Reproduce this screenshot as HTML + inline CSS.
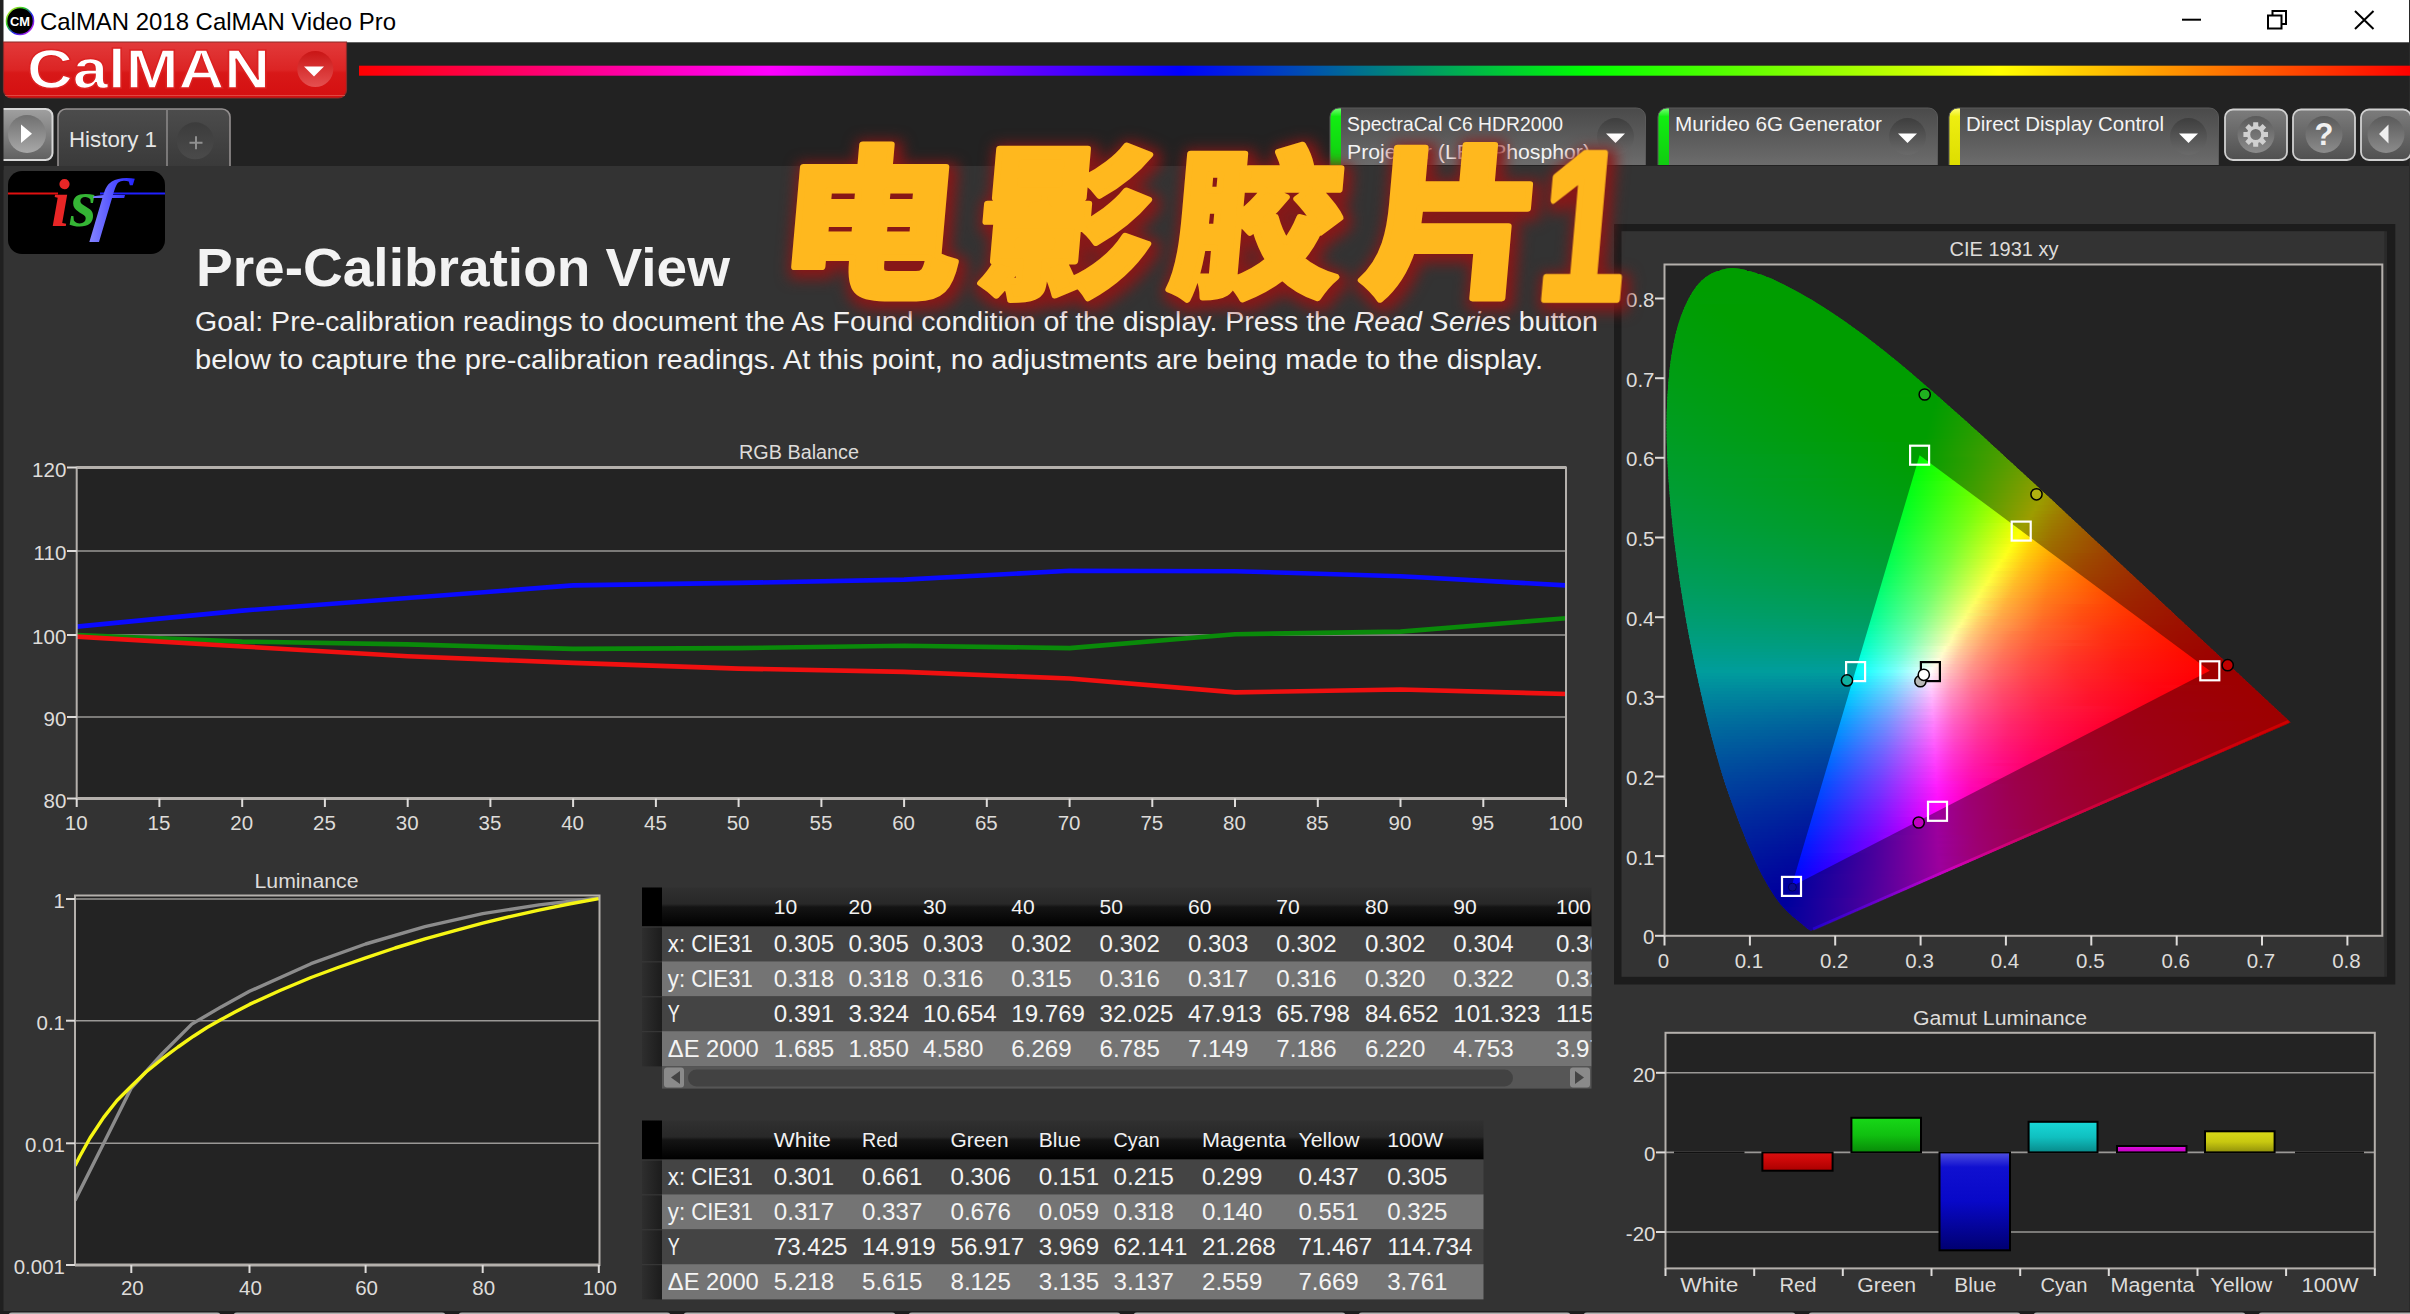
<!DOCTYPE html>
<html><head><meta charset="utf-8"><title>CalMAN 2018 CalMAN Video Pro</title>
<style>html,body{margin:0;padding:0;background:#333;overflow:hidden}svg{display:block}text{font-family:"Liberation Sans","Noto Sans CJK SC",sans-serif}</style></head>
<body>
<svg width="2410" height="1314" viewBox="0 0 2410 1314">
<defs>
<linearGradient id="cmring" x1="0" y1="0" x2="1" y2="1"><stop offset="0" stop-color="#ee3"/><stop offset=".35" stop-color="#2c2"/><stop offset=".6" stop-color="#22e"/><stop offset="1" stop-color="#e2e"/></linearGradient>
<linearGradient id="redb" x1="0" y1="0" x2="0" y2="1"><stop offset="0" stop-color="#e23a3a"/><stop offset="0.5" stop-color="#dc2424"/><stop offset="0.55" stop-color="#d81818"/><stop offset="1" stop-color="#d40f10"/></linearGradient>
<linearGradient id="redc" x1="0" y1="0" x2="0" y2="1"><stop offset="0" stop-color="#c91515"/><stop offset="1" stop-color="#e55050"/></linearGradient>
<linearGradient id="rain" x1="0" y1="0" x2="1" y2="0"><stop offset="0" stop-color="#f00"/><stop offset="0.2" stop-color="#f0f"/><stop offset="0.4" stop-color="#00f"/><stop offset="0.6" stop-color="#0f0"/><stop offset="0.8" stop-color="#ff0"/><stop offset="1" stop-color="#f00"/></linearGradient>
<linearGradient id="btn" x1="0" y1="0" x2="0" y2="1"><stop offset="0" stop-color="#a0a0a0"/><stop offset="0.5" stop-color="#808080"/><stop offset="1" stop-color="#606060"/></linearGradient>
<linearGradient id="btnc" x1="0" y1="0" x2="0" y2="1"><stop offset="0" stop-color="#707070"/><stop offset="1" stop-color="#a8a8a8"/></linearGradient>
<linearGradient id="tab" x1="0" y1="0" x2="0" y2="1"><stop offset="0" stop-color="#4c4c4c"/><stop offset="1" stop-color="#3a3a3a"/></linearGradient>
<linearGradient id="plusc" x1="0" y1="0" x2="0" y2="1"><stop offset="0" stop-color="#3c3c3c"/><stop offset="1" stop-color="#4a4a4a"/></linearGradient>
<linearGradient id="dtab" x1="0" y1="0" x2="0" y2="1"><stop offset="0" stop-color="#4a4a4a"/><stop offset="1" stop-color="#6c6c6c"/></linearGradient>
<linearGradient id="gstripe" x1="0" y1="0" x2="0" y2="1"><stop offset="0" stop-color="#7f7"/><stop offset="0.15" stop-color="#1e1"/><stop offset="1" stop-color="#1c1"/></linearGradient>
<linearGradient id="ystripe" x1="0" y1="0" x2="0" y2="1"><stop offset="0" stop-color="#ff7"/><stop offset="0.15" stop-color="#ee1"/><stop offset="1" stop-color="#dd0"/></linearGradient>
<linearGradient id="ddc" x1="0" y1="0" x2="0" y2="1"><stop offset="0" stop-color="#3e3e3e"/><stop offset="1" stop-color="#6a6a6a"/></linearGradient>
<clipPath id="cpa"><path d="M1330.0,165V117a9,9 0 0 1 9,-9H1636.5a9,9 0 0 1 9,9V165Z"/></clipPath>
<clipPath id="cpb"><path d="M1658.0,165V117a9,9 0 0 1 9,-9H1928.5a9,9 0 0 1 9,9V165Z"/></clipPath>
<clipPath id="cpc"><path d="M1949.0,165V117a9,9 0 0 1 9,-9H2209.5a9,9 0 0 1 9,9V165Z"/></clipPath>
<linearGradient id="rbtn" x1="0" y1="0" x2="0" y2="1"><stop offset="0" stop-color="#7c7c7c"/><stop offset="0.5" stop-color="#666"/><stop offset="1" stop-color="#505050"/></linearGradient>
<linearGradient id="rbtnc" x1="0" y1="0" x2="0" y2="1"><stop offset="0" stop-color="#5a5a5a"/><stop offset="1" stop-color="#8c8c8c"/></linearGradient>
<linearGradient id="isfr" x1="0" y1="0" x2="1" y2="0"><stop offset="0" stop-color="#f55"/><stop offset="1" stop-color="#d00"/></linearGradient>
<linearGradient id="isfb" x1="0" y1="0" x2="1" y2="0"><stop offset="0" stop-color="#88f"/><stop offset="1" stop-color="#22f"/></linearGradient>
<clipPath id="rgbclip"><rect x="76.7" y="467.5" width="1489.3" height="331.0"/></clipPath>
<clipPath id="lumclip"><rect x="75.0" y="895" width="524.5" height="370.0"/></clipPath>
<linearGradient id="thead" x1="0" y1="0" x2="0" y2="1"><stop offset="0" stop-color="#303030"/><stop offset="0.42" stop-color="#282828"/><stop offset="0.5" stop-color="#141414"/><stop offset="1" stop-color="#000"/></linearGradient>
<linearGradient id="tleft" x1="0" y1="0" x2="1" y2="0"><stop offset="0" stop-color="#2e2e2e"/><stop offset="1" stop-color="#1c1c1c"/></linearGradient>
<clipPath id="t1"><rect x="662" y="887.5" width="929.5" height="400"/></clipPath>
<clipPath id="t2"><rect x="662" y="1120.5" width="821.5" height="400"/></clipPath>
<linearGradient id="bR" x1="0" y1="0" x2="0" y2="1"><stop offset="0" stop-color="#d81010"/><stop offset="0.4" stop-color="#cc0808"/><stop offset="1" stop-color="#a00"/></linearGradient>
<linearGradient id="bG" x1="0" y1="0" x2="0" y2="1"><stop offset="0" stop-color="#18d818"/><stop offset="0.5" stop-color="#10c010"/><stop offset="1" stop-color="#088a08"/></linearGradient>
<linearGradient id="bB" x1="0" y1="0" x2="0" y2="1"><stop offset="0" stop-color="#5050e0"/><stop offset="0.15" stop-color="#1010d0"/><stop offset="0.5" stop-color="#0808c8"/><stop offset="1" stop-color="#000070"/></linearGradient>
<linearGradient id="bC" x1="0" y1="0" x2="0" y2="1"><stop offset="0" stop-color="#18d8d8"/><stop offset="0.5" stop-color="#10c0c0"/><stop offset="1" stop-color="#088a8a"/></linearGradient>
<linearGradient id="bM" x1="0" y1="0" x2="0" y2="1"><stop offset="0" stop-color="#e010e0"/><stop offset="1" stop-color="#c000c0"/></linearGradient>
<linearGradient id="bY" x1="0" y1="0" x2="0" y2="1"><stop offset="0" stop-color="#d8d818"/><stop offset="0.5" stop-color="#c8c810"/><stop offset="1" stop-color="#90900a"/></linearGradient>
<filter id="glow" x="-10%" y="-25%" width="120%" height="150%" color-interpolation-filters="sRGB"><feMorphology in="SourceAlpha" operator="dilate" radius="4.5" result="d"/><feGaussianBlur in="d" stdDeviation="7" result="b"/><feOffset in="b" dx="3" dy="4" result="o"/><feFlood flood-color="#8c1616" flood-opacity="0.95"/><feComposite in2="o" operator="in" result="s"/><feMerge><feMergeNode in="s"/><feMergeNode in="SourceGraphic"/></feMerge></filter>
</defs>
<rect x="0.0" y="0.0" width="2410.0" height="1314.0" fill="#333" />
<rect x="0.0" y="42.0" width="2410.0" height="124.0" fill="#222" />
<rect x="0.0" y="0.0" width="2410.0" height="42.3" fill="#fff" />
<rect x="0.0" y="0.0" width="3.5" height="1314.0" fill="#202020" />
<rect x="2409.0" y="0.0" width="1.0" height="1314.0" fill="#2a2a2a" />
<circle cx="20" cy="21" r="13.5" fill="#000" stroke="url(#cmring)" stroke-width="1.6"/>
<text x="20.0" y="26.0" font-size="13.5" fill="#fff" textLength="20.0" lengthAdjust="spacingAndGlyphs" text-anchor="middle" font-weight="bold" >CM</text>
<text x="40.0" y="30.2" font-size="24.2" fill="#000" textLength="356.0" lengthAdjust="spacingAndGlyphs" >CalMAN 2018 CalMAN Video Pro</text>
<path d="M2182,19.7H2201" stroke="#000" stroke-width="2" fill="none"/>
<path d="M2268,15.5h13.5v13h-13.5z M2272.5,15.5v-4.5h13.5v13h-4.5" stroke="#000" stroke-width="2" fill="none"/>
<path d="M2355,11l18.5,18M2373.5,11l-18.5,18" stroke="#000" stroke-width="2" fill="none"/>
<path d="M3.5,42H346.5V90a8,8 0 0 1 -8,8H11.5a8,8 0 0 1 -8,-8Z" fill="url(#redb)" stroke="#8a2a28" stroke-width="1.2"/>
<path d="M5,95.5H345" stroke="#e86a60" stroke-width="1" opacity=".6"/>
<text x="27.0" y="88.0" font-size="56.0" fill="#fff" textLength="243.0" lengthAdjust="spacingAndGlyphs" font-weight="bold" stroke="#dc2222" stroke-width="1.4" style="paint-order:fill stroke">CalMAN</text>
<circle cx="315.3" cy="69" r="18" fill="url(#redc)"/>
<path d="M304,66.5h20l-10,10z" fill="#fff"/>
<rect x="359.0" y="65.7" width="2051.0" height="10.0" fill="url(#rain)" />
<rect x="-6" y="109" width="58.5" height="51" rx="7" fill="url(#btn)" stroke="#d8d8d8" stroke-width="2"/>
<circle cx="27" cy="134" r="19" fill="url(#btnc)"/>
<path d="M21,124.5V143L32,133.7Z" fill="#fff"/>
<rect x="0.0" y="100.0" width="3.5" height="70.0" fill="#202020" />
<path d="M58,166V117a8,8 0 0 1 8,-8H222a8,8 0 0 1 8,8V166" fill="url(#tab)" stroke="#949090" stroke-width="1.6"/>
<path d="M167,110V166" stroke="#8a8888" stroke-width="1.6"/>
<text x="69.0" y="147.0" font-size="22.5" fill="#e6e6e6" textLength="88.0" lengthAdjust="spacingAndGlyphs" >History 1</text>
<circle cx="195.3" cy="140.8" r="18.5" fill="url(#plusc)"/>
<path d="M189.5,142.7h13M196,136.2v13" stroke="#909090" stroke-width="2"/>
<g clip-path="url(#cpa)">
<rect x="1330.0" y="108.0" width="315.5" height="57.0" fill="url(#dtab)" />
<rect x="1330.0" y="108.0" width="11.0" height="57.0" fill="url(#gstripe)" />
</g>
<path d="M1330.0,165V117a9,9 0 0 1 9,-9H1636.5a9,9 0 0 1 9,9V165" fill="none" stroke="#5a5a5a" stroke-width="1"/>
<text x="1347.0" y="131.0" font-size="20.0" fill="#f4f4f4" textLength="216.0" lengthAdjust="spacingAndGlyphs" >SpectraCal C6 HDR2000</text>
<text x="1347.0" y="158.5" font-size="20.0" fill="#f4f4f4" textLength="243.0" lengthAdjust="spacingAndGlyphs" >Projector (LED Phosphor)</text>
<circle cx="1615.5" cy="136.5" r="18.5" fill="url(#ddc)"/>
<path d="M1606.0,133.5h19l-9.5,9.5z" fill="#fff"/>
<g clip-path="url(#cpb)">
<rect x="1658.0" y="108.0" width="279.5" height="57.0" fill="url(#dtab)" />
<rect x="1658.0" y="108.0" width="11.0" height="57.0" fill="url(#gstripe)" />
</g>
<path d="M1658.0,165V117a9,9 0 0 1 9,-9H1928.5a9,9 0 0 1 9,9V165" fill="none" stroke="#5a5a5a" stroke-width="1"/>
<text x="1675.0" y="131.0" font-size="20.0" fill="#f4f4f4" textLength="207.0" lengthAdjust="spacingAndGlyphs" >Murideo 6G Generator</text>
<circle cx="1907.5" cy="136.5" r="18.5" fill="url(#ddc)"/>
<path d="M1898.0,133.5h19l-9.5,9.5z" fill="#fff"/>
<g clip-path="url(#cpc)">
<rect x="1949.0" y="108.0" width="269.5" height="57.0" fill="url(#dtab)" />
<rect x="1949.0" y="108.0" width="11.0" height="57.0" fill="url(#ystripe)" />
</g>
<path d="M1949.0,165V117a9,9 0 0 1 9,-9H2209.5a9,9 0 0 1 9,9V165" fill="none" stroke="#5a5a5a" stroke-width="1"/>
<text x="1966.0" y="131.0" font-size="20.0" fill="#f4f4f4" textLength="198.0" lengthAdjust="spacingAndGlyphs" >Direct Display Control</text>
<circle cx="2188.5" cy="136.5" r="18.5" fill="url(#ddc)"/>
<path d="M2179.0,133.5h19l-9.5,9.5z" fill="#fff"/>
<rect x="2225.0" y="109.5" width="62.0" height="50.5" rx="8" fill="url(#rbtn)" stroke="#d0d0d0" stroke-width="1.8"/>
<circle cx="2256.0" cy="134.5" r="18.5" fill="url(#rbtnc)"/>
<rect x="2293.0" y="109.5" width="62.0" height="50.5" rx="8" fill="url(#rbtn)" stroke="#d0d0d0" stroke-width="1.8"/>
<circle cx="2324.0" cy="134.5" r="18.5" fill="url(#rbtnc)"/>
<rect x="2361.0" y="109.5" width="50.0" height="50.5" rx="8" fill="url(#rbtn)" stroke="#d0d0d0" stroke-width="1.8"/>
<circle cx="2386.0" cy="134.5" r="18.5" fill="url(#rbtnc)"/>
<path d="M2268.0,132.0 L2268.0,137.0 L2264.0,137.1 L2263.4,138.6 L2266.1,141.4 L2262.6,144.9 L2259.8,142.2 L2258.3,142.8 L2258.2,146.8 L2253.2,146.8 L2253.1,142.8 L2251.6,142.2 L2248.8,144.9 L2245.3,141.4 L2248.0,138.6 L2247.4,137.1 L2243.4,137.0 L2243.4,132.0 L2247.4,131.9 L2248.0,130.4 L2245.3,127.6 L2248.8,124.1 L2251.6,126.8 L2253.1,126.2 L2253.2,122.2 L2258.2,122.2 L2258.3,126.2 L2259.8,126.8 L2262.6,124.1 L2266.1,127.6 L2263.4,130.4 L2264.0,131.9 Z M2250.2,134.5 a5.5,5.5 0 1 0 11,0a5.5,5.5 0 1 0 -11,0Z" fill="#d0d0d0" fill-rule="evenodd"/>
<text x="2324.0" y="145.0" font-size="31.0" fill="#f0f0f0" text-anchor="middle" font-weight="bold" >?</text>
<path d="M2388.5,124.5V143.5L2379,134Z" fill="#eee"/>
<rect x="8.0" y="171.0" width="157.0" height="83.0" fill="#000" rx="14"/>
<path d="M8,193.5H58" stroke="#e01010" stroke-width="2.2"/><path d="M100,193.5H165" stroke="#2020ff" stroke-width="2.2"/>
<text x="51" y="226" style="font-family:'Liberation Serif',serif" font-style="italic" font-weight="bold" font-size="68"><tspan fill="#e82626">i</tspan><tspan fill="#35b535">s</tspan></text>
<text transform="translate(88,227) scale(1.75,1.04)" style="font-family:'Liberation Serif',serif" font-style="italic" font-size="68" fill="url(#isfb)">f</text>
<text x="196.0" y="286.0" font-size="54.5" fill="#f3f3f3" textLength="534.0" lengthAdjust="spacingAndGlyphs" font-weight="bold" >Pre-Calibration View</text>
<text x="195.0" y="331.0" font-size="27.0" fill="#f3f3f3" textLength="1403.0" lengthAdjust="spacingAndGlyphs" >Goal: Pre-calibration readings to document the As Found condition of the display. Press the <tspan font-style="italic">Read Series</tspan> button</text>
<text x="195.0" y="368.5" font-size="27.0" fill="#f3f3f3" textLength="1348.0" lengthAdjust="spacingAndGlyphs" >below to capture the pre-calibration readings. At this point, no adjustments are being made to the display.</text>
<rect x="76.7" y="467.5" width="1489.3" height="331.0" fill="#232323" />
<path d="M76.7,551.0H1566.0" stroke="#9a9896" stroke-width="1.6"/>
<path d="M76.7,635.0H1566.0" stroke="#9a9896" stroke-width="1.6"/>
<path d="M76.7,717.0H1566.0" stroke="#9a9896" stroke-width="1.6"/>
<g clip-path="url(#rgbclip)" fill="none" stroke-width="4.6" stroke-linejoin="round">
<polyline stroke="#0a0aff" points="76.7,626.6 242.2,610.6 407.7,598.0 573.1,585.4 738.6,582.9 904.1,579.6 1069.6,570.7 1235.0,571.2 1400.5,576.2 1566.0,585.4"/>
<polyline stroke="#0a8a0a" points="76.7,635.0 242.2,641.6 407.7,644.4 573.1,648.9 738.6,648.1 904.1,645.7 1069.6,648.1 1235.0,634.2 1400.5,631.6 1566.0,618.2"/>
<polyline stroke="#f01010" points="76.7,636.6 242.2,646.5 407.7,656.3 573.1,662.9 738.6,668.6 904.1,671.9 1069.6,678.5 1235.0,692.4 1400.5,689.5 1566.0,694.0"/>
</g>
<rect x="76.7" y="467.5" width="1489.3" height="331.0" fill="none" stroke="#b4b0ac" stroke-width="2"/>
<path d="M76.7,467.5H1566.0" stroke="#b4b0ac" stroke-width="3"/>
<path d="M76.7,798.5H1566.0" stroke="#b4b0ac" stroke-width="3"/>
<path d="M67,467.5H76.7" stroke="#dedcda" stroke-width="2"/>
<text x="66.3" y="476.5" font-size="20.5" fill="#dedcda" text-anchor="end" >120</text>
<path d="M67,551.0H76.7" stroke="#dedcda" stroke-width="2"/>
<text x="66.3" y="560.0" font-size="20.5" fill="#dedcda" text-anchor="end" >110</text>
<path d="M67,635.0H76.7" stroke="#dedcda" stroke-width="2"/>
<text x="66.3" y="644.0" font-size="20.5" fill="#dedcda" text-anchor="end" >100</text>
<path d="M67,717.0H76.7" stroke="#dedcda" stroke-width="2"/>
<text x="66.3" y="726.0" font-size="20.5" fill="#dedcda" text-anchor="end" >90</text>
<path d="M67,798.5H76.7" stroke="#dedcda" stroke-width="2"/>
<text x="66.3" y="807.5" font-size="20.5" fill="#dedcda" text-anchor="end" >80</text>
<path d="M76.7,798.5V807" stroke="#dedcda" stroke-width="2"/>
<text x="76.2" y="830.3" font-size="20.5" fill="#dedcda" text-anchor="middle" >10</text>
<path d="M159.4,798.5V807" stroke="#dedcda" stroke-width="2"/>
<text x="158.9" y="830.3" font-size="20.5" fill="#dedcda" text-anchor="middle" >15</text>
<path d="M242.2,798.5V807" stroke="#dedcda" stroke-width="2"/>
<text x="241.7" y="830.3" font-size="20.5" fill="#dedcda" text-anchor="middle" >20</text>
<path d="M324.9,798.5V807" stroke="#dedcda" stroke-width="2"/>
<text x="324.4" y="830.3" font-size="20.5" fill="#dedcda" text-anchor="middle" >25</text>
<path d="M407.7,798.5V807" stroke="#dedcda" stroke-width="2"/>
<text x="407.2" y="830.3" font-size="20.5" fill="#dedcda" text-anchor="middle" >30</text>
<path d="M490.4,798.5V807" stroke="#dedcda" stroke-width="2"/>
<text x="489.9" y="830.3" font-size="20.5" fill="#dedcda" text-anchor="middle" >35</text>
<path d="M573.1,798.5V807" stroke="#dedcda" stroke-width="2"/>
<text x="572.6" y="830.3" font-size="20.5" fill="#dedcda" text-anchor="middle" >40</text>
<path d="M655.9,798.5V807" stroke="#dedcda" stroke-width="2"/>
<text x="655.4" y="830.3" font-size="20.5" fill="#dedcda" text-anchor="middle" >45</text>
<path d="M738.6,798.5V807" stroke="#dedcda" stroke-width="2"/>
<text x="738.1" y="830.3" font-size="20.5" fill="#dedcda" text-anchor="middle" >50</text>
<path d="M821.4,798.5V807" stroke="#dedcda" stroke-width="2"/>
<text x="820.9" y="830.3" font-size="20.5" fill="#dedcda" text-anchor="middle" >55</text>
<path d="M904.1,798.5V807" stroke="#dedcda" stroke-width="2"/>
<text x="903.6" y="830.3" font-size="20.5" fill="#dedcda" text-anchor="middle" >60</text>
<path d="M986.8,798.5V807" stroke="#dedcda" stroke-width="2"/>
<text x="986.3" y="830.3" font-size="20.5" fill="#dedcda" text-anchor="middle" >65</text>
<path d="M1069.6,798.5V807" stroke="#dedcda" stroke-width="2"/>
<text x="1069.1" y="830.3" font-size="20.5" fill="#dedcda" text-anchor="middle" >70</text>
<path d="M1152.3,798.5V807" stroke="#dedcda" stroke-width="2"/>
<text x="1151.8" y="830.3" font-size="20.5" fill="#dedcda" text-anchor="middle" >75</text>
<path d="M1235.0,798.5V807" stroke="#dedcda" stroke-width="2"/>
<text x="1234.5" y="830.3" font-size="20.5" fill="#dedcda" text-anchor="middle" >80</text>
<path d="M1317.8,798.5V807" stroke="#dedcda" stroke-width="2"/>
<text x="1317.3" y="830.3" font-size="20.5" fill="#dedcda" text-anchor="middle" >85</text>
<path d="M1400.5,798.5V807" stroke="#dedcda" stroke-width="2"/>
<text x="1400.0" y="830.3" font-size="20.5" fill="#dedcda" text-anchor="middle" >90</text>
<path d="M1483.3,798.5V807" stroke="#dedcda" stroke-width="2"/>
<text x="1482.8" y="830.3" font-size="20.5" fill="#dedcda" text-anchor="middle" >95</text>
<path d="M1566.0,798.5V807" stroke="#dedcda" stroke-width="2"/>
<text x="1565.5" y="830.3" font-size="20.5" fill="#dedcda" text-anchor="middle" >100</text>
<text x="799.0" y="459.0" font-size="19.5" fill="#dedcda" textLength="120.0" lengthAdjust="spacingAndGlyphs" text-anchor="middle" >RGB Balance</text>
<rect x="75.0" y="895.0" width="524.5" height="370.0" fill="#232323" />
<path d="M75.0,899.0H599.5" stroke="#9a9896" stroke-width="1.6"/>
<path d="M75.0,1020.7H599.5" stroke="#9a9896" stroke-width="1.6"/>
<path d="M75.0,1143.3H599.5" stroke="#9a9896" stroke-width="1.6"/>
<g clip-path="url(#lumclip)" fill="none" stroke-linejoin="round">
<polyline stroke="#8c8c8c" stroke-width="3.4" points="75.0,1200.4 103.7,1143.3 131.3,1088.0 162.4,1053.5 191.8,1024.1 221.1,1006.9 249.5,991.3 311.0,963.7 365.6,944.0 425.0,926.7 482.7,913.6 539.0,904.9 598.8,898.0"/>
<polyline stroke="#f6f614" stroke-width="3.4" points="75.0,1165.8 80.0,1156.0 90.0,1138.0 103.7,1117.4 117.0,1100.5 131.3,1086.3 146.0,1072.0 162.4,1058.7 178.0,1047.0 193.5,1036.2 207.0,1027.5 221.1,1019.6 235.0,1012.0 249.5,1004.4 280.0,990.5 311.0,977.5 338.0,967.5 365.6,957.8 395.0,948.0 425.0,938.8 454.0,930.8 482.7,923.2 511.0,916.3 539.0,910.1 569.0,904.0 598.8,898.7"/>
</g>
<rect x="75.0" y="895.5" width="524.5" height="369.5" fill="none" stroke="#b4b0ac" stroke-width="2"/>
<path d="M75.0,1265.0H599.5" stroke="#b4b0ac" stroke-width="3"/>
<path d="M66,899.0H75.0" stroke="#dedcda" stroke-width="2"/>
<text x="65.0" y="908.0" font-size="20.5" fill="#dedcda" text-anchor="end" >1</text>
<path d="M66,1020.7H75.0" stroke="#dedcda" stroke-width="2"/>
<text x="65.0" y="1029.7" font-size="20.5" fill="#dedcda" text-anchor="end" >0.1</text>
<path d="M66,1143.3H75.0" stroke="#dedcda" stroke-width="2"/>
<text x="65.0" y="1152.3" font-size="20.5" fill="#dedcda" text-anchor="end" >0.01</text>
<path d="M66,1265.0H75.0" stroke="#dedcda" stroke-width="2"/>
<text x="65.0" y="1274.0" font-size="20.5" fill="#dedcda" text-anchor="end" >0.001</text>
<path d="M131.3,1265.0V1273" stroke="#dedcda" stroke-width="2"/>
<text x="132.3" y="1294.7" font-size="20.5" fill="#dedcda" text-anchor="middle" >20</text>
<path d="M249.5,1265.0V1273" stroke="#dedcda" stroke-width="2"/>
<text x="250.5" y="1294.7" font-size="20.5" fill="#dedcda" text-anchor="middle" >40</text>
<path d="M365.6,1265.0V1273" stroke="#dedcda" stroke-width="2"/>
<text x="366.6" y="1294.7" font-size="20.5" fill="#dedcda" text-anchor="middle" >60</text>
<path d="M482.7,1265.0V1273" stroke="#dedcda" stroke-width="2"/>
<text x="483.7" y="1294.7" font-size="20.5" fill="#dedcda" text-anchor="middle" >80</text>
<path d="M598.8,1265.0V1273" stroke="#dedcda" stroke-width="2"/>
<text x="599.8" y="1294.7" font-size="20.5" fill="#dedcda" text-anchor="middle" >100</text>
<text x="306.5" y="888.0" font-size="19.5" fill="#dedcda" textLength="104.0" lengthAdjust="spacingAndGlyphs" text-anchor="middle" >Luminance</text>
<rect x="642.0" y="887.5" width="949.5" height="39.0" fill="url(#thead)" />
<rect x="642.0" y="887.5" width="20.0" height="39.0" fill="#000" />
<g clip-path="url(#t1)">
<text x="773.8" y="914.0" font-size="20.4" fill="#f2f2f2" textLength="23.4" lengthAdjust="spacingAndGlyphs" >10</text>
<text x="848.6" y="914.0" font-size="20.4" fill="#f2f2f2" textLength="23.4" lengthAdjust="spacingAndGlyphs" >20</text>
<text x="923.0" y="914.0" font-size="20.4" fill="#f2f2f2" textLength="23.4" lengthAdjust="spacingAndGlyphs" >30</text>
<text x="1011.3" y="914.0" font-size="20.4" fill="#f2f2f2" textLength="23.4" lengthAdjust="spacingAndGlyphs" >40</text>
<text x="1099.6" y="914.0" font-size="20.4" fill="#f2f2f2" textLength="23.4" lengthAdjust="spacingAndGlyphs" >50</text>
<text x="1188.0" y="914.0" font-size="20.4" fill="#f2f2f2" textLength="23.4" lengthAdjust="spacingAndGlyphs" >60</text>
<text x="1276.3" y="914.0" font-size="20.4" fill="#f2f2f2" textLength="23.4" lengthAdjust="spacingAndGlyphs" >70</text>
<text x="1365.0" y="914.0" font-size="20.4" fill="#f2f2f2" textLength="23.4" lengthAdjust="spacingAndGlyphs" >80</text>
<text x="1453.3" y="914.0" font-size="20.4" fill="#f2f2f2" textLength="23.4" lengthAdjust="spacingAndGlyphs" >90</text>
<text x="1556.0" y="914.0" font-size="20.4" fill="#f2f2f2" textLength="35.0" lengthAdjust="spacingAndGlyphs" >100</text>
</g>
<rect x="662.0" y="926.5" width="929.5" height="35.2" fill="#444444" />
<rect x="642.0" y="926.5" width="20.0" height="35.2" fill="url(#tleft)" />
<path d="M642,927.0H662" stroke="#3a3a3a" stroke-width="1"/>
<g clip-path="url(#t1)">
<text x="667.8" y="951.9" font-size="24.1" fill="#f4f4f4" textLength="85.0" lengthAdjust="spacingAndGlyphs" >x: CIE31</text>
<text x="773.8" y="951.9" font-size="24.1" fill="#f4f4f4" >0.305</text>
<text x="848.6" y="951.9" font-size="24.1" fill="#f4f4f4" >0.305</text>
<text x="923.0" y="951.9" font-size="24.1" fill="#f4f4f4" >0.303</text>
<text x="1011.3" y="951.9" font-size="24.1" fill="#f4f4f4" >0.302</text>
<text x="1099.6" y="951.9" font-size="24.1" fill="#f4f4f4" >0.302</text>
<text x="1188.0" y="951.9" font-size="24.1" fill="#f4f4f4" >0.303</text>
<text x="1276.3" y="951.9" font-size="24.1" fill="#f4f4f4" >0.302</text>
<text x="1365.0" y="951.9" font-size="24.1" fill="#f4f4f4" >0.302</text>
<text x="1453.3" y="951.9" font-size="24.1" fill="#f4f4f4" >0.304</text>
<text x="1556.0" y="951.9" font-size="24.1" fill="#f4f4f4" >0.305</text>
</g>
<rect x="662.0" y="961.4" width="929.5" height="35.2" fill="#747474" />
<rect x="642.0" y="961.4" width="20.0" height="35.2" fill="url(#tleft)" />
<path d="M642,961.9H662" stroke="#3a3a3a" stroke-width="1"/>
<g clip-path="url(#t1)">
<text x="667.8" y="986.8" font-size="24.1" fill="#f4f4f4" textLength="85.0" lengthAdjust="spacingAndGlyphs" >y: CIE31</text>
<text x="773.8" y="986.8" font-size="24.1" fill="#f4f4f4" >0.318</text>
<text x="848.6" y="986.8" font-size="24.1" fill="#f4f4f4" >0.318</text>
<text x="923.0" y="986.8" font-size="24.1" fill="#f4f4f4" >0.316</text>
<text x="1011.3" y="986.8" font-size="24.1" fill="#f4f4f4" >0.315</text>
<text x="1099.6" y="986.8" font-size="24.1" fill="#f4f4f4" >0.316</text>
<text x="1188.0" y="986.8" font-size="24.1" fill="#f4f4f4" >0.317</text>
<text x="1276.3" y="986.8" font-size="24.1" fill="#f4f4f4" >0.316</text>
<text x="1365.0" y="986.8" font-size="24.1" fill="#f4f4f4" >0.320</text>
<text x="1453.3" y="986.8" font-size="24.1" fill="#f4f4f4" >0.322</text>
<text x="1556.0" y="986.8" font-size="24.1" fill="#f4f4f4" >0.325</text>
</g>
<rect x="662.0" y="996.3" width="929.5" height="35.2" fill="#444444" />
<rect x="642.0" y="996.3" width="20.0" height="35.2" fill="url(#tleft)" />
<path d="M642,996.8H662" stroke="#3a3a3a" stroke-width="1"/>
<g clip-path="url(#t1)">
<text x="667.8" y="1021.7" font-size="24.1" fill="#f4f4f4" textLength="12.0" lengthAdjust="spacingAndGlyphs" >Y</text>
<text x="773.8" y="1021.7" font-size="24.1" fill="#f4f4f4" >0.391</text>
<text x="848.6" y="1021.7" font-size="24.1" fill="#f4f4f4" >3.324</text>
<text x="923.0" y="1021.7" font-size="24.1" fill="#f4f4f4" >10.654</text>
<text x="1011.3" y="1021.7" font-size="24.1" fill="#f4f4f4" >19.769</text>
<text x="1099.6" y="1021.7" font-size="24.1" fill="#f4f4f4" >32.025</text>
<text x="1188.0" y="1021.7" font-size="24.1" fill="#f4f4f4" >47.913</text>
<text x="1276.3" y="1021.7" font-size="24.1" fill="#f4f4f4" >65.798</text>
<text x="1365.0" y="1021.7" font-size="24.1" fill="#f4f4f4" >84.652</text>
<text x="1453.3" y="1021.7" font-size="24.1" fill="#f4f4f4" >101.323</text>
<text x="1556.0" y="1021.7" font-size="24.1" fill="#f4f4f4" >115.125</text>
</g>
<rect x="662.0" y="1031.2" width="929.5" height="35.2" fill="#747474" />
<rect x="642.0" y="1031.2" width="20.0" height="35.2" fill="url(#tleft)" />
<path d="M642,1031.7H662" stroke="#3a3a3a" stroke-width="1"/>
<g clip-path="url(#t1)">
<text x="667.8" y="1056.6" font-size="24.1" fill="#f4f4f4" textLength="91.0" lengthAdjust="spacingAndGlyphs" >ΔE 2000</text>
<text x="773.8" y="1056.6" font-size="24.1" fill="#f4f4f4" >1.685</text>
<text x="848.6" y="1056.6" font-size="24.1" fill="#f4f4f4" >1.850</text>
<text x="923.0" y="1056.6" font-size="24.1" fill="#f4f4f4" >4.580</text>
<text x="1011.3" y="1056.6" font-size="24.1" fill="#f4f4f4" >6.269</text>
<text x="1099.6" y="1056.6" font-size="24.1" fill="#f4f4f4" >6.785</text>
<text x="1188.0" y="1056.6" font-size="24.1" fill="#f4f4f4" >7.149</text>
<text x="1276.3" y="1056.6" font-size="24.1" fill="#f4f4f4" >7.186</text>
<text x="1365.0" y="1056.6" font-size="24.1" fill="#f4f4f4" >6.220</text>
<text x="1453.3" y="1056.6" font-size="24.1" fill="#f4f4f4" >4.753</text>
<text x="1556.0" y="1056.6" font-size="24.1" fill="#f4f4f4" >3.976</text>
</g>
<rect x="662.0" y="1066.1" width="929.5" height="22.5" fill="#565656" />
<rect x="664.0" y="1067.6" width="20.0" height="20.0" fill="#8a8a8a" rx="3"/>
<rect x="1570.0" y="1067.6" width="20.0" height="20.0" fill="#8a8a8a" rx="3"/>
<path d="M680,1071.1v13l-9,-6.5z" fill="#444"/>
<path d="M1575,1071.1v13l9,-6.5z" fill="#444"/>
<rect x="688.0" y="1069.6" width="825.0" height="17.0" fill="#424242" rx="8.5"/>
<rect x="642.0" y="1120.5" width="841.5" height="39.0" fill="url(#thead)" />
<rect x="642.0" y="1120.5" width="20.0" height="39.0" fill="#000" />
<g clip-path="url(#t2)">
<text x="773.8" y="1147.0" font-size="20.4" fill="#f2f2f2" textLength="57.0" lengthAdjust="spacingAndGlyphs" >White</text>
<text x="862.0" y="1147.0" font-size="20.4" fill="#f2f2f2" textLength="36.0" lengthAdjust="spacingAndGlyphs" >Red</text>
<text x="950.5" y="1147.0" font-size="20.4" fill="#f2f2f2" textLength="58.0" lengthAdjust="spacingAndGlyphs" >Green</text>
<text x="1038.8" y="1147.0" font-size="20.4" fill="#f2f2f2" textLength="42.0" lengthAdjust="spacingAndGlyphs" >Blue</text>
<text x="1113.6" y="1147.0" font-size="20.4" fill="#f2f2f2" textLength="46.0" lengthAdjust="spacingAndGlyphs" >Cyan</text>
<text x="1202.0" y="1147.0" font-size="20.4" fill="#f2f2f2" textLength="84.0" lengthAdjust="spacingAndGlyphs" >Magenta</text>
<text x="1298.4" y="1147.0" font-size="20.4" fill="#f2f2f2" textLength="61.0" lengthAdjust="spacingAndGlyphs" >Yellow</text>
<text x="1387.2" y="1147.0" font-size="20.4" fill="#f2f2f2" textLength="56.0" lengthAdjust="spacingAndGlyphs" >100W</text>
</g>
<rect x="662.0" y="1159.5" width="821.5" height="35.2" fill="#444444" />
<rect x="642.0" y="1159.5" width="20.0" height="35.2" fill="url(#tleft)" />
<path d="M642,1160.0H662" stroke="#3a3a3a" stroke-width="1"/>
<g clip-path="url(#t2)">
<text x="667.8" y="1184.9" font-size="24.1" fill="#f4f4f4" textLength="85.0" lengthAdjust="spacingAndGlyphs" >x: CIE31</text>
<text x="773.8" y="1184.9" font-size="24.1" fill="#f4f4f4" >0.301</text>
<text x="862.0" y="1184.9" font-size="24.1" fill="#f4f4f4" >0.661</text>
<text x="950.5" y="1184.9" font-size="24.1" fill="#f4f4f4" >0.306</text>
<text x="1038.8" y="1184.9" font-size="24.1" fill="#f4f4f4" >0.151</text>
<text x="1113.6" y="1184.9" font-size="24.1" fill="#f4f4f4" >0.215</text>
<text x="1202.0" y="1184.9" font-size="24.1" fill="#f4f4f4" >0.299</text>
<text x="1298.4" y="1184.9" font-size="24.1" fill="#f4f4f4" >0.437</text>
<text x="1387.2" y="1184.9" font-size="24.1" fill="#f4f4f4" >0.305</text>
</g>
<rect x="662.0" y="1194.4" width="821.5" height="35.2" fill="#747474" />
<rect x="642.0" y="1194.4" width="20.0" height="35.2" fill="url(#tleft)" />
<path d="M642,1194.9H662" stroke="#3a3a3a" stroke-width="1"/>
<g clip-path="url(#t2)">
<text x="667.8" y="1219.8" font-size="24.1" fill="#f4f4f4" textLength="85.0" lengthAdjust="spacingAndGlyphs" >y: CIE31</text>
<text x="773.8" y="1219.8" font-size="24.1" fill="#f4f4f4" >0.317</text>
<text x="862.0" y="1219.8" font-size="24.1" fill="#f4f4f4" >0.337</text>
<text x="950.5" y="1219.8" font-size="24.1" fill="#f4f4f4" >0.676</text>
<text x="1038.8" y="1219.8" font-size="24.1" fill="#f4f4f4" >0.059</text>
<text x="1113.6" y="1219.8" font-size="24.1" fill="#f4f4f4" >0.318</text>
<text x="1202.0" y="1219.8" font-size="24.1" fill="#f4f4f4" >0.140</text>
<text x="1298.4" y="1219.8" font-size="24.1" fill="#f4f4f4" >0.551</text>
<text x="1387.2" y="1219.8" font-size="24.1" fill="#f4f4f4" >0.325</text>
</g>
<rect x="662.0" y="1229.3" width="821.5" height="35.2" fill="#444444" />
<rect x="642.0" y="1229.3" width="20.0" height="35.2" fill="url(#tleft)" />
<path d="M642,1229.8H662" stroke="#3a3a3a" stroke-width="1"/>
<g clip-path="url(#t2)">
<text x="667.8" y="1254.7" font-size="24.1" fill="#f4f4f4" textLength="12.0" lengthAdjust="spacingAndGlyphs" >Y</text>
<text x="773.8" y="1254.7" font-size="24.1" fill="#f4f4f4" >73.425</text>
<text x="862.0" y="1254.7" font-size="24.1" fill="#f4f4f4" >14.919</text>
<text x="950.5" y="1254.7" font-size="24.1" fill="#f4f4f4" >56.917</text>
<text x="1038.8" y="1254.7" font-size="24.1" fill="#f4f4f4" >3.969</text>
<text x="1113.6" y="1254.7" font-size="24.1" fill="#f4f4f4" >62.141</text>
<text x="1202.0" y="1254.7" font-size="24.1" fill="#f4f4f4" >21.268</text>
<text x="1298.4" y="1254.7" font-size="24.1" fill="#f4f4f4" >71.467</text>
<text x="1387.2" y="1254.7" font-size="24.1" fill="#f4f4f4" >114.734</text>
</g>
<rect x="662.0" y="1264.2" width="821.5" height="35.2" fill="#747474" />
<rect x="642.0" y="1264.2" width="20.0" height="35.2" fill="url(#tleft)" />
<path d="M642,1264.7H662" stroke="#3a3a3a" stroke-width="1"/>
<g clip-path="url(#t2)">
<text x="667.8" y="1289.6" font-size="24.1" fill="#f4f4f4" textLength="91.0" lengthAdjust="spacingAndGlyphs" >ΔE 2000</text>
<text x="773.8" y="1289.6" font-size="24.1" fill="#f4f4f4" >5.218</text>
<text x="862.0" y="1289.6" font-size="24.1" fill="#f4f4f4" >5.615</text>
<text x="950.5" y="1289.6" font-size="24.1" fill="#f4f4f4" >8.125</text>
<text x="1038.8" y="1289.6" font-size="24.1" fill="#f4f4f4" >3.135</text>
<text x="1113.6" y="1289.6" font-size="24.1" fill="#f4f4f4" >3.137</text>
<text x="1202.0" y="1289.6" font-size="24.1" fill="#f4f4f4" >2.559</text>
<text x="1298.4" y="1289.6" font-size="24.1" fill="#f4f4f4" >7.669</text>
<text x="1387.2" y="1289.6" font-size="24.1" fill="#f4f4f4" >3.761</text>
</g>
<rect x="1614.0" y="224.0" width="781.3" height="760.5" fill="#1c1c1c" />
<rect x="1621.5" y="231.2" width="763.3" height="745.6" fill="#333" />
<rect x="2384.8" y="231.2" width="2.2" height="745.6" fill="#2a2a2a" />
<rect x="1664.5" y="264.5" width="717.8" height="671.3" fill="#232323" />
<defs><linearGradient id="c0" gradientUnits="userSpaceOnUse" x1="1719.4" x2="1746.9" y1="0" y2="0"><stop offset="0" stop-color="#00ff00"/><stop offset="1" stop-color="#00ff00"/></linearGradient><linearGradient id="c1" gradientUnits="userSpaceOnUse" x1="1710.8" x2="1757.5" y1="0" y2="0"><stop offset="0" stop-color="#00ff00"/><stop offset="1" stop-color="#00ff00"/></linearGradient><linearGradient id="c2" gradientUnits="userSpaceOnUse" x1="1705.2" x2="1766.5" y1="0" y2="0"><stop offset="0" stop-color="#00ff00"/><stop offset="1" stop-color="#00ff00"/></linearGradient><linearGradient id="c3" gradientUnits="userSpaceOnUse" x1="1701.0" x2="1774.1" y1="0" y2="0"><stop offset="0" stop-color="#00ff00"/><stop offset="1" stop-color="#00ff00"/></linearGradient><linearGradient id="c4" gradientUnits="userSpaceOnUse" x1="1697.6" x2="1780.6" y1="0" y2="0"><stop offset="0" stop-color="#00ff00"/><stop offset="1" stop-color="#00ff00"/></linearGradient><linearGradient id="c5" gradientUnits="userSpaceOnUse" x1="1695.0" x2="1786.6" y1="0" y2="0"><stop offset="0" stop-color="#00ff00"/><stop offset="1" stop-color="#00ff00"/></linearGradient><linearGradient id="c6" gradientUnits="userSpaceOnUse" x1="1692.6" x2="1792.4" y1="0" y2="0"><stop offset="0" stop-color="#00ff00"/><stop offset="1" stop-color="#00ff00"/></linearGradient><linearGradient id="c7" gradientUnits="userSpaceOnUse" x1="1690.5" x2="1798.0" y1="0" y2="0"><stop offset="0" stop-color="#00ff01"/><stop offset="1" stop-color="#00ff00"/></linearGradient><linearGradient id="c8" gradientUnits="userSpaceOnUse" x1="1688.6" x2="1803.5" y1="0" y2="0"><stop offset="0" stop-color="#00ff03"/><stop offset="1" stop-color="#00ff00"/></linearGradient><linearGradient id="c9" gradientUnits="userSpaceOnUse" x1="1686.9" x2="1808.9" y1="0" y2="0"><stop offset="0" stop-color="#00ff04"/><stop offset="1" stop-color="#00ff00"/></linearGradient><linearGradient id="c10" gradientUnits="userSpaceOnUse" x1="1685.2" x2="1814.0" y1="0" y2="0"><stop offset="0" stop-color="#00ff05"/><stop offset="1" stop-color="#00ff00"/></linearGradient><linearGradient id="c11" gradientUnits="userSpaceOnUse" x1="1683.8" x2="1818.9" y1="0" y2="0"><stop offset="0" stop-color="#00ff06"/><stop offset="1" stop-color="#00ff00"/></linearGradient><linearGradient id="c12" gradientUnits="userSpaceOnUse" x1="1682.4" x2="1823.8" y1="0" y2="0"><stop offset="0" stop-color="#00ff07"/><stop offset="0.254" stop-color="#00ff00"/><stop offset="1" stop-color="#00ff00"/></linearGradient><linearGradient id="c13" gradientUnits="userSpaceOnUse" x1="1681.0" x2="1828.5" y1="0" y2="0"><stop offset="0" stop-color="#00ff08"/><stop offset="0.284" stop-color="#00ff00"/><stop offset="1" stop-color="#00ff00"/></linearGradient><linearGradient id="c14" gradientUnits="userSpaceOnUse" x1="1679.9" x2="1833.2" y1="0" y2="0"><stop offset="0" stop-color="#00ff0a"/><stop offset="0.299" stop-color="#00ff00"/><stop offset="1" stop-color="#00ff00"/></linearGradient><linearGradient id="c15" gradientUnits="userSpaceOnUse" x1="1678.7" x2="1837.7" y1="0" y2="0"><stop offset="0" stop-color="#00ff0b"/><stop offset="0.325" stop-color="#00ff00"/><stop offset="1" stop-color="#00ff00"/></linearGradient><linearGradient id="c16" gradientUnits="userSpaceOnUse" x1="1677.6" x2="1842.1" y1="0" y2="0"><stop offset="0" stop-color="#00ff0c"/><stop offset="0.349" stop-color="#00ff00"/><stop offset="1" stop-color="#00ff00"/></linearGradient><linearGradient id="c17" gradientUnits="userSpaceOnUse" x1="1676.6" x2="1846.5" y1="0" y2="0"><stop offset="0" stop-color="#00ff0d"/><stop offset="0.365" stop-color="#00ff00"/><stop offset="1" stop-color="#00ff00"/></linearGradient><linearGradient id="c18" gradientUnits="userSpaceOnUse" x1="1675.6" x2="1850.7" y1="0" y2="0"><stop offset="0" stop-color="#00ff0e"/><stop offset="0.386" stop-color="#00ff00"/><stop offset="1" stop-color="#00ff00"/></linearGradient><linearGradient id="c19" gradientUnits="userSpaceOnUse" x1="1674.7" x2="1854.9" y1="0" y2="0"><stop offset="0" stop-color="#00ff0f"/><stop offset="0.396" stop-color="#00ff00"/><stop offset="1" stop-color="#00ff00"/></linearGradient><linearGradient id="c20" gradientUnits="userSpaceOnUse" x1="1673.9" x2="1859.1" y1="0" y2="0"><stop offset="0" stop-color="#00ff10"/><stop offset="0.419" stop-color="#00ff00"/><stop offset="1" stop-color="#00ff00"/></linearGradient><linearGradient id="c21" gradientUnits="userSpaceOnUse" x1="1673.1" x2="1863.2" y1="0" y2="0"><stop offset="0" stop-color="#00ff11"/><stop offset="0.427" stop-color="#00ff00"/><stop offset="1" stop-color="#00ff00"/></linearGradient><linearGradient id="c22" gradientUnits="userSpaceOnUse" x1="1672.3" x2="1867.2" y1="0" y2="0"><stop offset="0" stop-color="#00ff12"/><stop offset="0.439" stop-color="#00ff00"/><stop offset="1" stop-color="#00ff00"/></linearGradient><linearGradient id="c23" gradientUnits="userSpaceOnUse" x1="1671.7" x2="1871.2" y1="0" y2="0"><stop offset="0" stop-color="#00ff13"/><stop offset="0.46" stop-color="#00ff00"/><stop offset="1" stop-color="#00ff00"/></linearGradient><linearGradient id="c24" gradientUnits="userSpaceOnUse" x1="1671.1" x2="1875.1" y1="0" y2="0"><stop offset="0" stop-color="#00ff14"/><stop offset="0.466" stop-color="#00ff00"/><stop offset="1" stop-color="#00ff00"/></linearGradient><linearGradient id="c25" gradientUnits="userSpaceOnUse" x1="1670.4" x2="1879.0" y1="0" y2="0"><stop offset="0" stop-color="#00ff16"/><stop offset="0.476" stop-color="#00ff00"/><stop offset="1" stop-color="#00ff00"/></linearGradient><linearGradient id="c26" gradientUnits="userSpaceOnUse" x1="1669.8" x2="1882.8" y1="0" y2="0"><stop offset="0" stop-color="#00ff17"/><stop offset="0.495" stop-color="#00ff00"/><stop offset="1" stop-color="#00ff00"/></linearGradient><linearGradient id="c27" gradientUnits="userSpaceOnUse" x1="1669.4" x2="1886.6" y1="0" y2="0"><stop offset="0" stop-color="#00ff18"/><stop offset="0.505" stop-color="#00ff00"/><stop offset="1" stop-color="#00ff00"/></linearGradient><linearGradient id="c28" gradientUnits="userSpaceOnUse" x1="1668.9" x2="1890.3" y1="0" y2="0"><stop offset="0" stop-color="#00ff19"/><stop offset="0.514" stop-color="#00ff00"/><stop offset="1" stop-color="#00ff00"/></linearGradient><linearGradient id="c29" gradientUnits="userSpaceOnUse" x1="1668.4" x2="1894.1" y1="0" y2="0"><stop offset="0" stop-color="#00ff1a"/><stop offset="0.522" stop-color="#00ff00"/><stop offset="1" stop-color="#00ff00"/></linearGradient><linearGradient id="c30" gradientUnits="userSpaceOnUse" x1="1667.9" x2="1897.8" y1="0" y2="0"><stop offset="0" stop-color="#00ff1b"/><stop offset="0.53" stop-color="#00ff00"/><stop offset="1" stop-color="#00ff00"/></linearGradient><linearGradient id="c31" gradientUnits="userSpaceOnUse" x1="1667.6" x2="1901.4" y1="0" y2="0"><stop offset="0" stop-color="#00ff1c"/><stop offset="0.547" stop-color="#00ff00"/><stop offset="1" stop-color="#00ff00"/></linearGradient><linearGradient id="c32" gradientUnits="userSpaceOnUse" x1="1667.2" x2="1905.0" y1="0" y2="0"><stop offset="0" stop-color="#00ff1d"/><stop offset="0.555" stop-color="#00ff00"/><stop offset="1" stop-color="#00ff00"/></linearGradient><linearGradient id="c33" gradientUnits="userSpaceOnUse" x1="1666.8" x2="1908.6" y1="0" y2="0"><stop offset="0" stop-color="#00ff1e"/><stop offset="0.562" stop-color="#00ff00"/><stop offset="1" stop-color="#00ff00"/></linearGradient><linearGradient id="c34" gradientUnits="userSpaceOnUse" x1="1666.5" x2="1912.2" y1="0" y2="0"><stop offset="0" stop-color="#00ff20"/><stop offset="0.569" stop-color="#00ff00"/><stop offset="1" stop-color="#00ff00"/></linearGradient><linearGradient id="c35" gradientUnits="userSpaceOnUse" x1="1666.2" x2="1915.7" y1="0" y2="0"><stop offset="0" stop-color="#00ff21"/><stop offset="0.584" stop-color="#00ff00"/><stop offset="1" stop-color="#00ff00"/></linearGradient><linearGradient id="c36" gradientUnits="userSpaceOnUse" x1="1665.9" x2="1919.3" y1="0" y2="0"><stop offset="0" stop-color="#00ff22"/><stop offset="0.591" stop-color="#00ff00"/><stop offset="1" stop-color="#00ff00"/></linearGradient><linearGradient id="c37" gradientUnits="userSpaceOnUse" x1="1665.6" x2="1922.8" y1="0" y2="0"><stop offset="0" stop-color="#00ff23"/><stop offset="0.597" stop-color="#00ff00"/><stop offset="1" stop-color="#00ff00"/></linearGradient><linearGradient id="c38" gradientUnits="userSpaceOnUse" x1="1665.3" x2="1926.3" y1="0" y2="0"><stop offset="0" stop-color="#00ff24"/><stop offset="0.603" stop-color="#00ff00"/><stop offset="1" stop-color="#00ff00"/></linearGradient><linearGradient id="c39" gradientUnits="userSpaceOnUse" x1="1665.1" x2="1929.8" y1="0" y2="0"><stop offset="0" stop-color="#00ff25"/><stop offset="0.609" stop-color="#00ff00"/><stop offset="1" stop-color="#00ff00"/></linearGradient><linearGradient id="c40" gradientUnits="userSpaceOnUse" x1="1664.9" x2="1933.2" y1="0" y2="0"><stop offset="0" stop-color="#00ff27"/><stop offset="0.622" stop-color="#00ff00"/><stop offset="1" stop-color="#00ff00"/></linearGradient><linearGradient id="c41" gradientUnits="userSpaceOnUse" x1="1664.7" x2="1936.7" y1="0" y2="0"><stop offset="0" stop-color="#00ff28"/><stop offset="0.625" stop-color="#00ff00"/><stop offset="1" stop-color="#00ff00"/></linearGradient><linearGradient id="c42" gradientUnits="userSpaceOnUse" x1="1664.5" x2="1940.1" y1="0" y2="0"><stop offset="0" stop-color="#00ff29"/><stop offset="0.63" stop-color="#00ff00"/><stop offset="1" stop-color="#03ff00"/></linearGradient><linearGradient id="c43" gradientUnits="userSpaceOnUse" x1="1664.4" x2="1943.5" y1="0" y2="0"><stop offset="0" stop-color="#00ff2a"/><stop offset="0.643" stop-color="#00ff00"/><stop offset="0.971" stop-color="#00ff00"/><stop offset="1" stop-color="#08ff00"/></linearGradient><linearGradient id="c44" gradientUnits="userSpaceOnUse" x1="1664.2" x2="1946.9" y1="0" y2="0"><stop offset="0" stop-color="#00ff2b"/><stop offset="0.648" stop-color="#00ff00"/><stop offset="0.958" stop-color="#00ff00"/><stop offset="1" stop-color="#0eff00"/></linearGradient><linearGradient id="c45" gradientUnits="userSpaceOnUse" x1="1664.1" x2="1950.3" y1="0" y2="0"><stop offset="0" stop-color="#00ff2d"/><stop offset="0.653" stop-color="#00ff00"/><stop offset="0.944" stop-color="#00ff00"/><stop offset="1" stop-color="#13ff00"/></linearGradient><linearGradient id="c46" gradientUnits="userSpaceOnUse" x1="1664.0" x2="1953.7" y1="0" y2="0"><stop offset="0" stop-color="#00ff2e"/><stop offset="0.662" stop-color="#00ff00"/><stop offset="0.931" stop-color="#00ff00"/><stop offset="1" stop-color="#19ff00"/></linearGradient><linearGradient id="c47" gradientUnits="userSpaceOnUse" x1="1663.9" x2="1957.0" y1="0" y2="0"><stop offset="0" stop-color="#00ff2f"/><stop offset="0.667" stop-color="#00ff00"/><stop offset="0.912" stop-color="#00ff00"/><stop offset="1" stop-color="#1eff00"/></linearGradient><linearGradient id="c48" gradientUnits="userSpaceOnUse" x1="1663.8" x2="1960.4" y1="0" y2="0"><stop offset="0" stop-color="#00ff30"/><stop offset="0.671" stop-color="#00ff00"/><stop offset="0.899" stop-color="#00ff00"/><stop offset="1" stop-color="#24ff00"/></linearGradient><linearGradient id="c49" gradientUnits="userSpaceOnUse" x1="1663.8" x2="1963.8" y1="0" y2="0"><stop offset="0" stop-color="#00ff32"/><stop offset="0.675" stop-color="#00ff00"/><stop offset="0.887" stop-color="#00ff00"/><stop offset="1" stop-color="#2aff00"/></linearGradient><linearGradient id="c50" gradientUnits="userSpaceOnUse" x1="1663.7" x2="1967.1" y1="0" y2="0"><stop offset="0" stop-color="#00ff33"/><stop offset="0.684" stop-color="#00ff00"/><stop offset="0.875" stop-color="#00ff00"/><stop offset="1" stop-color="#30ff00"/></linearGradient><linearGradient id="c51" gradientUnits="userSpaceOnUse" x1="1663.7" x2="1970.5" y1="0" y2="0"><stop offset="0" stop-color="#00ff34"/><stop offset="0.688" stop-color="#00ff00"/><stop offset="0.864" stop-color="#00ff00"/><stop offset="1" stop-color="#36ff00"/></linearGradient><linearGradient id="c52" gradientUnits="userSpaceOnUse" x1="1663.6" x2="1973.8" y1="0" y2="0"><stop offset="0" stop-color="#00ff35"/><stop offset="0.692" stop-color="#00ff00"/><stop offset="0.853" stop-color="#00ff00"/><stop offset="1" stop-color="#3cff00"/></linearGradient><linearGradient id="c53" gradientUnits="userSpaceOnUse" x1="1663.7" x2="1977.1" y1="0" y2="0"><stop offset="0" stop-color="#00ff37"/><stop offset="0.701" stop-color="#00ff00"/><stop offset="0.841" stop-color="#00ff00"/><stop offset="1" stop-color="#43ff00"/></linearGradient><linearGradient id="c54" gradientUnits="userSpaceOnUse" x1="1663.7" x2="1980.4" y1="0" y2="0"><stop offset="0" stop-color="#00ff38"/><stop offset="0.704" stop-color="#00ff00"/><stop offset="0.83" stop-color="#00ff00"/><stop offset="1" stop-color="#49ff00"/></linearGradient><linearGradient id="c55" gradientUnits="userSpaceOnUse" x1="1663.7" x2="1983.7" y1="0" y2="0"><stop offset="0" stop-color="#00ff39"/><stop offset="0.713" stop-color="#00ff00"/><stop offset="0.819" stop-color="#00ff00"/><stop offset="1" stop-color="#50ff00"/></linearGradient><linearGradient id="c56" gradientUnits="userSpaceOnUse" x1="1663.8" x2="1987.0" y1="0" y2="0"><stop offset="0" stop-color="#00ff3b"/><stop offset="0.716" stop-color="#00ff00"/><stop offset="0.809" stop-color="#00ff00"/><stop offset="1" stop-color="#57ff00"/></linearGradient><linearGradient id="c57" gradientUnits="userSpaceOnUse" x1="1663.8" x2="1990.3" y1="0" y2="0"><stop offset="0" stop-color="#00ff3c"/><stop offset="0.72" stop-color="#00ff00"/><stop offset="0.793" stop-color="#00ff00"/><stop offset="1" stop-color="#5eff00"/></linearGradient><linearGradient id="c58" gradientUnits="userSpaceOnUse" x1="1663.9" x2="1993.6" y1="0" y2="0"><stop offset="0" stop-color="#00ff3d"/><stop offset="0.782" stop-color="#00ff00"/><stop offset="1" stop-color="#65ff00"/></linearGradient><linearGradient id="c59" gradientUnits="userSpaceOnUse" x1="1664.0" x2="1996.9" y1="0" y2="0"><stop offset="0" stop-color="#00ff3f"/><stop offset="0.772" stop-color="#00ff00"/><stop offset="1" stop-color="#6dff00"/></linearGradient><linearGradient id="c60" gradientUnits="userSpaceOnUse" x1="1664.1" x2="2000.1" y1="0" y2="0"><stop offset="0" stop-color="#00ff40"/><stop offset="0.763" stop-color="#00ff00"/><stop offset="1" stop-color="#74ff00"/></linearGradient><linearGradient id="c61" gradientUnits="userSpaceOnUse" x1="1664.2" x2="2003.4" y1="0" y2="0"><stop offset="0" stop-color="#00ff42"/><stop offset="0.753" stop-color="#00ff00"/><stop offset="1" stop-color="#7cff00"/></linearGradient><linearGradient id="c62" gradientUnits="userSpaceOnUse" x1="1664.3" x2="2006.7" y1="0" y2="0"><stop offset="0" stop-color="#00ff43"/><stop offset="0.401" stop-color="#00ff24"/><stop offset="0.744" stop-color="#00ff00"/><stop offset="1" stop-color="#84ff00"/></linearGradient><linearGradient id="c63" gradientUnits="userSpaceOnUse" x1="1664.4" x2="2009.9" y1="0" y2="0"><stop offset="0" stop-color="#00ff45"/><stop offset="0.393" stop-color="#00ff26"/><stop offset="0.734" stop-color="#00ff02"/><stop offset="0.867" stop-color="#41ff00"/><stop offset="1" stop-color="#8dff00"/></linearGradient><linearGradient id="c64" gradientUnits="userSpaceOnUse" x1="1664.6" x2="2013.2" y1="0" y2="0"><stop offset="0" stop-color="#00ff46"/><stop offset="0.389" stop-color="#00ff28"/><stop offset="0.726" stop-color="#00ff04"/><stop offset="0.869" stop-color="#48ff00"/><stop offset="1" stop-color="#95ff00"/></linearGradient><linearGradient id="c65" gradientUnits="userSpaceOnUse" x1="1664.7" x2="2016.4" y1="0" y2="0"><stop offset="0" stop-color="#00ff47"/><stop offset="0.386" stop-color="#00ff29"/><stop offset="0.716" stop-color="#00ff06"/><stop offset="0.864" stop-color="#4cff00"/><stop offset="1" stop-color="#9eff00"/></linearGradient><linearGradient id="c66" gradientUnits="userSpaceOnUse" x1="1664.9" x2="2019.7" y1="0" y2="0"><stop offset="0" stop-color="#00ff49"/><stop offset="0.382" stop-color="#00ff2b"/><stop offset="0.708" stop-color="#00ff07"/><stop offset="0.86" stop-color="#50ff00"/><stop offset="1" stop-color="#a7ff00"/></linearGradient><linearGradient id="c67" gradientUnits="userSpaceOnUse" x1="1665.0" x2="2023.0" y1="0" y2="0"><stop offset="0" stop-color="#00ff4a"/><stop offset="0.374" stop-color="#00ff2d"/><stop offset="0.698" stop-color="#00ff09"/><stop offset="0.855" stop-color="#54ff00"/><stop offset="1" stop-color="#b1ff00"/></linearGradient><linearGradient id="c68" gradientUnits="userSpaceOnUse" x1="1665.2" x2="2026.2" y1="0" y2="0"><stop offset="0" stop-color="#00ff4c"/><stop offset="0.37" stop-color="#00ff2e"/><stop offset="0.691" stop-color="#01ff0b"/><stop offset="0.773" stop-color="#2cff00"/><stop offset="0.851" stop-color="#59ff00"/><stop offset="1" stop-color="#bbff00"/></linearGradient><linearGradient id="c69" gradientUnits="userSpaceOnUse" x1="1665.4" x2="2029.5" y1="0" y2="0"><stop offset="0" stop-color="#00ff4e"/><stop offset="0.678" stop-color="#00ff0e"/><stop offset="0.776" stop-color="#33ff00"/><stop offset="0.842" stop-color="#5aff00"/><stop offset="1" stop-color="#c5ff00"/></linearGradient><linearGradient id="c70" gradientUnits="userSpaceOnUse" x1="1665.6" x2="2032.7" y1="0" y2="0"><stop offset="0" stop-color="#00ff4f"/><stop offset="0.364" stop-color="#00ff31"/><stop offset="0.674" stop-color="#01ff0f"/><stop offset="0.783" stop-color="#3dff00"/><stop offset="0.842" stop-color="#61ff00"/><stop offset="1" stop-color="#cfff00"/></linearGradient><linearGradient id="c71" gradientUnits="userSpaceOnUse" x1="1665.8" x2="2036.0" y1="0" y2="0"><stop offset="0" stop-color="#00ff51"/><stop offset="0.661" stop-color="#00ff11"/><stop offset="0.833" stop-color="#63ff00"/><stop offset="1" stop-color="#daff00"/></linearGradient><linearGradient id="c72" gradientUnits="userSpaceOnUse" x1="1666.0" x2="2039.2" y1="0" y2="0"><stop offset="0" stop-color="#00ff52"/><stop offset="0.652" stop-color="#00ff13"/><stop offset="0.829" stop-color="#67ff00"/><stop offset="1" stop-color="#e5ff00"/></linearGradient><linearGradient id="c73" gradientUnits="userSpaceOnUse" x1="1666.2" x2="2042.5" y1="0" y2="0"><stop offset="0" stop-color="#00ff54"/><stop offset="0.646" stop-color="#00ff15"/><stop offset="0.831" stop-color="#6fff00"/><stop offset="1" stop-color="#f0ff00"/></linearGradient><linearGradient id="c74" gradientUnits="userSpaceOnUse" x1="1666.5" x2="2045.7" y1="0" y2="0"><stop offset="0" stop-color="#00ff56"/><stop offset="0.637" stop-color="#00ff18"/><stop offset="0.826" stop-color="#74ff00"/><stop offset="1" stop-color="#fcff00"/></linearGradient><linearGradient id="c75" gradientUnits="userSpaceOnUse" x1="1666.7" x2="2049.0" y1="0" y2="0"><stop offset="0" stop-color="#00ff57"/><stop offset="0.63" stop-color="#00ff19"/><stop offset="0.802" stop-color="#6bff00"/><stop offset="0.99" stop-color="#ffff00"/><stop offset="1" stop-color="#fff600"/></linearGradient><linearGradient id="c76" gradientUnits="userSpaceOnUse" x1="1666.9" x2="2052.2" y1="0" y2="0"><stop offset="0" stop-color="#00ff59"/><stop offset="0.622" stop-color="#00ff1c"/><stop offset="0.808" stop-color="#77ff00"/><stop offset="0.974" stop-color="#fdff00"/><stop offset="1" stop-color="#ffeb00"/></linearGradient><linearGradient id="c77" gradientUnits="userSpaceOnUse" x1="1667.2" x2="2055.4" y1="0" y2="0"><stop offset="0" stop-color="#00ff5b"/><stop offset="0.615" stop-color="#00ff1e"/><stop offset="0.795" stop-color="#74ff02"/><stop offset="0.959" stop-color="#fbff00"/><stop offset="1" stop-color="#ffe000"/></linearGradient><linearGradient id="c78" gradientUnits="userSpaceOnUse" x1="1667.4" x2="2058.6" y1="0" y2="0"><stop offset="0" stop-color="#00ff5c"/><stop offset="0.607" stop-color="#00ff20"/><stop offset="0.786" stop-color="#75ff04"/><stop offset="0.949" stop-color="#feff00"/><stop offset="1" stop-color="#ffd600"/></linearGradient><linearGradient id="c79" gradientUnits="userSpaceOnUse" x1="1667.7" x2="2061.9" y1="0" y2="0"><stop offset="0" stop-color="#00ff5e"/><stop offset="0.601" stop-color="#00ff22"/><stop offset="0.778" stop-color="#77ff07"/><stop offset="0.934" stop-color="#fcff00"/><stop offset="1" stop-color="#ffcc00"/></linearGradient><linearGradient id="c80" gradientUnits="userSpaceOnUse" x1="1668.0" x2="2065.1" y1="0" y2="0"><stop offset="0" stop-color="#00ff60"/><stop offset="0.593" stop-color="#00ff24"/><stop offset="0.769" stop-color="#78ff09"/><stop offset="0.819" stop-color="#a0ff00"/><stop offset="0.925" stop-color="#ffff00"/><stop offset="1" stop-color="#ffc300"/></linearGradient><linearGradient id="c81" gradientUnits="userSpaceOnUse" x1="1668.3" x2="2068.3" y1="0" y2="0"><stop offset="0" stop-color="#00ff62"/><stop offset="0.587" stop-color="#01ff27"/><stop offset="0.756" stop-color="#76ff0c"/><stop offset="0.821" stop-color="#abff00"/><stop offset="0.91" stop-color="#fdff00"/><stop offset="1" stop-color="#ffbb00"/></linearGradient><linearGradient id="c82" gradientUnits="userSpaceOnUse" x1="1668.6" x2="2071.5" y1="0" y2="0"><stop offset="0" stop-color="#00ff64"/><stop offset="0.579" stop-color="#00ff29"/><stop offset="0.748" stop-color="#77ff0e"/><stop offset="0.827" stop-color="#b9ff00"/><stop offset="0.901" stop-color="#fffe00"/><stop offset="0.946" stop-color="#ffd700"/><stop offset="1" stop-color="#ffb200"/></linearGradient><linearGradient id="c83" gradientUnits="userSpaceOnUse" x1="1668.9" x2="2074.8" y1="0" y2="0"><stop offset="0" stop-color="#00ff65"/><stop offset="0.571" stop-color="#00ff2b"/><stop offset="0.739" stop-color="#78ff11"/><stop offset="0.828" stop-color="#c4ff00"/><stop offset="0.887" stop-color="#fdff00"/><stop offset="0.941" stop-color="#ffd100"/><stop offset="1" stop-color="#ffab00"/></linearGradient><linearGradient id="c84" gradientUnits="userSpaceOnUse" x1="1669.2" x2="2078.0" y1="0" y2="0"><stop offset="0" stop-color="#00ff67"/><stop offset="0.566" stop-color="#01ff2e"/><stop offset="0.727" stop-color="#75ff14"/><stop offset="0.829" stop-color="#d0ff00"/><stop offset="0.878" stop-color="#fffd00"/><stop offset="0.932" stop-color="#ffce00"/><stop offset="1" stop-color="#ffa300"/></linearGradient><linearGradient id="c85" gradientUnits="userSpaceOnUse" x1="1669.5" x2="2081.2" y1="0" y2="0"><stop offset="0" stop-color="#00ff69"/><stop offset="0.558" stop-color="#01ff30"/><stop offset="0.718" stop-color="#76ff17"/><stop offset="0.864" stop-color="#feff00"/><stop offset="0.927" stop-color="#ffc800"/><stop offset="1" stop-color="#ff9c00"/></linearGradient><linearGradient id="c86" gradientUnits="userSpaceOnUse" x1="1669.8" x2="2084.4" y1="0" y2="0"><stop offset="0" stop-color="#00ff6b"/><stop offset="0.548" stop-color="#00ff33"/><stop offset="0.702" stop-color="#70ff1b"/><stop offset="0.851" stop-color="#fcff00"/><stop offset="0.923" stop-color="#ffc200"/><stop offset="1" stop-color="#ff9500"/></linearGradient><linearGradient id="c87" gradientUnits="userSpaceOnUse" x1="1670.2" x2="2087.6" y1="0" y2="0"><stop offset="0" stop-color="#00ff6d"/><stop offset="0.545" stop-color="#01ff35"/><stop offset="0.703" stop-color="#79ff1c"/><stop offset="0.842" stop-color="#ffff00"/><stop offset="0.914" stop-color="#ffc000"/><stop offset="1" stop-color="#ff8f00"/></linearGradient><linearGradient id="c88" gradientUnits="userSpaceOnUse" x1="1670.5" x2="2090.8" y1="0" y2="0"><stop offset="0" stop-color="#00ff6f"/><stop offset="0.536" stop-color="#00ff38"/><stop offset="0.687" stop-color="#73ff20"/><stop offset="0.829" stop-color="#fdff03"/><stop offset="0.905" stop-color="#ffbe00"/><stop offset="1" stop-color="#ff8900"/></linearGradient><linearGradient id="c89" gradientUnits="userSpaceOnUse" x1="1670.8" x2="2094.1" y1="0" y2="0"><stop offset="0" stop-color="#00ff71"/><stop offset="0.528" stop-color="#00ff3b"/><stop offset="0.675" stop-color="#70ff24"/><stop offset="0.821" stop-color="#fffe06"/><stop offset="0.901" stop-color="#ffb800"/><stop offset="1" stop-color="#ff8300"/></linearGradient><linearGradient id="c90" gradientUnits="userSpaceOnUse" x1="1671.2" x2="2097.3" y1="0" y2="0"><stop offset="0" stop-color="#00ff73"/><stop offset="0.523" stop-color="#00ff3e"/><stop offset="0.673" stop-color="#76ff25"/><stop offset="0.808" stop-color="#feff0a"/><stop offset="0.893" stop-color="#ffb500"/><stop offset="1" stop-color="#ff7d00"/></linearGradient><linearGradient id="c91" gradientUnits="userSpaceOnUse" x1="1671.6" x2="2100.5" y1="0" y2="0"><stop offset="0" stop-color="#00ff75"/><stop offset="0.516" stop-color="#00ff40"/><stop offset="0.66" stop-color="#73ff29"/><stop offset="0.8" stop-color="#fffd0d"/><stop offset="0.842" stop-color="#ffd302"/><stop offset="0.888" stop-color="#ffb000"/><stop offset="1" stop-color="#ff7700"/></linearGradient><linearGradient id="c92" gradientUnits="userSpaceOnUse" x1="1672.0" x2="2103.7" y1="0" y2="0"><stop offset="0" stop-color="#00ff77"/><stop offset="0.509" stop-color="#00ff43"/><stop offset="0.653" stop-color="#73ff2c"/><stop offset="0.787" stop-color="#feff11"/><stop offset="0.833" stop-color="#ffd105"/><stop offset="0.88" stop-color="#ffae00"/><stop offset="1" stop-color="#ff7200"/></linearGradient><linearGradient id="c93" gradientUnits="userSpaceOnUse" x1="1672.3" x2="2106.9" y1="0" y2="0"><stop offset="0" stop-color="#00ff7a"/><stop offset="0.505" stop-color="#00ff46"/><stop offset="0.647" stop-color="#76ff2f"/><stop offset="0.775" stop-color="#fdff15"/><stop offset="0.826" stop-color="#ffce07"/><stop offset="0.872" stop-color="#ffab00"/><stop offset="1" stop-color="#ff6d00"/></linearGradient><linearGradient id="c94" gradientUnits="userSpaceOnUse" x1="1672.7" x2="2110.1" y1="0" y2="0"><stop offset="0" stop-color="#00ff7c"/><stop offset="0.498" stop-color="#00ff49"/><stop offset="0.639" stop-color="#76ff32"/><stop offset="0.767" stop-color="#ffff18"/><stop offset="0.813" stop-color="#ffcf0a"/><stop offset="0.868" stop-color="#ffa600"/><stop offset="1" stop-color="#ff6800"/></linearGradient><linearGradient id="c95" gradientUnits="userSpaceOnUse" x1="1673.1" x2="2113.3" y1="0" y2="0"><stop offset="0" stop-color="#00ff7e"/><stop offset="0.493" stop-color="#00ff4c"/><stop offset="0.633" stop-color="#79ff35"/><stop offset="0.756" stop-color="#feff1c"/><stop offset="0.805" stop-color="#ffcc0d"/><stop offset="0.86" stop-color="#ffa401"/><stop offset="0.923" stop-color="#ff8200"/><stop offset="1" stop-color="#ff6300"/></linearGradient><linearGradient id="c96" gradientUnits="userSpaceOnUse" x1="1673.5" x2="2116.6" y1="0" y2="0"><stop offset="0" stop-color="#00ff80"/><stop offset="0.486" stop-color="#00ff4f"/><stop offset="0.622" stop-color="#75ff39"/><stop offset="0.748" stop-color="#fffd1f"/><stop offset="0.797" stop-color="#ffca0f"/><stop offset="0.851" stop-color="#ffa203"/><stop offset="0.919" stop-color="#ff7e00"/><stop offset="1" stop-color="#ff5f00"/></linearGradient><linearGradient id="c97" gradientUnits="userSpaceOnUse" x1="1673.9" x2="2119.8" y1="0" y2="0"><stop offset="0" stop-color="#00ff83"/><stop offset="0.48" stop-color="#00ff52"/><stop offset="0.614" stop-color="#76ff3c"/><stop offset="0.735" stop-color="#feff24"/><stop offset="0.789" stop-color="#ffc812"/><stop offset="0.848" stop-color="#ff9d04"/><stop offset="0.919" stop-color="#ff7800"/><stop offset="1" stop-color="#ff5b00"/></linearGradient><linearGradient id="c98" gradientUnits="userSpaceOnUse" x1="1674.3" x2="2123.0" y1="0" y2="0"><stop offset="0" stop-color="#00ff85"/><stop offset="0.476" stop-color="#00ff55"/><stop offset="0.609" stop-color="#78ff3f"/><stop offset="0.724" stop-color="#fcff28"/><stop offset="0.782" stop-color="#ffc414"/><stop offset="0.84" stop-color="#ff9a06"/><stop offset="0.911" stop-color="#ff7600"/><stop offset="1" stop-color="#ff5600"/></linearGradient><linearGradient id="c99" gradientUnits="userSpaceOnUse" x1="1674.7" x2="2126.2" y1="0" y2="0"><stop offset="0" stop-color="#00ff87"/><stop offset="0.469" stop-color="#00ff58"/><stop offset="0.602" stop-color="#79ff43"/><stop offset="0.717" stop-color="#ffff2b"/><stop offset="0.77" stop-color="#ffc618"/><stop offset="0.832" stop-color="#ff9808"/><stop offset="0.907" stop-color="#ff7200"/><stop offset="1" stop-color="#ff5200"/></linearGradient><linearGradient id="c100" gradientUnits="userSpaceOnUse" x1="1675.2" x2="2129.4" y1="0" y2="0"><stop offset="0" stop-color="#00ff8a"/><stop offset="0.465" stop-color="#01ff5b"/><stop offset="0.592" stop-color="#77ff47"/><stop offset="0.706" stop-color="#feff30"/><stop offset="0.763" stop-color="#ffc31a"/><stop offset="0.825" stop-color="#ff960a"/><stop offset="0.904" stop-color="#ff6f00"/><stop offset="1" stop-color="#ff4e00"/></linearGradient><linearGradient id="c101" gradientUnits="userSpaceOnUse" x1="1675.6" x2="2132.7" y1="0" y2="0"><stop offset="0" stop-color="#00ff8c"/><stop offset="0.459" stop-color="#01ff5e"/><stop offset="0.585" stop-color="#78ff4a"/><stop offset="0.694" stop-color="#faff34"/><stop offset="0.755" stop-color="#ffc01c"/><stop offset="0.821" stop-color="#ff910b"/><stop offset="0.878" stop-color="#ff7400"/><stop offset="1" stop-color="#ff4b00"/></linearGradient><linearGradient id="c102" gradientUnits="userSpaceOnUse" x1="1676.0" x2="2135.9" y1="0" y2="0"><stop offset="0" stop-color="#00ff8f"/><stop offset="0.452" stop-color="#00ff62"/><stop offset="0.578" stop-color="#79ff4e"/><stop offset="0.687" stop-color="#fdff38"/><stop offset="0.748" stop-color="#ffbe1f"/><stop offset="0.813" stop-color="#ff8f0d"/><stop offset="0.883" stop-color="#ff6d00"/><stop offset="1" stop-color="#ff4700"/></linearGradient><linearGradient id="c103" gradientUnits="userSpaceOnUse" x1="1676.5" x2="2139.1" y1="0" y2="0"><stop offset="0" stop-color="#00ff91"/><stop offset="0.444" stop-color="#00ff65"/><stop offset="0.565" stop-color="#72ff53"/><stop offset="0.677" stop-color="#fcff3d"/><stop offset="0.737" stop-color="#ffbe23"/><stop offset="0.806" stop-color="#ff8d0f"/><stop offset="0.884" stop-color="#ff6700"/><stop offset="1" stop-color="#ff4300"/></linearGradient><linearGradient id="c104" gradientUnits="userSpaceOnUse" x1="1676.9" x2="2142.3" y1="0" y2="0"><stop offset="0" stop-color="#00ff94"/><stop offset="0.442" stop-color="#01ff68"/><stop offset="0.562" stop-color="#78ff56"/><stop offset="0.67" stop-color="#ffff41"/><stop offset="0.725" stop-color="#ffc027"/><stop offset="0.798" stop-color="#ff8b11"/><stop offset="0.888" stop-color="#ff6100"/><stop offset="1" stop-color="#ff4000"/></linearGradient><linearGradient id="c105" gradientUnits="userSpaceOnUse" x1="1677.4" x2="2145.6" y1="0" y2="0"><stop offset="0" stop-color="#00ff96"/><stop offset="0.434" stop-color="#00ff6c"/><stop offset="0.553" stop-color="#76ff5a"/><stop offset="0.66" stop-color="#fdff45"/><stop offset="0.719" stop-color="#ffbc29"/><stop offset="0.791" stop-color="#ff8813"/><stop offset="0.889" stop-color="#ff5c00"/><stop offset="1" stop-color="#ff3c00"/></linearGradient><linearGradient id="c106" gradientUnits="userSpaceOnUse" x1="1677.8" x2="2148.8" y1="0" y2="0"><stop offset="0" stop-color="#00ff99"/><stop offset="0.428" stop-color="#00ff70"/><stop offset="0.542" stop-color="#72ff5f"/><stop offset="0.648" stop-color="#faff4b"/><stop offset="0.716" stop-color="#ffb62a"/><stop offset="0.788" stop-color="#ff8414"/><stop offset="0.89" stop-color="#ff5700"/><stop offset="1" stop-color="#ff3900"/></linearGradient><linearGradient id="c107" gradientUnits="userSpaceOnUse" x1="1678.3" x2="2152.0" y1="0" y2="0"><stop offset="0" stop-color="#00ff9c"/><stop offset="0.426" stop-color="#02ff73"/><stop offset="0.54" stop-color="#78ff62"/><stop offset="0.641" stop-color="#fdff4f"/><stop offset="0.705" stop-color="#ffb82e"/><stop offset="0.781" stop-color="#ff8216"/><stop offset="0.895" stop-color="#ff5200"/><stop offset="1" stop-color="#ff3600"/></linearGradient><linearGradient id="c108" gradientUnits="userSpaceOnUse" x1="1678.8" x2="2155.3" y1="0" y2="0"><stop offset="0" stop-color="#00ff9e"/><stop offset="0.418" stop-color="#00ff77"/><stop offset="0.531" stop-color="#76ff67"/><stop offset="0.632" stop-color="#fbff54"/><stop offset="0.699" stop-color="#ffb430"/><stop offset="0.774" stop-color="#ff7f17"/><stop offset="0.895" stop-color="#ff4d00"/><stop offset="1" stop-color="#ff3300"/></linearGradient><linearGradient id="c109" gradientUnits="userSpaceOnUse" x1="1679.2" x2="2158.5" y1="0" y2="0"><stop offset="0" stop-color="#00ffa1"/><stop offset="0.412" stop-color="#00ff7b"/><stop offset="0.521" stop-color="#72ff6c"/><stop offset="0.625" stop-color="#feff58"/><stop offset="0.688" stop-color="#ffb635"/><stop offset="0.767" stop-color="#ff7d1a"/><stop offset="0.896" stop-color="#ff4900"/><stop offset="1" stop-color="#ff3000"/></linearGradient><linearGradient id="c110" gradientUnits="userSpaceOnUse" x1="1679.7" x2="2161.7" y1="0" y2="0"><stop offset="0" stop-color="#00ffa4"/><stop offset="0.407" stop-color="#00ff7f"/><stop offset="0.515" stop-color="#72ff70"/><stop offset="0.614" stop-color="#fbff5e"/><stop offset="0.68" stop-color="#ffb337"/><stop offset="0.759" stop-color="#ff7b1c"/><stop offset="0.9" stop-color="#ff4400"/><stop offset="1" stop-color="#ff2d00"/></linearGradient><linearGradient id="c111" gradientUnits="userSpaceOnUse" x1="1680.2" x2="2164.9" y1="0" y2="0"><stop offset="0" stop-color="#00ffa7"/><stop offset="0.403" stop-color="#00ff83"/><stop offset="0.51" stop-color="#76ff74"/><stop offset="0.605" stop-color="#f9ff63"/><stop offset="0.609" stop-color="#fffe62"/><stop offset="0.638" stop-color="#ffd64d"/><stop offset="0.675" stop-color="#ffb039"/><stop offset="0.753" stop-color="#ff791d"/><stop offset="0.901" stop-color="#ff4000"/><stop offset="1" stop-color="#ff2a00"/></linearGradient><linearGradient id="c112" gradientUnits="userSpaceOnUse" x1="1680.7" x2="2168.1" y1="0" y2="0"><stop offset="0" stop-color="#00ffaa"/><stop offset="0.398" stop-color="#00ff87"/><stop offset="0.504" stop-color="#76ff78"/><stop offset="0.598" stop-color="#fcff68"/><stop offset="0.664" stop-color="#ffb13e"/><stop offset="0.746" stop-color="#ff771f"/><stop offset="0.816" stop-color="#ff580f"/><stop offset="0.902" stop-color="#ff3d00"/><stop offset="1" stop-color="#ff2800"/></linearGradient><linearGradient id="c113" gradientUnits="userSpaceOnUse" x1="1681.2" x2="2171.3" y1="0" y2="0"><stop offset="0" stop-color="#00ffad"/><stop offset="0.394" stop-color="#01ff8b"/><stop offset="0.496" stop-color="#75ff7d"/><stop offset="0.589" stop-color="#fbff6d"/><stop offset="0.659" stop-color="#ffad40"/><stop offset="0.74" stop-color="#ff7521"/><stop offset="0.813" stop-color="#ff540f"/><stop offset="0.907" stop-color="#ff3800"/><stop offset="1" stop-color="#ff2500"/></linearGradient><linearGradient id="c114" gradientUnits="userSpaceOnUse" x1="1681.7" x2="2174.5" y1="0" y2="0"><stop offset="0" stop-color="#00ffb0"/><stop offset="0.389" stop-color="#00ff90"/><stop offset="0.49" stop-color="#75ff82"/><stop offset="0.583" stop-color="#feff72"/><stop offset="0.615" stop-color="#ffd259"/><stop offset="0.648" stop-color="#ffaf45"/><stop offset="0.733" stop-color="#ff7323"/><stop offset="0.81" stop-color="#ff5110"/><stop offset="0.907" stop-color="#ff3500"/><stop offset="1" stop-color="#ff2200"/></linearGradient><linearGradient id="c115" gradientUnits="userSpaceOnUse" x1="1682.2" x2="2177.7" y1="0" y2="0"><stop offset="0" stop-color="#00ffb3"/><stop offset="0.383" stop-color="#00ff94"/><stop offset="0.484" stop-color="#76ff87"/><stop offset="0.573" stop-color="#faff78"/><stop offset="0.645" stop-color="#ffa946"/><stop offset="0.73" stop-color="#ff6f24"/><stop offset="0.806" stop-color="#ff4e11"/><stop offset="0.903" stop-color="#ff3301"/><stop offset="1" stop-color="#ff2000"/></linearGradient><linearGradient id="c116" gradientUnits="userSpaceOnUse" x1="1682.7" x2="2180.9" y1="0" y2="0"><stop offset="0" stop-color="#00ffb6"/><stop offset="0.38" stop-color="#01ff98"/><stop offset="0.476" stop-color="#74ff8c"/><stop offset="0.564" stop-color="#f9ff7e"/><stop offset="0.568" stop-color="#fffe7d"/><stop offset="0.6" stop-color="#ffcf61"/><stop offset="0.636" stop-color="#ffa94a"/><stop offset="0.724" stop-color="#ff6c26"/><stop offset="0.8" stop-color="#ff4c12"/><stop offset="0.896" stop-color="#ff3102"/><stop offset="1" stop-color="#ff1d00"/></linearGradient><linearGradient id="c117" gradientUnits="userSpaceOnUse" x1="1683.2" x2="2184.1" y1="0" y2="0"><stop offset="0" stop-color="#00ffba"/><stop offset="0.375" stop-color="#01ff9d"/><stop offset="0.47" stop-color="#75ff91"/><stop offset="0.558" stop-color="#fcff84"/><stop offset="0.594" stop-color="#ffcd64"/><stop offset="0.629" stop-color="#ffa64d"/><stop offset="0.717" stop-color="#ff6a28"/><stop offset="0.793" stop-color="#ff4b14"/><stop offset="0.888" stop-color="#ff3004"/><stop offset="1" stop-color="#ff1b00"/></linearGradient><linearGradient id="c118" gradientUnits="userSpaceOnUse" x1="1683.8" x2="2187.4" y1="0" y2="0"><stop offset="0" stop-color="#00ffbd"/><stop offset="0.369" stop-color="#00ffa2"/><stop offset="0.464" stop-color="#76ff96"/><stop offset="0.552" stop-color="#ffff89"/><stop offset="0.583" stop-color="#ffcf6b"/><stop offset="0.619" stop-color="#ffa852"/><stop offset="0.71" stop-color="#ff682a"/><stop offset="0.786" stop-color="#ff4916"/><stop offset="0.881" stop-color="#ff2f05"/><stop offset="1" stop-color="#ff1900"/></linearGradient><linearGradient id="c119" gradientUnits="userSpaceOnUse" x1="1684.3" x2="2190.6" y1="0" y2="0"><stop offset="0" stop-color="#00ffc0"/><stop offset="0.362" stop-color="#00ffa7"/><stop offset="0.457" stop-color="#74ff9c"/><stop offset="0.543" stop-color="#feff8f"/><stop offset="0.575" stop-color="#ffcf70"/><stop offset="0.61" stop-color="#ffa756"/><stop offset="0.701" stop-color="#ff682d"/><stop offset="0.827" stop-color="#ff390e"/><stop offset="0.921" stop-color="#ff2300"/><stop offset="1" stop-color="#ff1700"/></linearGradient><linearGradient id="c120" gradientUnits="userSpaceOnUse" x1="1684.9" x2="2193.8" y1="0" y2="0"><stop offset="0" stop-color="#00ffc4"/><stop offset="0.361" stop-color="#02ffab"/><stop offset="0.451" stop-color="#75ffa1"/><stop offset="0.533" stop-color="#faff96"/><stop offset="0.573" stop-color="#ffc770"/><stop offset="0.608" stop-color="#ffa156"/><stop offset="0.698" stop-color="#ff642d"/><stop offset="0.824" stop-color="#ff360f"/><stop offset="0.922" stop-color="#ff2100"/><stop offset="1" stop-color="#ff1400"/></linearGradient><linearGradient id="c121" gradientUnits="userSpaceOnUse" x1="1685.5" x2="2197.0" y1="0" y2="0"><stop offset="0" stop-color="#00ffc8"/><stop offset="0.355" stop-color="#01ffb0"/><stop offset="0.445" stop-color="#76ffa7"/><stop offset="0.527" stop-color="#fdff9c"/><stop offset="0.562" stop-color="#ffca77"/><stop offset="0.598" stop-color="#ffa35c"/><stop offset="0.641" stop-color="#ff8044"/><stop offset="0.691" stop-color="#ff622f"/><stop offset="0.82" stop-color="#ff340f"/><stop offset="0.922" stop-color="#ff1e00"/><stop offset="1" stop-color="#ff1200"/></linearGradient><linearGradient id="c122" gradientUnits="userSpaceOnUse" x1="1686.0" x2="2200.2" y1="0" y2="0"><stop offset="0" stop-color="#00ffcb"/><stop offset="0.349" stop-color="#00ffb6"/><stop offset="0.438" stop-color="#74ffad"/><stop offset="0.519" stop-color="#fcffa3"/><stop offset="0.554" stop-color="#ffca7c"/><stop offset="0.589" stop-color="#ffa260"/><stop offset="0.632" stop-color="#ff7f47"/><stop offset="0.682" stop-color="#ff6232"/><stop offset="0.814" stop-color="#ff3211"/><stop offset="0.926" stop-color="#ff1b00"/><stop offset="1" stop-color="#ff1000"/></linearGradient><linearGradient id="c123" gradientUnits="userSpaceOnUse" x1="1686.6" x2="2203.5" y1="0" y2="0"><stop offset="0" stop-color="#00ffcf"/><stop offset="0.344" stop-color="#00ffbb"/><stop offset="0.429" stop-color="#6fffb3"/><stop offset="0.514" stop-color="#fffea9"/><stop offset="0.544" stop-color="#ffcc84"/><stop offset="0.579" stop-color="#ffa466"/><stop offset="0.622" stop-color="#ff804c"/><stop offset="0.676" stop-color="#ff6034"/><stop offset="0.811" stop-color="#ff3011"/><stop offset="0.927" stop-color="#ff1900"/><stop offset="1" stop-color="#ff0e00"/></linearGradient><linearGradient id="c124" gradientUnits="userSpaceOnUse" x1="1687.2" x2="2206.7" y1="0" y2="0"><stop offset="0" stop-color="#00ffd3"/><stop offset="0.342" stop-color="#02ffc0"/><stop offset="0.423" stop-color="#70ffb9"/><stop offset="0.508" stop-color="#fffbad"/><stop offset="0.538" stop-color="#ffc987"/><stop offset="0.577" stop-color="#ff9d66"/><stop offset="0.619" stop-color="#ff7b4c"/><stop offset="0.673" stop-color="#ff5c35"/><stop offset="0.746" stop-color="#ff3f1f"/><stop offset="0.838" stop-color="#ff260d"/><stop offset="0.931" stop-color="#ff1600"/><stop offset="1" stop-color="#ff0c00"/></linearGradient><linearGradient id="c125" gradientUnits="userSpaceOnUse" x1="1687.8" x2="2209.9" y1="0" y2="0"><stop offset="0" stop-color="#00ffd7"/><stop offset="0.336" stop-color="#00ffc6"/><stop offset="0.416" stop-color="#6effbf"/><stop offset="0.5" stop-color="#fffcb4"/><stop offset="0.531" stop-color="#ffc98d"/><stop offset="0.569" stop-color="#ff9d6b"/><stop offset="0.611" stop-color="#ff7a50"/><stop offset="0.664" stop-color="#ff5b38"/><stop offset="0.802" stop-color="#ff2c13"/><stop offset="0.931" stop-color="#ff1300"/><stop offset="1" stop-color="#ff0a00"/></linearGradient><linearGradient id="c126" gradientUnits="userSpaceOnUse" x1="1688.3" x2="2213.1" y1="0" y2="0"><stop offset="0" stop-color="#00ffdb"/><stop offset="0.331" stop-color="#00ffcb"/><stop offset="0.407" stop-color="#69ffc6"/><stop offset="0.49" stop-color="#feffbe"/><stop offset="0.494" stop-color="#fff8b9"/><stop offset="0.525" stop-color="#ffc691"/><stop offset="0.563" stop-color="#ff9a6e"/><stop offset="0.608" stop-color="#ff7650"/><stop offset="0.662" stop-color="#ff5738"/><stop offset="0.738" stop-color="#ff3a21"/><stop offset="0.829" stop-color="#ff230e"/><stop offset="0.932" stop-color="#ff1100"/><stop offset="1" stop-color="#ff0800"/></linearGradient><linearGradient id="c127" gradientUnits="userSpaceOnUse" x1="1688.9" x2="2216.4" y1="0" y2="0"><stop offset="0" stop-color="#00ffdf"/><stop offset="0.326" stop-color="#00ffd1"/><stop offset="0.405" stop-color="#70ffcc"/><stop offset="0.485" stop-color="#fffdc4"/><stop offset="0.515" stop-color="#ffc999"/><stop offset="0.553" stop-color="#ff9c74"/><stop offset="0.598" stop-color="#ff7655"/><stop offset="0.652" stop-color="#ff573c"/><stop offset="0.727" stop-color="#ff3a24"/><stop offset="0.818" stop-color="#ff2210"/><stop offset="0.936" stop-color="#ff0e00"/><stop offset="1" stop-color="#ff0600"/></linearGradient><linearGradient id="c128" gradientUnits="userSpaceOnUse" x1="1689.5" x2="2219.6" y1="0" y2="0"><stop offset="0" stop-color="#00ffe3"/><stop offset="0.323" stop-color="#00ffd7"/><stop offset="0.402" stop-color="#74ffd2"/><stop offset="0.477" stop-color="#fffdcb"/><stop offset="0.508" stop-color="#ffc99f"/><stop offset="0.545" stop-color="#ff9b79"/><stop offset="0.59" stop-color="#ff7559"/><stop offset="0.647" stop-color="#ff553d"/><stop offset="0.722" stop-color="#ff3825"/><stop offset="0.816" stop-color="#ff2011"/><stop offset="0.936" stop-color="#ff0c00"/><stop offset="1" stop-color="#ff0500"/></linearGradient><linearGradient id="c129" gradientUnits="userSpaceOnUse" x1="1690.1" x2="2222.8" y1="0" y2="0"><stop offset="0" stop-color="#00ffe7"/><stop offset="0.318" stop-color="#00ffdd"/><stop offset="0.393" stop-color="#6fffda"/><stop offset="0.472" stop-color="#fffad0"/><stop offset="0.502" stop-color="#ffc6a3"/><stop offset="0.539" stop-color="#ff987c"/><stop offset="0.584" stop-color="#ff735b"/><stop offset="0.64" stop-color="#ff533f"/><stop offset="0.715" stop-color="#ff3627"/><stop offset="0.809" stop-color="#ff1f12"/><stop offset="0.936" stop-color="#ff0a00"/><stop offset="1" stop-color="#ff0300"/></linearGradient><linearGradient id="c130" gradientUnits="userSpaceOnUse" x1="1690.8" x2="2226.1" y1="0" y2="0"><stop offset="0" stop-color="#00ffeb"/><stop offset="0.313" stop-color="#00ffe4"/><stop offset="0.392" stop-color="#76ffe0"/><stop offset="0.463" stop-color="#fffedc"/><stop offset="0.496" stop-color="#ffc3a7"/><stop offset="0.534" stop-color="#ff967f"/><stop offset="0.578" stop-color="#ff715e"/><stop offset="0.634" stop-color="#ff5141"/><stop offset="0.709" stop-color="#ff3528"/><stop offset="0.802" stop-color="#ff1d13"/><stop offset="0.94" stop-color="#ff0800"/><stop offset="1" stop-color="#ff0100"/></linearGradient><linearGradient id="c131" gradientUnits="userSpaceOnUse" x1="1691.4" x2="2229.3" y1="0" y2="0"><stop offset="0" stop-color="#00fff0"/><stop offset="0.309" stop-color="#00ffea"/><stop offset="0.379" stop-color="#6bffe8"/><stop offset="0.457" stop-color="#fffbe1"/><stop offset="0.491" stop-color="#ffc0ab"/><stop offset="0.528" stop-color="#ff9382"/><stop offset="0.572" stop-color="#ff6f60"/><stop offset="0.628" stop-color="#ff4f43"/><stop offset="0.706" stop-color="#ff3229"/><stop offset="0.799" stop-color="#ff1b14"/><stop offset="0.941" stop-color="#ff0600"/><stop offset="1" stop-color="#ff0000"/></linearGradient><linearGradient id="c132" gradientUnits="userSpaceOnUse" x1="1692.0" x2="2232.6" y1="0" y2="0"><stop offset="0" stop-color="#00fff4"/><stop offset="0.306" stop-color="#01fff1"/><stop offset="0.376" stop-color="#6fffef"/><stop offset="0.45" stop-color="#fffbe9"/><stop offset="0.483" stop-color="#ffbfb1"/><stop offset="0.52" stop-color="#ff9387"/><stop offset="0.568" stop-color="#ff6b62"/><stop offset="0.624" stop-color="#ff4d45"/><stop offset="0.701" stop-color="#ff302a"/><stop offset="0.793" stop-color="#ff1a15"/><stop offset="0.945" stop-color="#ff0400"/><stop offset="1" stop-color="#ff0000"/></linearGradient><linearGradient id="c133" gradientUnits="userSpaceOnUse" x1="1692.6" x2="2235.8" y1="0" y2="0"><stop offset="0" stop-color="#00fff9"/><stop offset="0.301" stop-color="#00fff7"/><stop offset="0.375" stop-color="#77fff7"/><stop offset="0.441" stop-color="#fefff6"/><stop offset="0.474" stop-color="#ffc2ba"/><stop offset="0.511" stop-color="#ff948e"/><stop offset="0.559" stop-color="#ff6b67"/><stop offset="0.618" stop-color="#ff4b47"/><stop offset="0.695" stop-color="#ff2f2c"/><stop offset="0.787" stop-color="#ff1916"/><stop offset="0.945" stop-color="#ff0200"/><stop offset="1" stop-color="#ff0000"/></linearGradient><linearGradient id="c134" gradientUnits="userSpaceOnUse" x1="1693.3" x2="2239.0" y1="0" y2="0"><stop offset="0" stop-color="#00fffe"/><stop offset="0.297" stop-color="#00fffe"/><stop offset="0.366" stop-color="#71fffe"/><stop offset="0.436" stop-color="#fffcfc"/><stop offset="0.469" stop-color="#ffbfbf"/><stop offset="0.505" stop-color="#ff9191"/><stop offset="0.553" stop-color="#ff6969"/><stop offset="0.612" stop-color="#ff4949"/><stop offset="0.689" stop-color="#ff2d2d"/><stop offset="0.784" stop-color="#ff1717"/><stop offset="0.941" stop-color="#ff0001"/><stop offset="1" stop-color="#ff0000"/></linearGradient><linearGradient id="c135" gradientUnits="userSpaceOnUse" x1="1693.9" x2="2242.2" y1="0" y2="0"><stop offset="0" stop-color="#00fbff"/><stop offset="0.291" stop-color="#00f9ff"/><stop offset="0.36" stop-color="#6cf8ff"/><stop offset="0.433" stop-color="#fff4fd"/><stop offset="0.465" stop-color="#ffb9c0"/><stop offset="0.505" stop-color="#ff898f"/><stop offset="0.553" stop-color="#ff6468"/><stop offset="0.611" stop-color="#ff4549"/><stop offset="0.691" stop-color="#ff292c"/><stop offset="0.789" stop-color="#ff1316"/><stop offset="0.927" stop-color="#ff0002"/><stop offset="1" stop-color="#ff0000"/></linearGradient><linearGradient id="c136" gradientUnits="userSpaceOnUse" x1="1694.6" x2="2245.4" y1="0" y2="0"><stop offset="0" stop-color="#00f7ff"/><stop offset="0.29" stop-color="#02f2ff"/><stop offset="0.359" stop-color="#70f0ff"/><stop offset="0.428" stop-color="#fceeff"/><stop offset="0.431" stop-color="#ffe9fa"/><stop offset="0.464" stop-color="#ffb0be"/><stop offset="0.504" stop-color="#ff838e"/><stop offset="0.551" stop-color="#ff5f69"/><stop offset="0.609" stop-color="#ff4149"/><stop offset="0.692" stop-color="#ff262c"/><stop offset="0.797" stop-color="#ff1015"/><stop offset="0.913" stop-color="#ff0004"/><stop offset="1" stop-color="#ff0000"/></linearGradient><linearGradient id="c137" gradientUnits="userSpaceOnUse" x1="1695.2" x2="2248.6" y1="0" y2="0"><stop offset="0" stop-color="#00f2ff"/><stop offset="0.285" stop-color="#01ebff"/><stop offset="0.361" stop-color="#7be8ff"/><stop offset="0.426" stop-color="#ffe5ff"/><stop offset="0.458" stop-color="#ffadc2"/><stop offset="0.498" stop-color="#ff8092"/><stop offset="0.545" stop-color="#ff5d6b"/><stop offset="0.606" stop-color="#ff3e4a"/><stop offset="0.693" stop-color="#ff222c"/><stop offset="0.801" stop-color="#ff0d14"/><stop offset="0.895" stop-color="#ff0007"/><stop offset="1" stop-color="#ff0000"/></linearGradient><linearGradient id="c138" gradientUnits="userSpaceOnUse" x1="1695.8" x2="2251.8" y1="0" y2="0"><stop offset="0" stop-color="#00edff"/><stop offset="0.281" stop-color="#00e5ff"/><stop offset="0.353" stop-color="#72e1ff"/><stop offset="0.424" stop-color="#ffdafc"/><stop offset="0.457" stop-color="#ffa5c1"/><stop offset="0.496" stop-color="#ff7b91"/><stop offset="0.543" stop-color="#ff586b"/><stop offset="0.604" stop-color="#ff3b4a"/><stop offset="0.694" stop-color="#ff1f2b"/><stop offset="0.809" stop-color="#ff0913"/><stop offset="0.881" stop-color="#ff0008"/><stop offset="1" stop-color="#ff0000"/></linearGradient><linearGradient id="c139" gradientUnits="userSpaceOnUse" x1="1696.5" x2="2255.0" y1="0" y2="0"><stop offset="0" stop-color="#00e9ff"/><stop offset="0.275" stop-color="#00dfff"/><stop offset="0.346" stop-color="#6ddaff"/><stop offset="0.421" stop-color="#ffd3fc"/><stop offset="0.454" stop-color="#ffa0c2"/><stop offset="0.493" stop-color="#ff7692"/><stop offset="0.543" stop-color="#ff536a"/><stop offset="0.604" stop-color="#ff374a"/><stop offset="0.696" stop-color="#ff1c2a"/><stop offset="0.818" stop-color="#ff0612"/><stop offset="1" stop-color="#ff0000"/></linearGradient><linearGradient id="c140" gradientUnits="userSpaceOnUse" x1="1697.2" x2="2258.2" y1="0" y2="0"><stop offset="0" stop-color="#00e4ff"/><stop offset="0.27" stop-color="#00d8ff"/><stop offset="0.338" stop-color="#65d4ff"/><stop offset="0.377" stop-color="#acd1ff"/><stop offset="0.416" stop-color="#fdcdff"/><stop offset="0.42" stop-color="#ffc8f9"/><stop offset="0.452" stop-color="#ff98c1"/><stop offset="0.491" stop-color="#ff7192"/><stop offset="0.541" stop-color="#ff4f6a"/><stop offset="0.601" stop-color="#ff344a"/><stop offset="0.698" stop-color="#ff192a"/><stop offset="0.826" stop-color="#ff0310"/><stop offset="1" stop-color="#ff0000"/></linearGradient><linearGradient id="c141" gradientUnits="userSpaceOnUse" x1="1697.9" x2="2261.5" y1="0" y2="0"><stop offset="0" stop-color="#00dfff"/><stop offset="0.27" stop-color="#02d2ff"/><stop offset="0.344" stop-color="#75cdff"/><stop offset="0.415" stop-color="#ffc5fe"/><stop offset="0.447" stop-color="#ff95c4"/><stop offset="0.489" stop-color="#ff6b91"/><stop offset="0.539" stop-color="#ff4b6a"/><stop offset="0.599" stop-color="#ff314a"/><stop offset="0.702" stop-color="#ff1529"/><stop offset="0.833" stop-color="#ff000f"/><stop offset="1" stop-color="#ff0000"/></linearGradient><linearGradient id="c142" gradientUnits="userSpaceOnUse" x1="1698.5" x2="2264.7" y1="0" y2="0"><stop offset="0" stop-color="#00dbff"/><stop offset="0.264" stop-color="#00ccff"/><stop offset="0.342" stop-color="#76c6ff"/><stop offset="0.412" stop-color="#ffbefe"/><stop offset="0.444" stop-color="#ff90c5"/><stop offset="0.486" stop-color="#ff6793"/><stop offset="0.535" stop-color="#ff486c"/><stop offset="0.595" stop-color="#ff2f4c"/><stop offset="0.69" stop-color="#ff152c"/><stop offset="0.817" stop-color="#ff0012"/><stop offset="1" stop-color="#ff0000"/></linearGradient><linearGradient id="c143" gradientUnits="userSpaceOnUse" x1="1699.2" x2="2267.9" y1="0" y2="0"><stop offset="0" stop-color="#00d7ff"/><stop offset="0.26" stop-color="#00c7ff"/><stop offset="0.333" stop-color="#6ec0ff"/><stop offset="0.411" stop-color="#ffb4fc"/><stop offset="0.442" stop-color="#ff89c4"/><stop offset="0.484" stop-color="#ff6292"/><stop offset="0.533" stop-color="#ff446c"/><stop offset="0.596" stop-color="#ff2a4b"/><stop offset="0.688" stop-color="#ff132c"/><stop offset="0.804" stop-color="#ff0014"/><stop offset="1" stop-color="#ff0000"/></linearGradient><linearGradient id="c144" gradientUnits="userSpaceOnUse" x1="1699.9" x2="2271.2" y1="0" y2="0"><stop offset="0" stop-color="#00d2ff"/><stop offset="0.255" stop-color="#00c1ff"/><stop offset="0.329" stop-color="#6cbaff"/><stop offset="0.406" stop-color="#feb0ff"/><stop offset="0.409" stop-color="#ffabf9"/><stop offset="0.441" stop-color="#ff82c3"/><stop offset="0.483" stop-color="#ff5d92"/><stop offset="0.531" stop-color="#ff406c"/><stop offset="0.594" stop-color="#ff284b"/><stop offset="0.678" stop-color="#ff122e"/><stop offset="0.787" stop-color="#ff0017"/><stop offset="1" stop-color="#ff0000"/></linearGradient><linearGradient id="c145" gradientUnits="userSpaceOnUse" x1="1700.6" x2="2274.4" y1="0" y2="0"><stop offset="0" stop-color="#00ceff"/><stop offset="0.251" stop-color="#00bcff"/><stop offset="0.328" stop-color="#70b4ff"/><stop offset="0.404" stop-color="#ffa8fd"/><stop offset="0.439" stop-color="#ff7cc1"/><stop offset="0.481" stop-color="#ff5891"/><stop offset="0.53" stop-color="#ff3d6c"/><stop offset="0.592" stop-color="#ff254b"/><stop offset="0.672" stop-color="#ff1130"/><stop offset="0.774" stop-color="#ff0019"/><stop offset="1" stop-color="#ff0000"/></linearGradient><linearGradient id="c146" gradientUnits="userSpaceOnUse" x1="1701.3" x2="2277.6" y1="0" y2="0"><stop offset="0" stop-color="#00caff"/><stop offset="0.249" stop-color="#00b6ff"/><stop offset="0.329" stop-color="#77adff"/><stop offset="0.401" stop-color="#ffa1fe"/><stop offset="0.436" stop-color="#ff77c2"/><stop offset="0.478" stop-color="#ff5592"/><stop offset="0.526" stop-color="#ff3a6d"/><stop offset="0.588" stop-color="#ff234c"/><stop offset="0.758" stop-color="#ff001c"/><stop offset="1" stop-color="#ff0000"/></linearGradient><linearGradient id="c147" gradientUnits="userSpaceOnUse" x1="1702.0" x2="2280.8" y1="0" y2="0"><stop offset="0" stop-color="#00c6ff"/><stop offset="0.245" stop-color="#00b1ff"/><stop offset="0.321" stop-color="#6fa8ff"/><stop offset="0.4" stop-color="#ff99fb"/><stop offset="0.434" stop-color="#ff71c1"/><stop offset="0.476" stop-color="#ff5092"/><stop offset="0.528" stop-color="#ff356b"/><stop offset="0.59" stop-color="#ff1f4b"/><stop offset="0.745" stop-color="#ff001f"/><stop offset="1" stop-color="#ff0000"/></linearGradient><linearGradient id="c148" gradientUnits="userSpaceOnUse" x1="1702.7" x2="2284.1" y1="0" y2="0"><stop offset="0" stop-color="#00c1ff"/><stop offset="0.241" stop-color="#00acff"/><stop offset="0.323" stop-color="#78a2ff"/><stop offset="0.395" stop-color="#ff96ff"/><stop offset="0.43" stop-color="#ff6ec4"/><stop offset="0.471" stop-color="#ff4e95"/><stop offset="0.522" stop-color="#ff336d"/><stop offset="0.584" stop-color="#ff1d4d"/><stop offset="0.729" stop-color="#ff0022"/><stop offset="0.873" stop-color="#ff000b"/><stop offset="1" stop-color="#ff0000"/></linearGradient><linearGradient id="c149" gradientUnits="userSpaceOnUse" x1="1703.5" x2="2287.3" y1="0" y2="0"><stop offset="0" stop-color="#00bdff"/><stop offset="0.236" stop-color="#00a7ff"/><stop offset="0.315" stop-color="#719dff"/><stop offset="0.394" stop-color="#ff8efd"/><stop offset="0.428" stop-color="#ff68c3"/><stop offset="0.469" stop-color="#ff4994"/><stop offset="0.521" stop-color="#ff2f6d"/><stop offset="0.586" stop-color="#ff1a4c"/><stop offset="0.716" stop-color="#ff0025"/><stop offset="0.86" stop-color="#ff000c"/><stop offset="1" stop-color="#ff0000"/></linearGradient><linearGradient id="c150" gradientUnits="userSpaceOnUse" x1="1704.2" x2="2290.5" y1="0" y2="0"><stop offset="0" stop-color="#00b9ff"/><stop offset="0.235" stop-color="#02a2ff"/><stop offset="0.313" stop-color="#7297ff"/><stop offset="0.391" stop-color="#ff88fd"/><stop offset="0.425" stop-color="#ff63c4"/><stop offset="0.469" stop-color="#ff4492"/><stop offset="0.52" stop-color="#ff2b6c"/><stop offset="0.582" stop-color="#ff184d"/><stop offset="0.701" stop-color="#ff0028"/><stop offset="0.85" stop-color="#ff000e"/><stop offset="1" stop-color="#ff0000"/></linearGradient><linearGradient id="c151" gradientUnits="userSpaceOnUse" x1="1705.0" x2="2293.5" y1="0" y2="0"><stop offset="0" stop-color="#00b5ff"/><stop offset="0.231" stop-color="#019eff"/><stop offset="0.308" stop-color="#7092ff"/><stop offset="0.39" stop-color="#ff80fa"/><stop offset="0.424" stop-color="#ff5ec2"/><stop offset="0.468" stop-color="#ff4092"/><stop offset="0.519" stop-color="#ff286c"/><stop offset="0.583" stop-color="#ff144c"/><stop offset="0.688" stop-color="#ff002b"/><stop offset="0.759" stop-color="#ff001c"/><stop offset="1" stop-color="#ff0000"/></linearGradient><linearGradient id="c152" gradientUnits="userSpaceOnUse" x1="1705.7" x2="2286.6" y1="0" y2="0"><stop offset="0" stop-color="#00b1ff"/><stop offset="0.23" stop-color="#0099ff"/><stop offset="0.316" stop-color="#798cff"/><stop offset="0.392" stop-color="#ff7dff"/><stop offset="0.426" stop-color="#ff5bc6"/><stop offset="0.471" stop-color="#ff3d95"/><stop offset="0.522" stop-color="#ff266e"/><stop offset="0.584" stop-color="#ff144f"/><stop offset="0.684" stop-color="#ff002f"/><stop offset="0.753" stop-color="#ff0020"/><stop offset="1" stop-color="#ff0000"/></linearGradient><linearGradient id="c153" gradientUnits="userSpaceOnUse" x1="1706.5" x2="2279.7" y1="0" y2="0"><stop offset="0" stop-color="#00adff"/><stop offset="0.23" stop-color="#0095ff"/><stop offset="0.314" stop-color="#7188ff"/><stop offset="0.397" stop-color="#ff76fc"/><stop offset="0.432" stop-color="#ff56c5"/><stop offset="0.474" stop-color="#ff3b97"/><stop offset="0.526" stop-color="#ff2570"/><stop offset="0.589" stop-color="#ff1251"/><stop offset="0.683" stop-color="#ff0032"/><stop offset="0.756" stop-color="#ff0021"/><stop offset="1" stop-color="#ff0001"/></linearGradient><linearGradient id="c154" gradientUnits="userSpaceOnUse" x1="1707.2" x2="2272.8" y1="0" y2="0"><stop offset="0" stop-color="#00a9ff"/><stop offset="0.23" stop-color="#0090ff"/><stop offset="0.311" stop-color="#6a84ff"/><stop offset="0.399" stop-color="#fe72ff"/><stop offset="0.403" stop-color="#ff6ffa"/><stop offset="0.438" stop-color="#ff50c4"/><stop offset="0.481" stop-color="#ff3797"/><stop offset="0.534" stop-color="#ff2171"/><stop offset="0.594" stop-color="#ff1053"/><stop offset="0.678" stop-color="#ff0036"/><stop offset="0.76" stop-color="#ff0023"/><stop offset="1" stop-color="#ff0003"/></linearGradient><linearGradient id="c155" gradientUnits="userSpaceOnUse" x1="1708.0" x2="2265.9" y1="0" y2="0"><stop offset="0" stop-color="#00a6ff"/><stop offset="0.229" stop-color="#008cff"/><stop offset="0.319" stop-color="#737eff"/><stop offset="0.405" stop-color="#ff6cfe"/><stop offset="0.441" stop-color="#ff4ec7"/><stop offset="0.484" stop-color="#ff3599"/><stop offset="0.538" stop-color="#ff2073"/><stop offset="0.599" stop-color="#ff0f54"/><stop offset="0.677" stop-color="#ff0039"/><stop offset="0.763" stop-color="#ff0025"/><stop offset="1" stop-color="#ff0005"/></linearGradient><linearGradient id="c156" gradientUnits="userSpaceOnUse" x1="1708.8" x2="2259.0" y1="0" y2="0"><stop offset="0" stop-color="#00a2ff"/><stop offset="0.232" stop-color="#0188ff"/><stop offset="0.326" stop-color="#7978ff"/><stop offset="0.409" stop-color="#ff67fe"/><stop offset="0.446" stop-color="#ff4ac8"/><stop offset="0.489" stop-color="#ff329b"/><stop offset="0.54" stop-color="#ff1e76"/><stop offset="0.601" stop-color="#ff0e57"/><stop offset="0.674" stop-color="#ff003e"/><stop offset="0.764" stop-color="#ff0028"/><stop offset="1" stop-color="#ff0007"/></linearGradient><linearGradient id="c157" gradientUnits="userSpaceOnUse" x1="1709.6" x2="2252.1" y1="0" y2="0"><stop offset="0" stop-color="#009eff"/><stop offset="0.232" stop-color="#0184ff"/><stop offset="0.324" stop-color="#7275ff"/><stop offset="0.415" stop-color="#ff60fb"/><stop offset="0.452" stop-color="#ff45c6"/><stop offset="0.493" stop-color="#ff2f9d"/><stop offset="0.544" stop-color="#ff1c78"/><stop offset="0.607" stop-color="#ff0c59"/><stop offset="0.673" stop-color="#ff0041"/><stop offset="0.768" stop-color="#ff002a"/><stop offset="1" stop-color="#ff0008"/></linearGradient><linearGradient id="c158" gradientUnits="userSpaceOnUse" x1="1710.4" x2="2245.2" y1="0" y2="0"><stop offset="0" stop-color="#009aff"/><stop offset="0.231" stop-color="#0080ff"/><stop offset="0.328" stop-color="#7670ff"/><stop offset="0.418" stop-color="#ff5dff"/><stop offset="0.455" stop-color="#ff42ca"/><stop offset="0.5" stop-color="#ff2c9d"/><stop offset="0.552" stop-color="#ff1978"/><stop offset="0.612" stop-color="#ff0b5b"/><stop offset="0.672" stop-color="#ff0045"/><stop offset="0.772" stop-color="#ff002b"/><stop offset="1" stop-color="#ff000a"/></linearGradient><linearGradient id="c159" gradientUnits="userSpaceOnUse" x1="1711.2" x2="2238.3" y1="0" y2="0"><stop offset="0" stop-color="#0097ff"/><stop offset="0.231" stop-color="#007cff"/><stop offset="0.33" stop-color="#746bff"/><stop offset="0.424" stop-color="#ff57fd"/><stop offset="0.462" stop-color="#ff3dc8"/><stop offset="0.504" stop-color="#ff299f"/><stop offset="0.557" stop-color="#ff177a"/><stop offset="0.617" stop-color="#ff095c"/><stop offset="0.667" stop-color="#ff004a"/><stop offset="0.777" stop-color="#ff002d"/><stop offset="1" stop-color="#ff000c"/></linearGradient><linearGradient id="c160" gradientUnits="userSpaceOnUse" x1="1712.1" x2="2231.4" y1="0" y2="0"><stop offset="0" stop-color="#0093ff"/><stop offset="0.231" stop-color="#0078ff"/><stop offset="0.327" stop-color="#6d68ff"/><stop offset="0.431" stop-color="#ff51fb"/><stop offset="0.469" stop-color="#ff39c7"/><stop offset="0.512" stop-color="#ff269f"/><stop offset="0.562" stop-color="#ff167c"/><stop offset="0.623" stop-color="#ff075e"/><stop offset="0.665" stop-color="#ff004e"/><stop offset="0.781" stop-color="#ff002f"/><stop offset="1" stop-color="#ff000e"/></linearGradient><linearGradient id="c161" gradientUnits="userSpaceOnUse" x1="1712.9" x2="2224.5" y1="0" y2="0"><stop offset="0" stop-color="#0090ff"/><stop offset="0.23" stop-color="#0074ff"/><stop offset="0.336" stop-color="#7563ff"/><stop offset="0.434" stop-color="#ff4efe"/><stop offset="0.469" stop-color="#ff38cf"/><stop offset="0.512" stop-color="#ff25a4"/><stop offset="0.562" stop-color="#ff1581"/><stop offset="0.625" stop-color="#ff0661"/><stop offset="0.781" stop-color="#ff0032"/><stop offset="1" stop-color="#ff0011"/></linearGradient><linearGradient id="c162" gradientUnits="userSpaceOnUse" x1="1713.7" x2="2217.6" y1="0" y2="0"><stop offset="0" stop-color="#008cff"/><stop offset="0.23" stop-color="#0070ff"/><stop offset="0.333" stop-color="#6e5fff"/><stop offset="0.44" stop-color="#ff48fc"/><stop offset="0.476" stop-color="#ff33cd"/><stop offset="0.52" stop-color="#ff21a4"/><stop offset="0.571" stop-color="#ff1281"/><stop offset="0.631" stop-color="#ff0563"/><stop offset="0.786" stop-color="#ff0034"/><stop offset="1" stop-color="#ff0013"/></linearGradient><linearGradient id="c163" gradientUnits="userSpaceOnUse" x1="1714.6" x2="2210.7" y1="0" y2="0"><stop offset="0" stop-color="#0088ff"/><stop offset="0.233" stop-color="#016cff"/><stop offset="0.341" stop-color="#755aff"/><stop offset="0.446" stop-color="#ff43fc"/><stop offset="0.482" stop-color="#ff30ce"/><stop offset="0.526" stop-color="#ff1ea5"/><stop offset="0.578" stop-color="#ff0f82"/><stop offset="0.639" stop-color="#ff0364"/><stop offset="0.791" stop-color="#ff0036"/><stop offset="1" stop-color="#ff0015"/></linearGradient><linearGradient id="c164" gradientUnits="userSpaceOnUse" x1="1715.4" x2="2203.8" y1="0" y2="0"><stop offset="0" stop-color="#0085ff"/><stop offset="0.233" stop-color="#0169ff"/><stop offset="0.347" stop-color="#7856ff"/><stop offset="0.449" stop-color="#fe40ff"/><stop offset="0.486" stop-color="#ff2dd1"/><stop offset="0.531" stop-color="#ff1ca7"/><stop offset="0.641" stop-color="#ff0268"/><stop offset="0.792" stop-color="#ff0039"/><stop offset="1" stop-color="#ff0017"/></linearGradient><linearGradient id="c165" gradientUnits="userSpaceOnUse" x1="1716.3" x2="2196.8" y1="0" y2="0"><stop offset="0" stop-color="#0081ff"/><stop offset="0.232" stop-color="#0065ff"/><stop offset="0.349" stop-color="#7652ff"/><stop offset="0.456" stop-color="#ff3bfd"/><stop offset="0.494" stop-color="#ff29cf"/><stop offset="0.535" stop-color="#ff1aaa"/><stop offset="0.585" stop-color="#ff0c88"/><stop offset="0.647" stop-color="#ff006a"/><stop offset="0.797" stop-color="#ff003c"/><stop offset="1" stop-color="#ff001a"/></linearGradient><linearGradient id="c166" gradientUnits="userSpaceOnUse" x1="1717.2" x2="2189.9" y1="0" y2="0"><stop offset="0" stop-color="#007eff"/><stop offset="0.232" stop-color="#0062ff"/><stop offset="0.346" stop-color="#704fff"/><stop offset="0.464" stop-color="#ff36fb"/><stop offset="0.502" stop-color="#ff25ce"/><stop offset="0.544" stop-color="#ff16a9"/><stop offset="0.654" stop-color="#ff006b"/><stop offset="0.802" stop-color="#ff003e"/><stop offset="1" stop-color="#ff001c"/></linearGradient><linearGradient id="c167" gradientUnits="userSpaceOnUse" x1="1718.1" x2="2183.0" y1="0" y2="0"><stop offset="0" stop-color="#007bff"/><stop offset="0.232" stop-color="#005fff"/><stop offset="0.356" stop-color="#774aff"/><stop offset="0.468" stop-color="#ff33fe"/><stop offset="0.506" stop-color="#ff22d1"/><stop offset="0.549" stop-color="#ff14ab"/><stop offset="0.657" stop-color="#ff006f"/><stop offset="0.803" stop-color="#ff0041"/><stop offset="1" stop-color="#ff001f"/></linearGradient><linearGradient id="c168" gradientUnits="userSpaceOnUse" x1="1719.0" x2="2176.1" y1="0" y2="0"><stop offset="0" stop-color="#0077ff"/><stop offset="0.231" stop-color="#005bff"/><stop offset="0.354" stop-color="#7148ff"/><stop offset="0.476" stop-color="#ff2efc"/><stop offset="0.511" stop-color="#ff1fd4"/><stop offset="0.555" stop-color="#ff12ae"/><stop offset="0.664" stop-color="#ff0071"/><stop offset="0.808" stop-color="#ff0043"/><stop offset="1" stop-color="#ff0021"/></linearGradient><linearGradient id="c169" gradientUnits="userSpaceOnUse" x1="1719.9" x2="2169.2" y1="0" y2="0"><stop offset="0" stop-color="#0074ff"/><stop offset="0.231" stop-color="#0058ff"/><stop offset="0.36" stop-color="#7443ff"/><stop offset="0.48" stop-color="#ff2bff"/><stop offset="0.52" stop-color="#ff1bd2"/><stop offset="0.56" stop-color="#ff10b0"/><stop offset="0.667" stop-color="#ff0074"/><stop offset="0.809" stop-color="#ff0047"/><stop offset="1" stop-color="#ff0024"/></linearGradient><linearGradient id="c170" gradientUnits="userSpaceOnUse" x1="1720.9" x2="2162.3" y1="0" y2="0"><stop offset="0" stop-color="#0071ff"/><stop offset="0.231" stop-color="#0055ff"/><stop offset="0.362" stop-color="#7340ff"/><stop offset="0.489" stop-color="#ff26fd"/><stop offset="0.525" stop-color="#ff19d5"/><stop offset="0.57" stop-color="#ff0cb0"/><stop offset="0.629" stop-color="#ff008b"/><stop offset="0.674" stop-color="#ff0076"/><stop offset="0.814" stop-color="#ff0049"/><stop offset="1" stop-color="#ff0027"/></linearGradient><linearGradient id="c171" gradientUnits="userSpaceOnUse" x1="1721.8" x2="2155.4" y1="0" y2="0"><stop offset="0" stop-color="#006dff"/><stop offset="0.235" stop-color="#0251ff"/><stop offset="0.373" stop-color="#7a3bff"/><stop offset="0.493" stop-color="#fe23ff"/><stop offset="0.576" stop-color="#ff0ab2"/><stop offset="0.627" stop-color="#ff0092"/><stop offset="0.682" stop-color="#ff0078"/><stop offset="0.82" stop-color="#ff004c"/><stop offset="1" stop-color="#ff002a"/></linearGradient><linearGradient id="c172" gradientUnits="userSpaceOnUse" x1="1722.8" x2="2148.5" y1="0" y2="0"><stop offset="0" stop-color="#006aff"/><stop offset="0.235" stop-color="#024eff"/><stop offset="0.376" stop-color="#7938ff"/><stop offset="0.502" stop-color="#ff1efe"/><stop offset="0.582" stop-color="#ff08b4"/><stop offset="0.685" stop-color="#ff007c"/><stop offset="0.822" stop-color="#ff004f"/><stop offset="1" stop-color="#ff002d"/></linearGradient><linearGradient id="c173" gradientUnits="userSpaceOnUse" x1="1723.8" x2="2141.6" y1="0" y2="0"><stop offset="0" stop-color="#0067ff"/><stop offset="0.234" stop-color="#024bff"/><stop offset="0.373" stop-color="#7336ff"/><stop offset="0.512" stop-color="#ff1afb"/><stop offset="0.593" stop-color="#ff04b3"/><stop offset="0.694" stop-color="#ff007d"/><stop offset="0.828" stop-color="#ff0052"/><stop offset="1" stop-color="#ff0030"/></linearGradient><linearGradient id="c174" gradientUnits="userSpaceOnUse" x1="1724.8" x2="2134.7" y1="0" y2="0"><stop offset="0" stop-color="#0064ff"/><stop offset="0.234" stop-color="#0248ff"/><stop offset="0.38" stop-color="#7632ff"/><stop offset="0.517" stop-color="#ff17fe"/><stop offset="0.595" stop-color="#ff03b9"/><stop offset="0.698" stop-color="#ff0081"/><stop offset="0.829" stop-color="#ff0056"/><stop offset="1" stop-color="#ff0034"/></linearGradient><linearGradient id="c175" gradientUnits="userSpaceOnUse" x1="1725.8" x2="2127.8" y1="0" y2="0"><stop offset="0" stop-color="#0061ff"/><stop offset="0.234" stop-color="#0245ff"/><stop offset="0.383" stop-color="#752fff"/><stop offset="0.527" stop-color="#ff13fc"/><stop offset="0.607" stop-color="#ff00b8"/><stop offset="0.706" stop-color="#ff0083"/><stop offset="0.836" stop-color="#ff0058"/><stop offset="1" stop-color="#ff0037"/></linearGradient><linearGradient id="c176" gradientUnits="userSpaceOnUse" x1="1726.9" x2="2120.9" y1="0" y2="0"><stop offset="0" stop-color="#005dff"/><stop offset="0.234" stop-color="#0243ff"/><stop offset="0.391" stop-color="#782bff"/><stop offset="0.533" stop-color="#ff10ff"/><stop offset="0.609" stop-color="#ff00be"/><stop offset="0.711" stop-color="#ff0087"/><stop offset="0.838" stop-color="#ff005c"/><stop offset="1" stop-color="#ff003b"/></linearGradient><linearGradient id="c177" gradientUnits="userSpaceOnUse" x1="1727.9" x2="2114.0" y1="0" y2="0"><stop offset="0" stop-color="#005aff"/><stop offset="0.232" stop-color="#0140ff"/><stop offset="0.397" stop-color="#7927ff"/><stop offset="0.541" stop-color="#ff0cff"/><stop offset="0.624" stop-color="#ff00bb"/><stop offset="0.722" stop-color="#ff0088"/><stop offset="0.845" stop-color="#ff005f"/><stop offset="1" stop-color="#ff003e"/></linearGradient><linearGradient id="c178" gradientUnits="userSpaceOnUse" x1="1729.0" x2="2107.1" y1="0" y2="0"><stop offset="0" stop-color="#0057ff"/><stop offset="0.232" stop-color="#013dff"/><stop offset="0.395" stop-color="#7425ff"/><stop offset="0.553" stop-color="#ff08fd"/><stop offset="0.632" stop-color="#ff00bd"/><stop offset="0.726" stop-color="#ff008c"/><stop offset="0.847" stop-color="#ff0063"/><stop offset="1" stop-color="#ff0042"/></linearGradient><linearGradient id="c179" gradientUnits="userSpaceOnUse" x1="1730.1" x2="2100.2" y1="0" y2="0"><stop offset="0" stop-color="#0054ff"/><stop offset="0.231" stop-color="#013aff"/><stop offset="0.403" stop-color="#7722ff"/><stop offset="0.559" stop-color="#ff05ff"/><stop offset="0.64" stop-color="#ff00c0"/><stop offset="0.737" stop-color="#ff008e"/><stop offset="0.855" stop-color="#ff0066"/><stop offset="1" stop-color="#ff0046"/></linearGradient><linearGradient id="c180" gradientUnits="userSpaceOnUse" x1="1731.2" x2="2093.2" y1="0" y2="0"><stop offset="0" stop-color="#0051ff"/><stop offset="0.232" stop-color="#0138ff"/><stop offset="0.409" stop-color="#771fff"/><stop offset="0.569" stop-color="#ff02ff"/><stop offset="0.646" stop-color="#ff00c3"/><stop offset="0.74" stop-color="#ff0093"/><stop offset="0.856" stop-color="#ff006b"/><stop offset="1" stop-color="#ff004a"/></linearGradient><linearGradient id="c181" gradientUnits="userSpaceOnUse" x1="1732.4" x2="2086.3" y1="0" y2="0"><stop offset="0" stop-color="#004eff"/><stop offset="0.232" stop-color="#0135ff"/><stop offset="0.412" stop-color="#761cff"/><stop offset="0.582" stop-color="#ff00fd"/><stop offset="0.661" stop-color="#ff00c2"/><stop offset="0.751" stop-color="#ff0095"/><stop offset="0.864" stop-color="#ff006e"/><stop offset="1" stop-color="#ff004f"/></linearGradient><linearGradient id="c182" gradientUnits="userSpaceOnUse" x1="1733.5" x2="2079.4" y1="0" y2="0"><stop offset="0" stop-color="#004bff"/><stop offset="0.231" stop-color="#0132ff"/><stop offset="0.422" stop-color="#7918ff"/><stop offset="0.59" stop-color="#ff00ff"/><stop offset="0.665" stop-color="#ff00c8"/><stop offset="0.757" stop-color="#ff0099"/><stop offset="0.867" stop-color="#ff0073"/><stop offset="1" stop-color="#ff0053"/></linearGradient><linearGradient id="c183" gradientUnits="userSpaceOnUse" x1="1734.7" x2="2072.5" y1="0" y2="0"><stop offset="0" stop-color="#0048ff"/><stop offset="0.231" stop-color="#0130ff"/><stop offset="0.42" stop-color="#7417ff"/><stop offset="0.556" stop-color="#d900ff"/><stop offset="0.604" stop-color="#ff00fd"/><stop offset="0.68" stop-color="#ff00c6"/><stop offset="0.769" stop-color="#ff009b"/><stop offset="0.876" stop-color="#ff0076"/><stop offset="1" stop-color="#ff0058"/></linearGradient><linearGradient id="c184" gradientUnits="userSpaceOnUse" x1="1735.8" x2="2065.6" y1="0" y2="0"><stop offset="0" stop-color="#0045ff"/><stop offset="0.23" stop-color="#012dff"/><stop offset="0.43" stop-color="#7713ff"/><stop offset="0.552" stop-color="#ce00ff"/><stop offset="0.612" stop-color="#fe00ff"/><stop offset="0.691" stop-color="#ff00c9"/><stop offset="0.776" stop-color="#ff009f"/><stop offset="0.879" stop-color="#ff007b"/><stop offset="1" stop-color="#ff005d"/></linearGradient><linearGradient id="c185" gradientUnits="userSpaceOnUse" x1="1737.0" x2="2058.7" y1="0" y2="0"><stop offset="0" stop-color="#0042ff"/><stop offset="0.23" stop-color="#022bff"/><stop offset="0.435" stop-color="#7611ff"/><stop offset="0.54" stop-color="#be00ff"/><stop offset="0.621" stop-color="#fc00ff"/><stop offset="0.702" stop-color="#ff00cb"/><stop offset="0.783" stop-color="#ff00a3"/><stop offset="0.882" stop-color="#ff0080"/><stop offset="1" stop-color="#ff0062"/></linearGradient><linearGradient id="c186" gradientUnits="userSpaceOnUse" x1="1738.1" x2="2051.8" y1="0" y2="0"><stop offset="0" stop-color="#003fff"/><stop offset="0.229" stop-color="#0228ff"/><stop offset="0.446" stop-color="#790dff"/><stop offset="0.535" stop-color="#b300ff"/><stop offset="0.637" stop-color="#fe00ff"/><stop offset="0.707" stop-color="#ff00d1"/><stop offset="0.79" stop-color="#ff00a8"/><stop offset="0.885" stop-color="#ff0086"/><stop offset="1" stop-color="#ff0068"/></linearGradient><linearGradient id="c187" gradientUnits="userSpaceOnUse" x1="1739.3" x2="2044.9" y1="0" y2="0"><stop offset="0" stop-color="#003cff"/><stop offset="0.229" stop-color="#0226ff"/><stop offset="0.451" stop-color="#780bff"/><stop offset="0.529" stop-color="#a900ff"/><stop offset="0.647" stop-color="#fc00ff"/><stop offset="0.732" stop-color="#ff00cc"/><stop offset="0.804" stop-color="#ff00aa"/><stop offset="1" stop-color="#ff006e"/></linearGradient><linearGradient id="c188" gradientUnits="userSpaceOnUse" x1="1740.5" x2="2038.0" y1="0" y2="0"><stop offset="0" stop-color="#0039ff"/><stop offset="0.228" stop-color="#0224ff"/><stop offset="0.456" stop-color="#7708ff"/><stop offset="0.517" stop-color="#9b00ff"/><stop offset="0.664" stop-color="#fe00ff"/><stop offset="0.738" stop-color="#ff00d1"/><stop offset="0.812" stop-color="#ff00af"/><stop offset="1" stop-color="#ff0074"/></linearGradient><linearGradient id="c189" gradientUnits="userSpaceOnUse" x1="1741.6" x2="2031.1" y1="0" y2="0"><stop offset="0" stop-color="#0037ff"/><stop offset="0.228" stop-color="#0221ff"/><stop offset="0.462" stop-color="#7606ff"/><stop offset="0.676" stop-color="#fb00ff"/><stop offset="0.821" stop-color="#ff00b3"/><stop offset="1" stop-color="#ff007a"/></linearGradient><linearGradient id="c190" gradientUnits="userSpaceOnUse" x1="1742.9" x2="2024.2" y1="0" y2="0"><stop offset="0" stop-color="#0034ff"/><stop offset="0.227" stop-color="#021fff"/><stop offset="0.475" stop-color="#7903ff"/><stop offset="0.695" stop-color="#fe00ff"/><stop offset="0.83" stop-color="#ff00b8"/><stop offset="1" stop-color="#ff0081"/></linearGradient><linearGradient id="c191" gradientUnits="userSpaceOnUse" x1="1744.1" x2="2017.3" y1="0" y2="0"><stop offset="0" stop-color="#0031ff"/><stop offset="0.226" stop-color="#021dff"/><stop offset="0.482" stop-color="#7800ff"/><stop offset="0.708" stop-color="#fb00ff"/><stop offset="0.847" stop-color="#ff00ba"/><stop offset="1" stop-color="#ff0088"/></linearGradient><linearGradient id="c192" gradientUnits="userSpaceOnUse" x1="1745.4" x2="2010.4" y1="0" y2="0"><stop offset="0" stop-color="#002eff"/><stop offset="0.226" stop-color="#021aff"/><stop offset="0.489" stop-color="#7700ff"/><stop offset="0.729" stop-color="#fe00ff"/><stop offset="0.857" stop-color="#ff00bf"/><stop offset="1" stop-color="#ff0090"/></linearGradient><linearGradient id="c193" gradientUnits="userSpaceOnUse" x1="1746.6" x2="2003.5" y1="0" y2="0"><stop offset="0" stop-color="#002bff"/><stop offset="0.225" stop-color="#0218ff"/><stop offset="0.496" stop-color="#7600ff"/><stop offset="0.744" stop-color="#fb00ff"/><stop offset="0.868" stop-color="#ff00c4"/><stop offset="1" stop-color="#ff0098"/></linearGradient><linearGradient id="c194" gradientUnits="userSpaceOnUse" x1="1747.9" x2="1996.5" y1="0" y2="0"><stop offset="0" stop-color="#0029ff"/><stop offset="0.224" stop-color="#0316ff"/><stop offset="0.512" stop-color="#7900ff"/><stop offset="0.768" stop-color="#fe00ff"/><stop offset="0.88" stop-color="#ff00ca"/><stop offset="1" stop-color="#ff00a0"/></linearGradient><linearGradient id="c195" gradientUnits="userSpaceOnUse" x1="1749.3" x2="1989.6" y1="0" y2="0"><stop offset="0" stop-color="#0026ff"/><stop offset="0.215" stop-color="#0015ff"/><stop offset="0.43" stop-color="#5100ff"/><stop offset="0.512" stop-color="#7400ff"/><stop offset="0.785" stop-color="#fb00ff"/><stop offset="0.901" stop-color="#ff00cc"/><stop offset="1" stop-color="#ff00a9"/></linearGradient><linearGradient id="c196" gradientUnits="userSpaceOnUse" x1="1750.6" x2="1982.7" y1="0" y2="0"><stop offset="0" stop-color="#0023ff"/><stop offset="0.214" stop-color="#0012ff"/><stop offset="0.419" stop-color="#4a00ff"/><stop offset="0.53" stop-color="#7700ff"/><stop offset="0.812" stop-color="#fd00ff"/><stop offset="1" stop-color="#ff00b3"/></linearGradient><linearGradient id="c197" gradientUnits="userSpaceOnUse" x1="1752.0" x2="1975.8" y1="0" y2="0"><stop offset="0" stop-color="#0020ff"/><stop offset="0.214" stop-color="#0110ff"/><stop offset="0.402" stop-color="#4100ff"/><stop offset="0.545" stop-color="#7800ff"/><stop offset="0.839" stop-color="#ff00ff"/><stop offset="1" stop-color="#ff00bd"/></linearGradient><linearGradient id="c198" gradientUnits="userSpaceOnUse" x1="1753.4" x2="1968.9" y1="0" y2="0"><stop offset="0" stop-color="#001eff"/><stop offset="0.213" stop-color="#010eff"/><stop offset="0.38" stop-color="#3700ff"/><stop offset="0.556" stop-color="#7700ff"/><stop offset="0.861" stop-color="#fd00ff"/><stop offset="1" stop-color="#ff00c8"/></linearGradient><linearGradient id="c199" gradientUnits="userSpaceOnUse" x1="1754.8" x2="1962.0" y1="0" y2="0"><stop offset="0" stop-color="#001bff"/><stop offset="0.212" stop-color="#020cff"/><stop offset="0.365" stop-color="#3100ff"/><stop offset="0.577" stop-color="#7a00ff"/><stop offset="0.894" stop-color="#ff00ff"/><stop offset="1" stop-color="#ff00d4"/></linearGradient><linearGradient id="c200" gradientUnits="userSpaceOnUse" x1="1756.2" x2="1955.1" y1="0" y2="0"><stop offset="0" stop-color="#0018ff"/><stop offset="0.21" stop-color="#020aff"/><stop offset="0.34" stop-color="#2800ff"/><stop offset="0.59" stop-color="#7900ff"/><stop offset="0.92" stop-color="#fc00ff"/><stop offset="1" stop-color="#ff00e1"/></linearGradient><linearGradient id="c201" gradientUnits="userSpaceOnUse" x1="1757.7" x2="1948.2" y1="0" y2="0"><stop offset="0" stop-color="#0016ff"/><stop offset="0.208" stop-color="#0208ff"/><stop offset="0.323" stop-color="#2200ff"/><stop offset="0.604" stop-color="#7900ff"/><stop offset="0.958" stop-color="#fe00ff"/><stop offset="1" stop-color="#ff00ef"/></linearGradient><linearGradient id="c202" gradientUnits="userSpaceOnUse" x1="1759.3" x2="1941.3" y1="0" y2="0"><stop offset="0" stop-color="#0013ff"/><stop offset="0.187" stop-color="#0007ff"/><stop offset="0.231" stop-color="#0904ff"/><stop offset="0.626" stop-color="#7a00ff"/><stop offset="1" stop-color="#ff00fe"/></linearGradient><linearGradient id="c203" gradientUnits="userSpaceOnUse" x1="1760.9" x2="1934.4" y1="0" y2="0"><stop offset="0" stop-color="#0010ff"/><stop offset="0.184" stop-color="#0005ff"/><stop offset="0.218" stop-color="#0703ff"/><stop offset="0.632" stop-color="#7600ff"/><stop offset="1" stop-color="#f100ff"/></linearGradient><linearGradient id="c204" gradientUnits="userSpaceOnUse" x1="1762.6" x2="1927.5" y1="0" y2="0"><stop offset="0" stop-color="#000eff"/><stop offset="0.205" stop-color="#0502ff"/><stop offset="0.627" stop-color="#6f00ff"/><stop offset="1" stop-color="#e200ff"/></linearGradient><linearGradient id="c205" gradientUnits="userSpaceOnUse" x1="1764.3" x2="1920.6" y1="0" y2="0"><stop offset="0" stop-color="#000bff"/><stop offset="0.19" stop-color="#0300ff"/><stop offset="0.62" stop-color="#6700ff"/><stop offset="1" stop-color="#d400ff"/></linearGradient><linearGradient id="c206" gradientUnits="userSpaceOnUse" x1="1766.1" x2="1913.7" y1="0" y2="0"><stop offset="0" stop-color="#0008ff"/><stop offset="0.176" stop-color="#0100ff"/><stop offset="0.608" stop-color="#5f00ff"/><stop offset="1" stop-color="#c600ff"/></linearGradient><linearGradient id="c207" gradientUnits="userSpaceOnUse" x1="1767.9" x2="1906.8" y1="0" y2="0"><stop offset="0" stop-color="#0005ff"/><stop offset="0.171" stop-color="#0200ff"/><stop offset="0.6" stop-color="#5900ff"/><stop offset="1" stop-color="#b900ff"/></linearGradient><linearGradient id="c208" gradientUnits="userSpaceOnUse" x1="1769.8" x2="1899.9" y1="0" y2="0"><stop offset="0" stop-color="#0003ff"/><stop offset="0.152" stop-color="#0000ff"/><stop offset="0.591" stop-color="#5200ff"/><stop offset="1" stop-color="#ac00ff"/></linearGradient><linearGradient id="c209" gradientUnits="userSpaceOnUse" x1="1771.8" x2="1892.9" y1="0" y2="0"><stop offset="0" stop-color="#0000ff"/><stop offset="0.164" stop-color="#0400ff"/><stop offset="0.59" stop-color="#4e00ff"/><stop offset="1" stop-color="#a000ff"/></linearGradient><linearGradient id="c210" gradientUnits="userSpaceOnUse" x1="1774.0" x2="1886.0" y1="0" y2="0"><stop offset="0" stop-color="#0000ff"/><stop offset="0.123" stop-color="#0000ff"/><stop offset="0.175" stop-color="#0800ff"/><stop offset="1" stop-color="#9400ff"/></linearGradient><linearGradient id="c211" gradientUnits="userSpaceOnUse" x1="1776.2" x2="1879.1" y1="0" y2="0"><stop offset="0" stop-color="#0000ff"/><stop offset="0.0962" stop-color="#0000ff"/><stop offset="0.192" stop-color="#0c00ff"/><stop offset="1" stop-color="#8900ff"/></linearGradient><linearGradient id="c212" gradientUnits="userSpaceOnUse" x1="1778.6" x2="1872.2" y1="0" y2="0"><stop offset="0" stop-color="#0000ff"/><stop offset="0.0851" stop-color="#0100ff"/><stop offset="0.255" stop-color="#1600ff"/><stop offset="1" stop-color="#7e00ff"/></linearGradient><linearGradient id="c213" gradientUnits="userSpaceOnUse" x1="1781.4" x2="1865.3" y1="0" y2="0"><stop offset="0" stop-color="#0000ff"/><stop offset="0.357" stop-color="#2300ff"/><stop offset="1" stop-color="#7300ff"/></linearGradient><linearGradient id="c214" gradientUnits="userSpaceOnUse" x1="1784.3" x2="1858.4" y1="0" y2="0"><stop offset="0" stop-color="#0000ff"/><stop offset="1" stop-color="#6900ff"/></linearGradient><linearGradient id="c215" gradientUnits="userSpaceOnUse" x1="1787.5" x2="1851.5" y1="0" y2="0"><stop offset="0" stop-color="#0500ff"/><stop offset="1" stop-color="#5f00ff"/></linearGradient><linearGradient id="c216" gradientUnits="userSpaceOnUse" x1="1790.9" x2="1844.6" y1="0" y2="0"><stop offset="0" stop-color="#0b00ff"/><stop offset="1" stop-color="#5500ff"/></linearGradient><linearGradient id="c217" gradientUnits="userSpaceOnUse" x1="1794.6" x2="1837.7" y1="0" y2="0"><stop offset="0" stop-color="#1100ff"/><stop offset="1" stop-color="#4c00ff"/></linearGradient><linearGradient id="c218" gradientUnits="userSpaceOnUse" x1="1798.3" x2="1830.8" y1="0" y2="0"><stop offset="0" stop-color="#1600ff"/><stop offset="1" stop-color="#4300ff"/></linearGradient><linearGradient id="c219" gradientUnits="userSpaceOnUse" x1="1801.9" x2="1823.9" y1="0" y2="0"><stop offset="0" stop-color="#1c00ff"/><stop offset="1" stop-color="#3a00ff"/></linearGradient><linearGradient id="c220" gradientUnits="userSpaceOnUse" x1="1805.6" x2="1817.0" y1="0" y2="0"><stop offset="0" stop-color="#2200ff"/><stop offset="1" stop-color="#3100ff"/></linearGradient><clipPath id="hs"><polygon points="1812.1,930.3 1812.1,930.3 1812.1,930.3 1812.1,930.3 1812.1,930.3 1812.0,930.3 1812.0,930.3 1812.0,930.3 1812.0,930.3 1811.9,930.3 1811.9,930.4 1811.9,930.4 1811.9,930.4 1811.8,930.4 1811.8,930.4 1811.8,930.4 1811.7,930.4 1811.7,930.4 1811.7,930.4 1811.6,930.4 1811.6,930.4 1811.6,930.4 1811.5,930.4 1811.5,930.5 1811.4,930.5 1811.4,930.5 1811.3,930.5 1811.3,930.5 1811.3,930.5 1811.2,930.5 1811.2,930.5 1811.1,930.5 1811.1,930.5 1811.0,930.5 1811.0,930.5 1810.9,930.5 1810.8,930.5 1810.8,930.5 1810.7,930.5 1810.6,930.5 1810.6,930.5 1810.5,930.5 1810.4,930.5 1810.3,930.4 1810.2,930.4 1810.1,930.4 1810.0,930.3 1809.9,930.3 1809.8,930.2 1809.7,930.2 1809.5,930.1 1809.4,930.0 1809.2,929.9 1809.0,929.8 1808.9,929.7 1808.7,929.5 1808.5,929.4 1808.3,929.3 1808.1,929.1 1807.9,929.0 1807.7,928.8 1807.4,928.6 1807.2,928.4 1806.9,928.2 1806.6,927.9 1806.3,927.7 1806.0,927.4 1805.6,927.2 1805.3,926.9 1805.0,926.6 1804.6,926.3 1804.2,925.9 1803.8,925.6 1803.4,925.2 1803.0,924.9 1802.5,924.5 1802.1,924.1 1801.6,923.7 1801.0,923.3 1800.4,922.8 1799.8,922.3 1799.2,921.8 1798.6,921.3 1797.9,920.7 1797.2,920.2 1796.4,919.6 1795.7,919.0 1794.9,918.3 1794.1,917.7 1793.3,916.9 1792.4,916.2 1791.5,915.4 1790.5,914.5 1789.6,913.6 1788.5,912.7 1787.5,911.7 1786.4,910.6 1785.3,909.4 1784.2,908.3 1783.0,907.1 1781.8,905.7 1780.5,904.2 1779.2,902.4 1777.7,900.5 1776.2,898.5 1774.6,896.2 1773.0,893.8 1771.2,891.1 1769.4,888.1 1767.6,885.0 1765.6,881.6 1763.6,878.0 1761.5,874.0 1759.3,869.7 1757.1,865.0 1754.7,859.9 1752.2,854.4 1749.7,848.6 1747.0,842.4 1744.3,835.6 1741.4,828.3 1738.4,820.6 1735.3,812.3 1732.1,803.6 1728.8,794.3 1725.4,784.5 1722.1,774.0 1718.8,762.9 1715.5,751.2 1712.2,738.9 1708.8,726.0 1705.5,712.6 1702.3,698.7 1699.0,684.2 1695.7,669.0 1692.5,653.3 1689.3,637.3 1686.3,621.0 1683.6,604.8 1680.9,588.3 1678.4,571.5 1676.1,554.5 1673.9,537.5 1672.1,520.8 1670.5,504.4 1669.2,488.3 1668.1,472.2 1667.3,456.4 1666.8,440.9 1666.6,425.9 1666.8,411.4 1667.4,397.5 1668.3,383.8 1669.5,370.6 1671.1,358.0 1673.1,346.2 1675.4,335.3 1678.1,325.1 1681.2,315.6 1684.7,306.9 1688.5,299.0 1692.5,292.0 1696.7,285.9 1701.2,280.9 1706.0,276.9 1711.0,273.8 1716.2,271.4 1721.6,269.7 1726.9,268.5 1732.4,268.0 1738.0,268.4 1743.7,269.4 1749.4,270.9 1755.2,272.7 1761.0,274.6 1766.7,276.7 1772.5,279.1 1778.4,281.9 1784.2,284.8 1789.9,287.8 1795.6,290.8 1801.1,293.8 1806.6,296.9 1812.1,300.1 1817.5,303.4 1822.8,306.8 1828.2,310.2 1833.5,313.7 1838.7,317.2 1843.9,320.8 1849.1,324.5 1854.3,328.2 1859.5,332.0 1864.7,335.8 1869.8,339.8 1875.0,343.7 1880.1,347.8 1885.3,351.8 1890.4,355.9 1895.5,360.1 1900.6,364.3 1905.7,368.6 1910.8,372.8 1915.9,377.2 1920.9,381.5 1926.0,385.9 1931.1,390.3 1936.2,394.7 1941.3,399.2 1946.3,403.7 1951.4,408.2 1956.5,412.7 1961.6,417.3 1966.7,421.8 1971.8,426.4 1976.9,431.0 1982.0,435.6 1987.1,440.3 1992.1,444.9 1997.2,449.5 2002.3,454.2 2007.3,458.9 2012.4,463.5 2017.4,468.2 2022.5,472.8 2027.5,477.5 2032.6,482.1 2037.6,486.7 2042.6,491.4 2047.6,496.0 2052.5,500.6 2057.5,505.2 2062.4,509.8 2067.3,514.4 2072.2,518.9 2077.1,523.4 2081.9,528.0 2086.7,532.4 2091.5,536.9 2096.3,541.4 2101.0,545.7 2105.7,550.1 2110.3,554.5 2114.9,558.8 2119.5,563.1 2124.1,567.3 2128.5,571.5 2133.0,575.6 2137.4,579.7 2141.8,583.7 2146.1,587.7 2150.3,591.7 2154.5,595.6 2158.6,599.4 2162.7,603.2 2166.6,606.9 2170.6,610.6 2174.4,614.2 2178.1,617.7 2181.8,621.1 2185.3,624.4 2188.8,627.6 2192.1,630.8 2195.5,633.8 2198.7,636.9 2201.9,639.8 2205.0,642.8 2208.1,645.6 2211.1,648.4 2214.0,651.1 2216.8,653.7 2219.5,656.2 2222.1,658.6 2224.7,661.0 2227.1,663.3 2229.5,665.5 2231.8,667.6 2234.1,669.7 2236.2,671.7 2238.3,673.6 2240.3,675.5 2242.2,677.3 2244.0,679.0 2245.8,680.7 2247.5,682.3 2249.2,683.8 2250.8,685.3 2252.3,686.7 2253.8,688.1 2255.2,689.4 2256.6,690.7 2257.9,691.9 2259.1,693.1 2260.3,694.2 2261.5,695.3 2262.7,696.4 2263.8,697.4 2264.8,698.4 2265.8,699.3 2266.8,700.2 2267.8,701.1 2268.7,702.0 2269.6,702.9 2270.5,703.7 2271.3,704.5 2272.2,705.3 2273.0,706.0 2273.7,706.7 2274.5,707.4 2275.2,708.1 2275.9,708.8 2276.6,709.4 2277.2,710.0 2277.9,710.6 2278.5,711.1 2279.1,711.7 2279.6,712.2 2280.1,712.6 2280.7,713.1 2281.1,713.6 2281.6,714.0 2282.0,714.4 2282.4,714.8 2282.8,715.2 2283.2,715.5 2283.6,715.9 2283.9,716.2 2284.3,716.5 2284.6,716.8 2284.9,717.1 2285.2,717.3 2285.4,717.6 2285.7,717.8 2285.9,718.0 2286.1,718.3 2286.4,718.5 2286.6,718.7 2286.9,719.0 2287.2,719.2 2287.5,719.5 2287.8,719.8 2288.1,720.1 2288.3,720.3 2288.6,720.5 2288.8,720.7 2289.0,720.9 2289.2,721.1 2289.3,721.2 2289.5,721.4 2289.7,721.6 2289.9,721.8 2290.2,722.0 2290.4,722.2 2290.5,722.3 2290.6,722.5"/></clipPath></defs><g clip-path="url(#hs)"><rect x="1719.4" y="268" width="27.5" height="3.5" fill="url(#c0)"/><rect x="1710.8" y="271" width="46.8" height="3.5" fill="url(#c1)"/><rect x="1705.2" y="274" width="61.3" height="3.5" fill="url(#c2)"/><rect x="1701.0" y="277" width="73.0" height="3.5" fill="url(#c3)"/><rect x="1697.6" y="280" width="83.0" height="3.5" fill="url(#c4)"/><rect x="1695.0" y="283" width="91.6" height="3.5" fill="url(#c5)"/><rect x="1692.6" y="286" width="99.7" height="3.5" fill="url(#c6)"/><rect x="1690.5" y="289" width="107.5" height="3.5" fill="url(#c7)"/><rect x="1688.6" y="292" width="114.9" height="3.5" fill="url(#c8)"/><rect x="1686.9" y="295" width="122.0" height="3.5" fill="url(#c9)"/><rect x="1685.2" y="298" width="128.7" height="3.5" fill="url(#c10)"/><rect x="1683.8" y="301" width="135.1" height="3.5" fill="url(#c11)"/><rect x="1682.4" y="304" width="141.4" height="3.5" fill="url(#c12)"/><rect x="1681.0" y="307" width="147.5" height="3.5" fill="url(#c13)"/><rect x="1679.9" y="310" width="153.3" height="3.5" fill="url(#c14)"/><rect x="1678.7" y="313" width="159.0" height="3.5" fill="url(#c15)"/><rect x="1677.6" y="316" width="164.6" height="3.5" fill="url(#c16)"/><rect x="1676.6" y="319" width="169.9" height="3.5" fill="url(#c17)"/><rect x="1675.6" y="322" width="175.1" height="3.5" fill="url(#c18)"/><rect x="1674.7" y="325" width="180.2" height="3.5" fill="url(#c19)"/><rect x="1673.9" y="328" width="185.2" height="3.5" fill="url(#c20)"/><rect x="1673.1" y="331" width="190.1" height="3.5" fill="url(#c21)"/><rect x="1672.3" y="334" width="194.9" height="3.5" fill="url(#c22)"/><rect x="1671.7" y="337" width="199.5" height="3.5" fill="url(#c23)"/><rect x="1671.1" y="340" width="204.0" height="3.5" fill="url(#c24)"/><rect x="1670.4" y="343" width="208.5" height="3.5" fill="url(#c25)"/><rect x="1669.8" y="346" width="212.9" height="3.5" fill="url(#c26)"/><rect x="1669.4" y="349" width="217.2" height="3.5" fill="url(#c27)"/><rect x="1668.9" y="352" width="221.5" height="3.5" fill="url(#c28)"/><rect x="1668.4" y="355" width="225.7" height="3.5" fill="url(#c29)"/><rect x="1667.9" y="358" width="229.8" height="3.5" fill="url(#c30)"/><rect x="1667.6" y="361" width="233.9" height="3.5" fill="url(#c31)"/><rect x="1667.2" y="364" width="237.9" height="3.5" fill="url(#c32)"/><rect x="1666.8" y="367" width="241.8" height="3.5" fill="url(#c33)"/><rect x="1666.5" y="370" width="245.7" height="3.5" fill="url(#c34)"/><rect x="1666.2" y="373" width="249.6" height="3.5" fill="url(#c35)"/><rect x="1665.9" y="376" width="253.4" height="3.5" fill="url(#c36)"/><rect x="1665.6" y="379" width="257.2" height="3.5" fill="url(#c37)"/><rect x="1665.3" y="382" width="260.9" height="3.5" fill="url(#c38)"/><rect x="1665.1" y="385" width="264.6" height="3.5" fill="url(#c39)"/><rect x="1664.9" y="388" width="268.3" height="3.5" fill="url(#c40)"/><rect x="1664.7" y="391" width="271.9" height="3.5" fill="url(#c41)"/><rect x="1664.5" y="394" width="275.6" height="3.5" fill="url(#c42)"/><rect x="1664.4" y="397" width="279.1" height="3.5" fill="url(#c43)"/><rect x="1664.2" y="400" width="282.7" height="3.5" fill="url(#c44)"/><rect x="1664.1" y="403" width="286.2" height="3.5" fill="url(#c45)"/><rect x="1664.0" y="406" width="289.7" height="3.5" fill="url(#c46)"/><rect x="1663.9" y="409" width="293.2" height="3.5" fill="url(#c47)"/><rect x="1663.8" y="412" width="296.6" height="3.5" fill="url(#c48)"/><rect x="1663.8" y="415" width="300.0" height="3.5" fill="url(#c49)"/><rect x="1663.7" y="418" width="303.4" height="3.5" fill="url(#c50)"/><rect x="1663.7" y="421" width="306.8" height="3.5" fill="url(#c51)"/><rect x="1663.6" y="424" width="310.1" height="3.5" fill="url(#c52)"/><rect x="1663.7" y="427" width="313.4" height="3.5" fill="url(#c53)"/><rect x="1663.7" y="430" width="316.7" height="3.5" fill="url(#c54)"/><rect x="1663.7" y="433" width="320.0" height="3.5" fill="url(#c55)"/><rect x="1663.8" y="436" width="323.3" height="3.5" fill="url(#c56)"/><rect x="1663.8" y="439" width="326.5" height="3.5" fill="url(#c57)"/><rect x="1663.9" y="442" width="329.7" height="3.5" fill="url(#c58)"/><rect x="1664.0" y="445" width="332.9" height="3.5" fill="url(#c59)"/><rect x="1664.1" y="448" width="336.1" height="3.5" fill="url(#c60)"/><rect x="1664.2" y="451" width="339.2" height="3.5" fill="url(#c61)"/><rect x="1664.3" y="454" width="342.4" height="3.5" fill="url(#c62)"/><rect x="1664.4" y="457" width="345.5" height="3.5" fill="url(#c63)"/><rect x="1664.6" y="460" width="348.6" height="3.5" fill="url(#c64)"/><rect x="1664.7" y="463" width="351.7" height="3.5" fill="url(#c65)"/><rect x="1664.9" y="466" width="354.8" height="3.5" fill="url(#c66)"/><rect x="1665.0" y="469" width="357.9" height="3.5" fill="url(#c67)"/><rect x="1665.2" y="472" width="361.0" height="3.5" fill="url(#c68)"/><rect x="1665.4" y="475" width="364.1" height="3.5" fill="url(#c69)"/><rect x="1665.6" y="478" width="367.1" height="3.5" fill="url(#c70)"/><rect x="1665.8" y="481" width="370.2" height="3.5" fill="url(#c71)"/><rect x="1666.0" y="484" width="373.2" height="3.5" fill="url(#c72)"/><rect x="1666.2" y="487" width="376.3" height="3.5" fill="url(#c73)"/><rect x="1666.5" y="490" width="379.3" height="3.5" fill="url(#c74)"/><rect x="1666.7" y="493" width="382.3" height="3.5" fill="url(#c75)"/><rect x="1666.9" y="496" width="385.2" height="3.5" fill="url(#c76)"/><rect x="1667.2" y="499" width="388.2" height="3.5" fill="url(#c77)"/><rect x="1667.4" y="502" width="391.2" height="3.5" fill="url(#c78)"/><rect x="1667.7" y="505" width="394.2" height="3.5" fill="url(#c79)"/><rect x="1668.0" y="508" width="397.1" height="3.5" fill="url(#c80)"/><rect x="1668.3" y="511" width="400.0" height="3.5" fill="url(#c81)"/><rect x="1668.6" y="514" width="403.0" height="3.5" fill="url(#c82)"/><rect x="1668.9" y="517" width="405.9" height="3.5" fill="url(#c83)"/><rect x="1669.2" y="520" width="408.8" height="3.5" fill="url(#c84)"/><rect x="1669.5" y="523" width="411.7" height="3.5" fill="url(#c85)"/><rect x="1669.8" y="526" width="414.6" height="3.5" fill="url(#c86)"/><rect x="1670.2" y="529" width="417.5" height="3.5" fill="url(#c87)"/><rect x="1670.5" y="532" width="420.3" height="3.5" fill="url(#c88)"/><rect x="1670.8" y="535" width="423.2" height="3.5" fill="url(#c89)"/><rect x="1671.2" y="538" width="426.1" height="3.5" fill="url(#c90)"/><rect x="1671.6" y="541" width="428.9" height="3.5" fill="url(#c91)"/><rect x="1672.0" y="544" width="431.7" height="3.5" fill="url(#c92)"/><rect x="1672.3" y="547" width="434.6" height="3.5" fill="url(#c93)"/><rect x="1672.7" y="550" width="437.4" height="3.5" fill="url(#c94)"/><rect x="1673.1" y="553" width="440.3" height="3.5" fill="url(#c95)"/><rect x="1673.5" y="556" width="443.1" height="3.5" fill="url(#c96)"/><rect x="1673.9" y="559" width="445.9" height="3.5" fill="url(#c97)"/><rect x="1674.3" y="562" width="448.7" height="3.5" fill="url(#c98)"/><rect x="1674.7" y="565" width="451.5" height="3.5" fill="url(#c99)"/><rect x="1675.2" y="568" width="454.3" height="3.5" fill="url(#c100)"/><rect x="1675.6" y="571" width="457.1" height="3.5" fill="url(#c101)"/><rect x="1676.0" y="574" width="459.8" height="3.5" fill="url(#c102)"/><rect x="1676.5" y="577" width="462.6" height="3.5" fill="url(#c103)"/><rect x="1676.9" y="580" width="465.4" height="3.5" fill="url(#c104)"/><rect x="1677.4" y="583" width="468.2" height="3.5" fill="url(#c105)"/><rect x="1677.8" y="586" width="471.0" height="3.5" fill="url(#c106)"/><rect x="1678.3" y="589" width="473.7" height="3.5" fill="url(#c107)"/><rect x="1678.8" y="592" width="476.5" height="3.5" fill="url(#c108)"/><rect x="1679.2" y="595" width="479.2" height="3.5" fill="url(#c109)"/><rect x="1679.7" y="598" width="482.0" height="3.5" fill="url(#c110)"/><rect x="1680.2" y="601" width="484.7" height="3.5" fill="url(#c111)"/><rect x="1680.7" y="604" width="487.4" height="3.5" fill="url(#c112)"/><rect x="1681.2" y="607" width="490.1" height="3.5" fill="url(#c113)"/><rect x="1681.7" y="610" width="492.8" height="3.5" fill="url(#c114)"/><rect x="1682.2" y="613" width="495.5" height="3.5" fill="url(#c115)"/><rect x="1682.7" y="616" width="498.2" height="3.5" fill="url(#c116)"/><rect x="1683.2" y="619" width="500.9" height="3.5" fill="url(#c117)"/><rect x="1683.8" y="622" width="503.6" height="3.5" fill="url(#c118)"/><rect x="1684.3" y="625" width="506.2" height="3.5" fill="url(#c119)"/><rect x="1684.9" y="628" width="508.9" height="3.5" fill="url(#c120)"/><rect x="1685.5" y="631" width="511.6" height="3.5" fill="url(#c121)"/><rect x="1686.0" y="634" width="514.2" height="3.5" fill="url(#c122)"/><rect x="1686.6" y="637" width="516.9" height="3.5" fill="url(#c123)"/><rect x="1687.2" y="640" width="519.5" height="3.5" fill="url(#c124)"/><rect x="1687.8" y="643" width="522.2" height="3.5" fill="url(#c125)"/><rect x="1688.3" y="646" width="524.8" height="3.5" fill="url(#c126)"/><rect x="1688.9" y="649" width="527.4" height="3.5" fill="url(#c127)"/><rect x="1689.5" y="652" width="530.1" height="3.5" fill="url(#c128)"/><rect x="1690.1" y="655" width="532.7" height="3.5" fill="url(#c129)"/><rect x="1690.8" y="658" width="535.3" height="3.5" fill="url(#c130)"/><rect x="1691.4" y="661" width="537.9" height="3.5" fill="url(#c131)"/><rect x="1692.0" y="664" width="540.6" height="3.5" fill="url(#c132)"/><rect x="1692.6" y="667" width="543.2" height="3.5" fill="url(#c133)"/><rect x="1693.3" y="670" width="545.8" height="3.5" fill="url(#c134)"/><rect x="1693.9" y="673" width="548.3" height="3.5" fill="url(#c135)"/><rect x="1694.6" y="676" width="550.9" height="3.5" fill="url(#c136)"/><rect x="1695.2" y="679" width="553.4" height="3.5" fill="url(#c137)"/><rect x="1695.8" y="682" width="556.0" height="3.5" fill="url(#c138)"/><rect x="1696.5" y="685" width="558.5" height="3.5" fill="url(#c139)"/><rect x="1697.2" y="688" width="561.1" height="3.5" fill="url(#c140)"/><rect x="1697.9" y="691" width="563.6" height="3.5" fill="url(#c141)"/><rect x="1698.5" y="694" width="566.2" height="3.5" fill="url(#c142)"/><rect x="1699.2" y="697" width="568.7" height="3.5" fill="url(#c143)"/><rect x="1699.9" y="700" width="571.3" height="3.5" fill="url(#c144)"/><rect x="1700.6" y="703" width="573.8" height="3.5" fill="url(#c145)"/><rect x="1701.3" y="706" width="576.3" height="3.5" fill="url(#c146)"/><rect x="1702.0" y="709" width="578.8" height="3.5" fill="url(#c147)"/><rect x="1702.7" y="712" width="581.3" height="3.5" fill="url(#c148)"/><rect x="1703.5" y="715" width="583.8" height="3.5" fill="url(#c149)"/><rect x="1704.2" y="718" width="586.3" height="3.5" fill="url(#c150)"/><rect x="1705.0" y="721" width="588.6" height="3.5" fill="url(#c151)"/><rect x="1705.7" y="724" width="580.9" height="3.5" fill="url(#c152)"/><rect x="1706.5" y="727" width="573.3" height="3.5" fill="url(#c153)"/><rect x="1707.2" y="730" width="565.6" height="3.5" fill="url(#c154)"/><rect x="1708.0" y="733" width="557.9" height="3.5" fill="url(#c155)"/><rect x="1708.8" y="736" width="550.2" height="3.5" fill="url(#c156)"/><rect x="1709.6" y="739" width="542.5" height="3.5" fill="url(#c157)"/><rect x="1710.4" y="742" width="534.8" height="3.5" fill="url(#c158)"/><rect x="1711.2" y="745" width="527.1" height="3.5" fill="url(#c159)"/><rect x="1712.1" y="748" width="519.3" height="3.5" fill="url(#c160)"/><rect x="1712.9" y="751" width="511.6" height="3.5" fill="url(#c161)"/><rect x="1713.7" y="754" width="503.8" height="3.5" fill="url(#c162)"/><rect x="1714.6" y="757" width="496.1" height="3.5" fill="url(#c163)"/><rect x="1715.4" y="760" width="488.3" height="3.5" fill="url(#c164)"/><rect x="1716.3" y="763" width="480.5" height="3.5" fill="url(#c165)"/><rect x="1717.2" y="766" width="472.7" height="3.5" fill="url(#c166)"/><rect x="1718.1" y="769" width="464.9" height="3.5" fill="url(#c167)"/><rect x="1719.0" y="772" width="457.1" height="3.5" fill="url(#c168)"/><rect x="1719.9" y="775" width="449.3" height="3.5" fill="url(#c169)"/><rect x="1720.9" y="778" width="441.5" height="3.5" fill="url(#c170)"/><rect x="1721.8" y="781" width="433.6" height="3.5" fill="url(#c171)"/><rect x="1722.8" y="784" width="425.7" height="3.5" fill="url(#c172)"/><rect x="1723.8" y="787" width="417.8" height="3.5" fill="url(#c173)"/><rect x="1724.8" y="790" width="409.9" height="3.5" fill="url(#c174)"/><rect x="1725.8" y="793" width="402.0" height="3.5" fill="url(#c175)"/><rect x="1726.9" y="796" width="394.0" height="3.5" fill="url(#c176)"/><rect x="1727.9" y="799" width="386.0" height="3.5" fill="url(#c177)"/><rect x="1729.0" y="802" width="378.0" height="3.5" fill="url(#c178)"/><rect x="1730.1" y="805" width="370.0" height="3.5" fill="url(#c179)"/><rect x="1731.2" y="808" width="362.0" height="3.5" fill="url(#c180)"/><rect x="1732.4" y="811" width="354.0" height="3.5" fill="url(#c181)"/><rect x="1733.5" y="814" width="345.9" height="3.5" fill="url(#c182)"/><rect x="1734.7" y="817" width="337.9" height="3.5" fill="url(#c183)"/><rect x="1735.8" y="820" width="329.8" height="3.5" fill="url(#c184)"/><rect x="1737.0" y="823" width="321.8" height="3.5" fill="url(#c185)"/><rect x="1738.1" y="826" width="313.7" height="3.5" fill="url(#c186)"/><rect x="1739.3" y="829" width="305.6" height="3.5" fill="url(#c187)"/><rect x="1740.5" y="832" width="297.5" height="3.5" fill="url(#c188)"/><rect x="1741.6" y="835" width="289.4" height="3.5" fill="url(#c189)"/><rect x="1742.9" y="838" width="281.3" height="3.5" fill="url(#c190)"/><rect x="1744.1" y="841" width="273.2" height="3.5" fill="url(#c191)"/><rect x="1745.4" y="844" width="265.0" height="3.5" fill="url(#c192)"/><rect x="1746.6" y="847" width="256.8" height="3.5" fill="url(#c193)"/><rect x="1747.9" y="850" width="248.6" height="3.5" fill="url(#c194)"/><rect x="1749.3" y="853" width="240.4" height="3.5" fill="url(#c195)"/><rect x="1750.6" y="856" width="232.1" height="3.5" fill="url(#c196)"/><rect x="1752.0" y="859" width="223.9" height="3.5" fill="url(#c197)"/><rect x="1753.4" y="862" width="215.6" height="3.5" fill="url(#c198)"/><rect x="1754.8" y="865" width="207.2" height="3.5" fill="url(#c199)"/><rect x="1756.2" y="868" width="198.9" height="3.5" fill="url(#c200)"/><rect x="1757.7" y="871" width="190.5" height="3.5" fill="url(#c201)"/><rect x="1759.3" y="874" width="182.0" height="3.5" fill="url(#c202)"/><rect x="1760.9" y="877" width="173.5" height="3.5" fill="url(#c203)"/><rect x="1762.6" y="880" width="164.9" height="3.5" fill="url(#c204)"/><rect x="1764.3" y="883" width="156.3" height="3.5" fill="url(#c205)"/><rect x="1766.1" y="886" width="147.6" height="3.5" fill="url(#c206)"/><rect x="1767.9" y="889" width="138.9" height="3.5" fill="url(#c207)"/><rect x="1769.8" y="892" width="130.1" height="3.5" fill="url(#c208)"/><rect x="1771.8" y="895" width="121.1" height="3.5" fill="url(#c209)"/><rect x="1774.0" y="898" width="112.1" height="3.5" fill="url(#c210)"/><rect x="1776.2" y="901" width="102.9" height="3.5" fill="url(#c211)"/><rect x="1778.6" y="904" width="93.6" height="3.5" fill="url(#c212)"/><rect x="1781.4" y="907" width="83.9" height="3.5" fill="url(#c213)"/><rect x="1784.3" y="910" width="74.1" height="3.5" fill="url(#c214)"/><rect x="1787.5" y="913" width="64.0" height="3.5" fill="url(#c215)"/><rect x="1790.9" y="916" width="53.7" height="3.5" fill="url(#c216)"/><rect x="1794.6" y="919" width="43.1" height="3.5" fill="url(#c217)"/><rect x="1798.3" y="922" width="32.5" height="3.5" fill="url(#c218)"/><rect x="1801.9" y="925" width="22.0" height="3.5" fill="url(#c219)"/><rect x="1805.6" y="928" width="11.3" height="3.5" fill="url(#c220)"/></g><path d="M1812.1,930.3 L1812.1,930.3 L1812.1,930.3 L1812.1,930.3 L1812.1,930.3 L1812.0,930.3 L1812.0,930.3 L1812.0,930.3 L1812.0,930.3 L1811.9,930.3 L1811.9,930.4 L1811.9,930.4 L1811.9,930.4 L1811.8,930.4 L1811.8,930.4 L1811.8,930.4 L1811.7,930.4 L1811.7,930.4 L1811.7,930.4 L1811.6,930.4 L1811.6,930.4 L1811.6,930.4 L1811.5,930.4 L1811.5,930.5 L1811.4,930.5 L1811.4,930.5 L1811.3,930.5 L1811.3,930.5 L1811.3,930.5 L1811.2,930.5 L1811.2,930.5 L1811.1,930.5 L1811.1,930.5 L1811.0,930.5 L1811.0,930.5 L1810.9,930.5 L1810.8,930.5 L1810.8,930.5 L1810.7,930.5 L1810.6,930.5 L1810.6,930.5 L1810.5,930.5 L1810.4,930.5 L1810.3,930.4 L1810.2,930.4 L1810.1,930.4 L1810.0,930.3 L1809.9,930.3 L1809.8,930.2 L1809.7,930.2 L1809.5,930.1 L1809.4,930.0 L1809.2,929.9 L1809.0,929.8 L1808.9,929.7 L1808.7,929.5 L1808.5,929.4 L1808.3,929.3 L1808.1,929.1 L1807.9,929.0 L1807.7,928.8 L1807.4,928.6 L1807.2,928.4 L1806.9,928.2 L1806.6,927.9 L1806.3,927.7 L1806.0,927.4 L1805.6,927.2 L1805.3,926.9 L1805.0,926.6 L1804.6,926.3 L1804.2,925.9 L1803.8,925.6 L1803.4,925.2 L1803.0,924.9 L1802.5,924.5 L1802.1,924.1 L1801.6,923.7 L1801.0,923.3 L1800.4,922.8 L1799.8,922.3 L1799.2,921.8 L1798.6,921.3 L1797.9,920.7 L1797.2,920.2 L1796.4,919.6 L1795.7,919.0 L1794.9,918.3 L1794.1,917.7 L1793.3,916.9 L1792.4,916.2 L1791.5,915.4 L1790.5,914.5 L1789.6,913.6 L1788.5,912.7 L1787.5,911.7 L1786.4,910.6 L1785.3,909.4 L1784.2,908.3 L1783.0,907.1 L1781.8,905.7 L1780.5,904.2 L1779.2,902.4 L1777.7,900.5 L1776.2,898.5 L1774.6,896.2 L1773.0,893.8 L1771.2,891.1 L1769.4,888.1 L1767.6,885.0 L1765.6,881.6 L1763.6,878.0 L1761.5,874.0 L1759.3,869.7 L1757.1,865.0 L1754.7,859.9 L1752.2,854.4 L1749.7,848.6 L1747.0,842.4 L1744.3,835.6 L1741.4,828.3 L1738.4,820.6 L1735.3,812.3 L1732.1,803.6 L1728.8,794.3 L1725.4,784.5 L1722.1,774.0 L1718.8,762.9 L1715.5,751.2 L1712.2,738.9 L1708.8,726.0 L1705.5,712.6 L1702.3,698.7 L1699.0,684.2 L1695.7,669.0 L1692.5,653.3 L1689.3,637.3 L1686.3,621.0 L1683.6,604.8 L1680.9,588.3 L1678.4,571.5 L1676.1,554.5 L1673.9,537.5 L1672.1,520.8 L1670.5,504.4 L1669.2,488.3 L1668.1,472.2 L1667.3,456.4 L1666.8,440.9 L1666.6,425.9 L1666.8,411.4 L1667.4,397.5 L1668.3,383.8 L1669.5,370.6 L1671.1,358.0 L1673.1,346.2 L1675.4,335.3 L1678.1,325.1 L1681.2,315.6 L1684.7,306.9 L1688.5,299.0 L1692.5,292.0 L1696.7,285.9 L1701.2,280.9 L1706.0,276.9 L1711.0,273.8 L1716.2,271.4 L1721.6,269.7 L1726.9,268.5 L1732.4,268.0 L1738.0,268.4 L1743.7,269.4 L1749.4,270.9 L1755.2,272.7 L1761.0,274.6 L1766.7,276.7 L1772.5,279.1 L1778.4,281.9 L1784.2,284.8 L1789.9,287.8 L1795.6,290.8 L1801.1,293.8 L1806.6,296.9 L1812.1,300.1 L1817.5,303.4 L1822.8,306.8 L1828.2,310.2 L1833.5,313.7 L1838.7,317.2 L1843.9,320.8 L1849.1,324.5 L1854.3,328.2 L1859.5,332.0 L1864.7,335.8 L1869.8,339.8 L1875.0,343.7 L1880.1,347.8 L1885.3,351.8 L1890.4,355.9 L1895.5,360.1 L1900.6,364.3 L1905.7,368.6 L1910.8,372.8 L1915.9,377.2 L1920.9,381.5 L1926.0,385.9 L1931.1,390.3 L1936.2,394.7 L1941.3,399.2 L1946.3,403.7 L1951.4,408.2 L1956.5,412.7 L1961.6,417.3 L1966.7,421.8 L1971.8,426.4 L1976.9,431.0 L1982.0,435.6 L1987.1,440.3 L1992.1,444.9 L1997.2,449.5 L2002.3,454.2 L2007.3,458.9 L2012.4,463.5 L2017.4,468.2 L2022.5,472.8 L2027.5,477.5 L2032.6,482.1 L2037.6,486.7 L2042.6,491.4 L2047.6,496.0 L2052.5,500.6 L2057.5,505.2 L2062.4,509.8 L2067.3,514.4 L2072.2,518.9 L2077.1,523.4 L2081.9,528.0 L2086.7,532.4 L2091.5,536.9 L2096.3,541.4 L2101.0,545.7 L2105.7,550.1 L2110.3,554.5 L2114.9,558.8 L2119.5,563.1 L2124.1,567.3 L2128.5,571.5 L2133.0,575.6 L2137.4,579.7 L2141.8,583.7 L2146.1,587.7 L2150.3,591.7 L2154.5,595.6 L2158.6,599.4 L2162.7,603.2 L2166.6,606.9 L2170.6,610.6 L2174.4,614.2 L2178.1,617.7 L2181.8,621.1 L2185.3,624.4 L2188.8,627.6 L2192.1,630.8 L2195.5,633.8 L2198.7,636.9 L2201.9,639.8 L2205.0,642.8 L2208.1,645.6 L2211.1,648.4 L2214.0,651.1 L2216.8,653.7 L2219.5,656.2 L2222.1,658.6 L2224.7,661.0 L2227.1,663.3 L2229.5,665.5 L2231.8,667.6 L2234.1,669.7 L2236.2,671.7 L2238.3,673.6 L2240.3,675.5 L2242.2,677.3 L2244.0,679.0 L2245.8,680.7 L2247.5,682.3 L2249.2,683.8 L2250.8,685.3 L2252.3,686.7 L2253.8,688.1 L2255.2,689.4 L2256.6,690.7 L2257.9,691.9 L2259.1,693.1 L2260.3,694.2 L2261.5,695.3 L2262.7,696.4 L2263.8,697.4 L2264.8,698.4 L2265.8,699.3 L2266.8,700.2 L2267.8,701.1 L2268.7,702.0 L2269.6,702.9 L2270.5,703.7 L2271.3,704.5 L2272.2,705.3 L2273.0,706.0 L2273.7,706.7 L2274.5,707.4 L2275.2,708.1 L2275.9,708.8 L2276.6,709.4 L2277.2,710.0 L2277.9,710.6 L2278.5,711.1 L2279.1,711.7 L2279.6,712.2 L2280.1,712.6 L2280.7,713.1 L2281.1,713.6 L2281.6,714.0 L2282.0,714.4 L2282.4,714.8 L2282.8,715.2 L2283.2,715.5 L2283.6,715.9 L2283.9,716.2 L2284.3,716.5 L2284.6,716.8 L2284.9,717.1 L2285.2,717.3 L2285.4,717.6 L2285.7,717.8 L2285.9,718.0 L2286.1,718.3 L2286.4,718.5 L2286.6,718.7 L2286.9,719.0 L2287.2,719.2 L2287.5,719.5 L2287.8,719.8 L2288.1,720.1 L2288.3,720.3 L2288.6,720.5 L2288.8,720.7 L2289.0,720.9 L2289.2,721.1 L2289.3,721.2 L2289.5,721.4 L2289.7,721.6 L2289.9,721.8 L2290.2,722.0 L2290.4,722.2 L2290.5,722.3 L2290.6,722.5 Z M2209.8,670.8 L1919.6,455.2 L1791.5,886.4 Z" fill="#000" fill-opacity="0.385" fill-rule="evenodd"/><linearGradient id="pl" gradientUnits="userSpaceOnUse" x1="1812.1" y1="930.3" x2="2290.6" y2="722.5"><stop offset="0.0" stop-color="#2a00ff"/><stop offset="0.1" stop-color="#6a00ff"/><stop offset="0.2" stop-color="#bb00ff"/><stop offset="0.3" stop-color="#ff00df"/><stop offset="0.4" stop-color="#ff0097"/><stop offset="0.5" stop-color="#ff0067"/><stop offset="0.6" stop-color="#ff0046"/><stop offset="0.7" stop-color="#ff002d"/><stop offset="0.8" stop-color="#ff0019"/><stop offset="0.9" stop-color="#ff000a"/><stop offset="1.0" stop-color="#ff0000"/></linearGradient><path d="M1813.1,929.1L2288.6,721.3" stroke="url(#pl)" stroke-width="2.8" stroke-opacity="0.5" fill="none"/>
<rect x="1664.5" y="264.5" width="717.8" height="671.3" fill="none" stroke="#b4b0ac" stroke-width="2"/>
<path d="M1664.5,935.8V945.5" stroke="#dedcda" stroke-width="2"/>
<text x="1663.5" y="967.5" font-size="20.5" fill="#dedcda" text-anchor="middle" >0</text>
<path d="M1655,935.8H1664.5" stroke="#dedcda" stroke-width="2"/>
<text x="1654.5" y="944.3" font-size="20.5" fill="#dedcda" text-anchor="end" >0</text>
<path d="M1749.9,935.8V945.5" stroke="#dedcda" stroke-width="2"/>
<text x="1748.9" y="967.5" font-size="20.5" fill="#dedcda" text-anchor="middle" >0.1</text>
<path d="M1655,856.1H1664.5" stroke="#dedcda" stroke-width="2"/>
<text x="1654.5" y="864.6" font-size="20.5" fill="#dedcda" text-anchor="end" >0.1</text>
<path d="M1835.2,935.8V945.5" stroke="#dedcda" stroke-width="2"/>
<text x="1834.2" y="967.5" font-size="20.5" fill="#dedcda" text-anchor="middle" >0.2</text>
<path d="M1655,776.5H1664.5" stroke="#dedcda" stroke-width="2"/>
<text x="1654.5" y="785.0" font-size="20.5" fill="#dedcda" text-anchor="end" >0.2</text>
<path d="M1920.6,935.8V945.5" stroke="#dedcda" stroke-width="2"/>
<text x="1919.6" y="967.5" font-size="20.5" fill="#dedcda" text-anchor="middle" >0.3</text>
<path d="M1655,696.8H1664.5" stroke="#dedcda" stroke-width="2"/>
<text x="1654.5" y="705.3" font-size="20.5" fill="#dedcda" text-anchor="end" >0.3</text>
<path d="M2005.9,935.8V945.5" stroke="#dedcda" stroke-width="2"/>
<text x="2004.9" y="967.5" font-size="20.5" fill="#dedcda" text-anchor="middle" >0.4</text>
<path d="M1655,617.2H1664.5" stroke="#dedcda" stroke-width="2"/>
<text x="1654.5" y="625.7" font-size="20.5" fill="#dedcda" text-anchor="end" >0.4</text>
<path d="M2091.3,935.8V945.5" stroke="#dedcda" stroke-width="2"/>
<text x="2090.3" y="967.5" font-size="20.5" fill="#dedcda" text-anchor="middle" >0.5</text>
<path d="M1655,537.5H1664.5" stroke="#dedcda" stroke-width="2"/>
<text x="1654.5" y="546.0" font-size="20.5" fill="#dedcda" text-anchor="end" >0.5</text>
<path d="M2176.7,935.8V945.5" stroke="#dedcda" stroke-width="2"/>
<text x="2175.7" y="967.5" font-size="20.5" fill="#dedcda" text-anchor="middle" >0.6</text>
<path d="M1655,457.8H1664.5" stroke="#dedcda" stroke-width="2"/>
<text x="1654.5" y="466.3" font-size="20.5" fill="#dedcda" text-anchor="end" >0.6</text>
<path d="M2262.0,935.8V945.5" stroke="#dedcda" stroke-width="2"/>
<text x="2261.0" y="967.5" font-size="20.5" fill="#dedcda" text-anchor="middle" >0.7</text>
<path d="M1655,378.2H1664.5" stroke="#dedcda" stroke-width="2"/>
<text x="1654.5" y="386.7" font-size="20.5" fill="#dedcda" text-anchor="end" >0.7</text>
<path d="M2347.4,935.8V945.5" stroke="#dedcda" stroke-width="2"/>
<text x="2346.4" y="967.5" font-size="20.5" fill="#dedcda" text-anchor="middle" >0.8</text>
<path d="M1655,298.5H1664.5" stroke="#dedcda" stroke-width="2"/>
<text x="1654.5" y="307.0" font-size="20.5" fill="#dedcda" text-anchor="end" >0.8</text>
<text x="2004.0" y="256.0" font-size="19.5" fill="#dedcda" textLength="109.0" lengthAdjust="spacingAndGlyphs" text-anchor="middle" >CIE 1931 xy</text>
<rect x="2200.3" y="661.3" width="19" height="19" fill="none" stroke="#fff" stroke-width="2.2"/>
<rect x="1910.1" y="445.7" width="19" height="19" fill="none" stroke="#fff" stroke-width="2.2"/>
<rect x="1782.0" y="876.9" width="19" height="19" fill="none" stroke="#fff" stroke-width="2.2"/>
<rect x="1846.1" y="662.1" width="19" height="19" fill="none" stroke="#fff" stroke-width="2.2"/>
<rect x="1928.0" y="801.8" width="19" height="19" fill="none" stroke="#fff" stroke-width="2.2"/>
<rect x="2011.7" y="521.6" width="19" height="19" fill="none" stroke="#fff" stroke-width="2.2"/>
<rect x="1920.9" y="662.1" width="19" height="19" fill="none" stroke="#000" stroke-width="2.2"/>
<circle cx="2227.7" cy="665.2" r="5.6" fill="#c00000" stroke="#000" stroke-width="1.5"/>
<circle cx="1924.7" cy="394.5" r="5.6" fill="#20b020" stroke="#000" stroke-width="1.5"/>
<circle cx="1792.4" cy="887.2" r="4" fill="#0a0a90" stroke="#000060" stroke-width="1"/>
<circle cx="1847.0" cy="680.4" r="5.6" fill="#10b0a0" stroke="#000" stroke-width="1.5"/>
<circle cx="1918.7" cy="822.5" r="5.6" fill="#c000c0" stroke="#000" stroke-width="1.5"/>
<circle cx="2036.5" cy="494.3" r="5.6" fill="#b0b010" stroke="#000" stroke-width="1.5"/>
<circle cx="1920.4" cy="681.2" r="5.6" fill="#b8b8b8" stroke="#000" stroke-width="1.5"/>
<circle cx="1923.8" cy="674.8" r="5.6" fill="#fff" stroke="#000" stroke-width="1.5"/>
<rect x="1665.5" y="1032.8" width="709.3" height="235.6" fill="#232323" />
<path d="M1665.5,1072.8H2374.8" stroke="#9a9896" stroke-width="1.6"/>
<path d="M1665.5,1152.4H2374.8" stroke="#9a9896" stroke-width="1.6"/>
<path d="M1665.5,1232.0H2374.8" stroke="#9a9896" stroke-width="1.6"/>
<rect x="1762.4" y="1152.4" width="70.2" height="18.3" fill="url(#bR)" stroke="#000" stroke-width="2"/>
<rect x="1851.4" y="1117.8" width="69.6" height="34.6" fill="url(#bG)" stroke="#000" stroke-width="2"/>
<rect x="1939.5" y="1152.4" width="70.5" height="97.9" fill="url(#bB)" stroke="#000" stroke-width="2"/>
<rect x="2028.6" y="1121.8" width="68.9" height="30.6" fill="url(#bC)" stroke="#000" stroke-width="2"/>
<rect x="2117.0" y="1146.0" width="69.5" height="6.4" fill="url(#bM)" stroke="#000" stroke-width="2"/>
<rect x="2205.0" y="1131.3" width="69.6" height="21.1" fill="url(#bY)" stroke="#000" stroke-width="2"/>
<path d="M1674,1152.4H1744.5M2295,1152.4H2364" stroke="#111" stroke-width="2"/>
<rect x="1665.5" y="1032.8" width="709.3" height="235.6" fill="none" stroke="#b4b0ac" stroke-width="2"/>
<path d="M1656,1072.8H1665.5" stroke="#dedcda" stroke-width="2"/>
<text x="1655.5" y="1081.8" font-size="20.5" fill="#dedcda" text-anchor="end" >20</text>
<path d="M1656,1152.4H1665.5" stroke="#dedcda" stroke-width="2"/>
<text x="1655.5" y="1161.4" font-size="20.5" fill="#dedcda" text-anchor="end" >0</text>
<path d="M1656,1232.0H1665.5" stroke="#dedcda" stroke-width="2"/>
<text x="1655.5" y="1241.0" font-size="20.5" fill="#dedcda" text-anchor="end" >-20</text>
<path d="M1665.5,1268.4V1276" stroke="#dedcda" stroke-width="2"/>
<text x="1709.3" y="1291.5" font-size="20.5" fill="#dedcda" textLength="58.0" lengthAdjust="spacingAndGlyphs" text-anchor="middle" >White</text>
<path d="M1754.2,1268.4V1276" stroke="#dedcda" stroke-width="2"/>
<text x="1798.0" y="1291.5" font-size="20.5" fill="#dedcda" textLength="37.0" lengthAdjust="spacingAndGlyphs" text-anchor="middle" >Red</text>
<path d="M1842.8,1268.4V1276" stroke="#dedcda" stroke-width="2"/>
<text x="1886.7" y="1291.5" font-size="20.5" fill="#dedcda" textLength="59.0" lengthAdjust="spacingAndGlyphs" text-anchor="middle" >Green</text>
<path d="M1931.5,1268.4V1276" stroke="#dedcda" stroke-width="2"/>
<text x="1975.3" y="1291.5" font-size="20.5" fill="#dedcda" textLength="42.0" lengthAdjust="spacingAndGlyphs" text-anchor="middle" >Blue</text>
<path d="M2020.2,1268.4V1276" stroke="#dedcda" stroke-width="2"/>
<text x="2064.0" y="1291.5" font-size="20.5" fill="#dedcda" textLength="47.0" lengthAdjust="spacingAndGlyphs" text-anchor="middle" >Cyan</text>
<path d="M2108.8,1268.4V1276" stroke="#dedcda" stroke-width="2"/>
<text x="2152.6" y="1291.5" font-size="20.5" fill="#dedcda" textLength="84.0" lengthAdjust="spacingAndGlyphs" text-anchor="middle" >Magenta</text>
<path d="M2197.5,1268.4V1276" stroke="#dedcda" stroke-width="2"/>
<text x="2241.3" y="1291.5" font-size="20.5" fill="#dedcda" textLength="62.0" lengthAdjust="spacingAndGlyphs" text-anchor="middle" >Yellow</text>
<path d="M2286.1,1268.4V1276" stroke="#dedcda" stroke-width="2"/>
<text x="2330.0" y="1291.5" font-size="20.5" fill="#dedcda" textLength="57.0" lengthAdjust="spacingAndGlyphs" text-anchor="middle" >100W</text>
<path d="M2374.8,1268.4V1276" stroke="#dedcda" stroke-width="2"/>
<text x="2000.0" y="1025.0" font-size="19.5" fill="#dedcda" textLength="174.0" lengthAdjust="spacingAndGlyphs" text-anchor="middle" >Gamut Luminance</text>
<rect x="0.0" y="1311.0" width="2410.0" height="3.0" fill="#1e1e1e" />
<rect x="8.0" y="1313.3" width="213" height="8" rx="4" fill="#777" stroke="#b0b0b0" stroke-width="1.4"/>
<rect x="233.0" y="1313.3" width="213" height="8" rx="4" fill="#777" stroke="#b0b0b0" stroke-width="1.4"/>
<rect x="458.0" y="1313.3" width="213" height="8" rx="4" fill="#777" stroke="#b0b0b0" stroke-width="1.4"/>
<rect x="683.0" y="1313.3" width="213" height="8" rx="4" fill="#777" stroke="#b0b0b0" stroke-width="1.4"/>
<rect x="908.0" y="1313.3" width="213" height="8" rx="4" fill="#777" stroke="#b0b0b0" stroke-width="1.4"/>
<rect x="1133.0" y="1313.3" width="213" height="8" rx="4" fill="#777" stroke="#b0b0b0" stroke-width="1.4"/>
<rect x="1358.0" y="1313.3" width="213" height="8" rx="4" fill="#777" stroke="#b0b0b0" stroke-width="1.4"/>
<rect x="1583.0" y="1313.3" width="213" height="8" rx="4" fill="#777" stroke="#b0b0b0" stroke-width="1.4"/>
<rect x="1808.0" y="1313.3" width="213" height="8" rx="4" fill="#777" stroke="#b0b0b0" stroke-width="1.4"/>
<rect x="2033.0" y="1313.3" width="213" height="8" rx="4" fill="#777" stroke="#b0b0b0" stroke-width="1.4"/>
<rect x="2258.0" y="1313.3" width="213" height="8" rx="4" fill="#777" stroke="#b0b0b0" stroke-width="1.4"/>
<g filter="url(#glow)" style="font-family:'Noto Sans CJK SC','Liberation Sans',sans-serif" font-weight="900" font-size="170" fill="#ffb81e" stroke="#ffb81e" stroke-width="6.5" stroke-linejoin="round"><text transform="translate(774.50,283.50) skewX(-5) scale(1.0737,0.9685)" vector-effect="non-scaling-stroke">电</text><text transform="translate(973.75,283.50) skewX(-5) scale(1.0335,0.9687)" vector-effect="non-scaling-stroke">影</text><text transform="translate(1166.00,283.50) skewX(-5) scale(1.0000,0.9453)" vector-effect="non-scaling-stroke">胶</text><text transform="translate(1358.25,283.00) skewX(-5) scale(1.0663,0.9511)" vector-effect="non-scaling-stroke">片</text><text transform="translate(1534.00,299.00) skewX(-5) scale(0.9274,1.2430)" vector-effect="non-scaling-stroke">1</text></g>
</svg>
</body></html>
